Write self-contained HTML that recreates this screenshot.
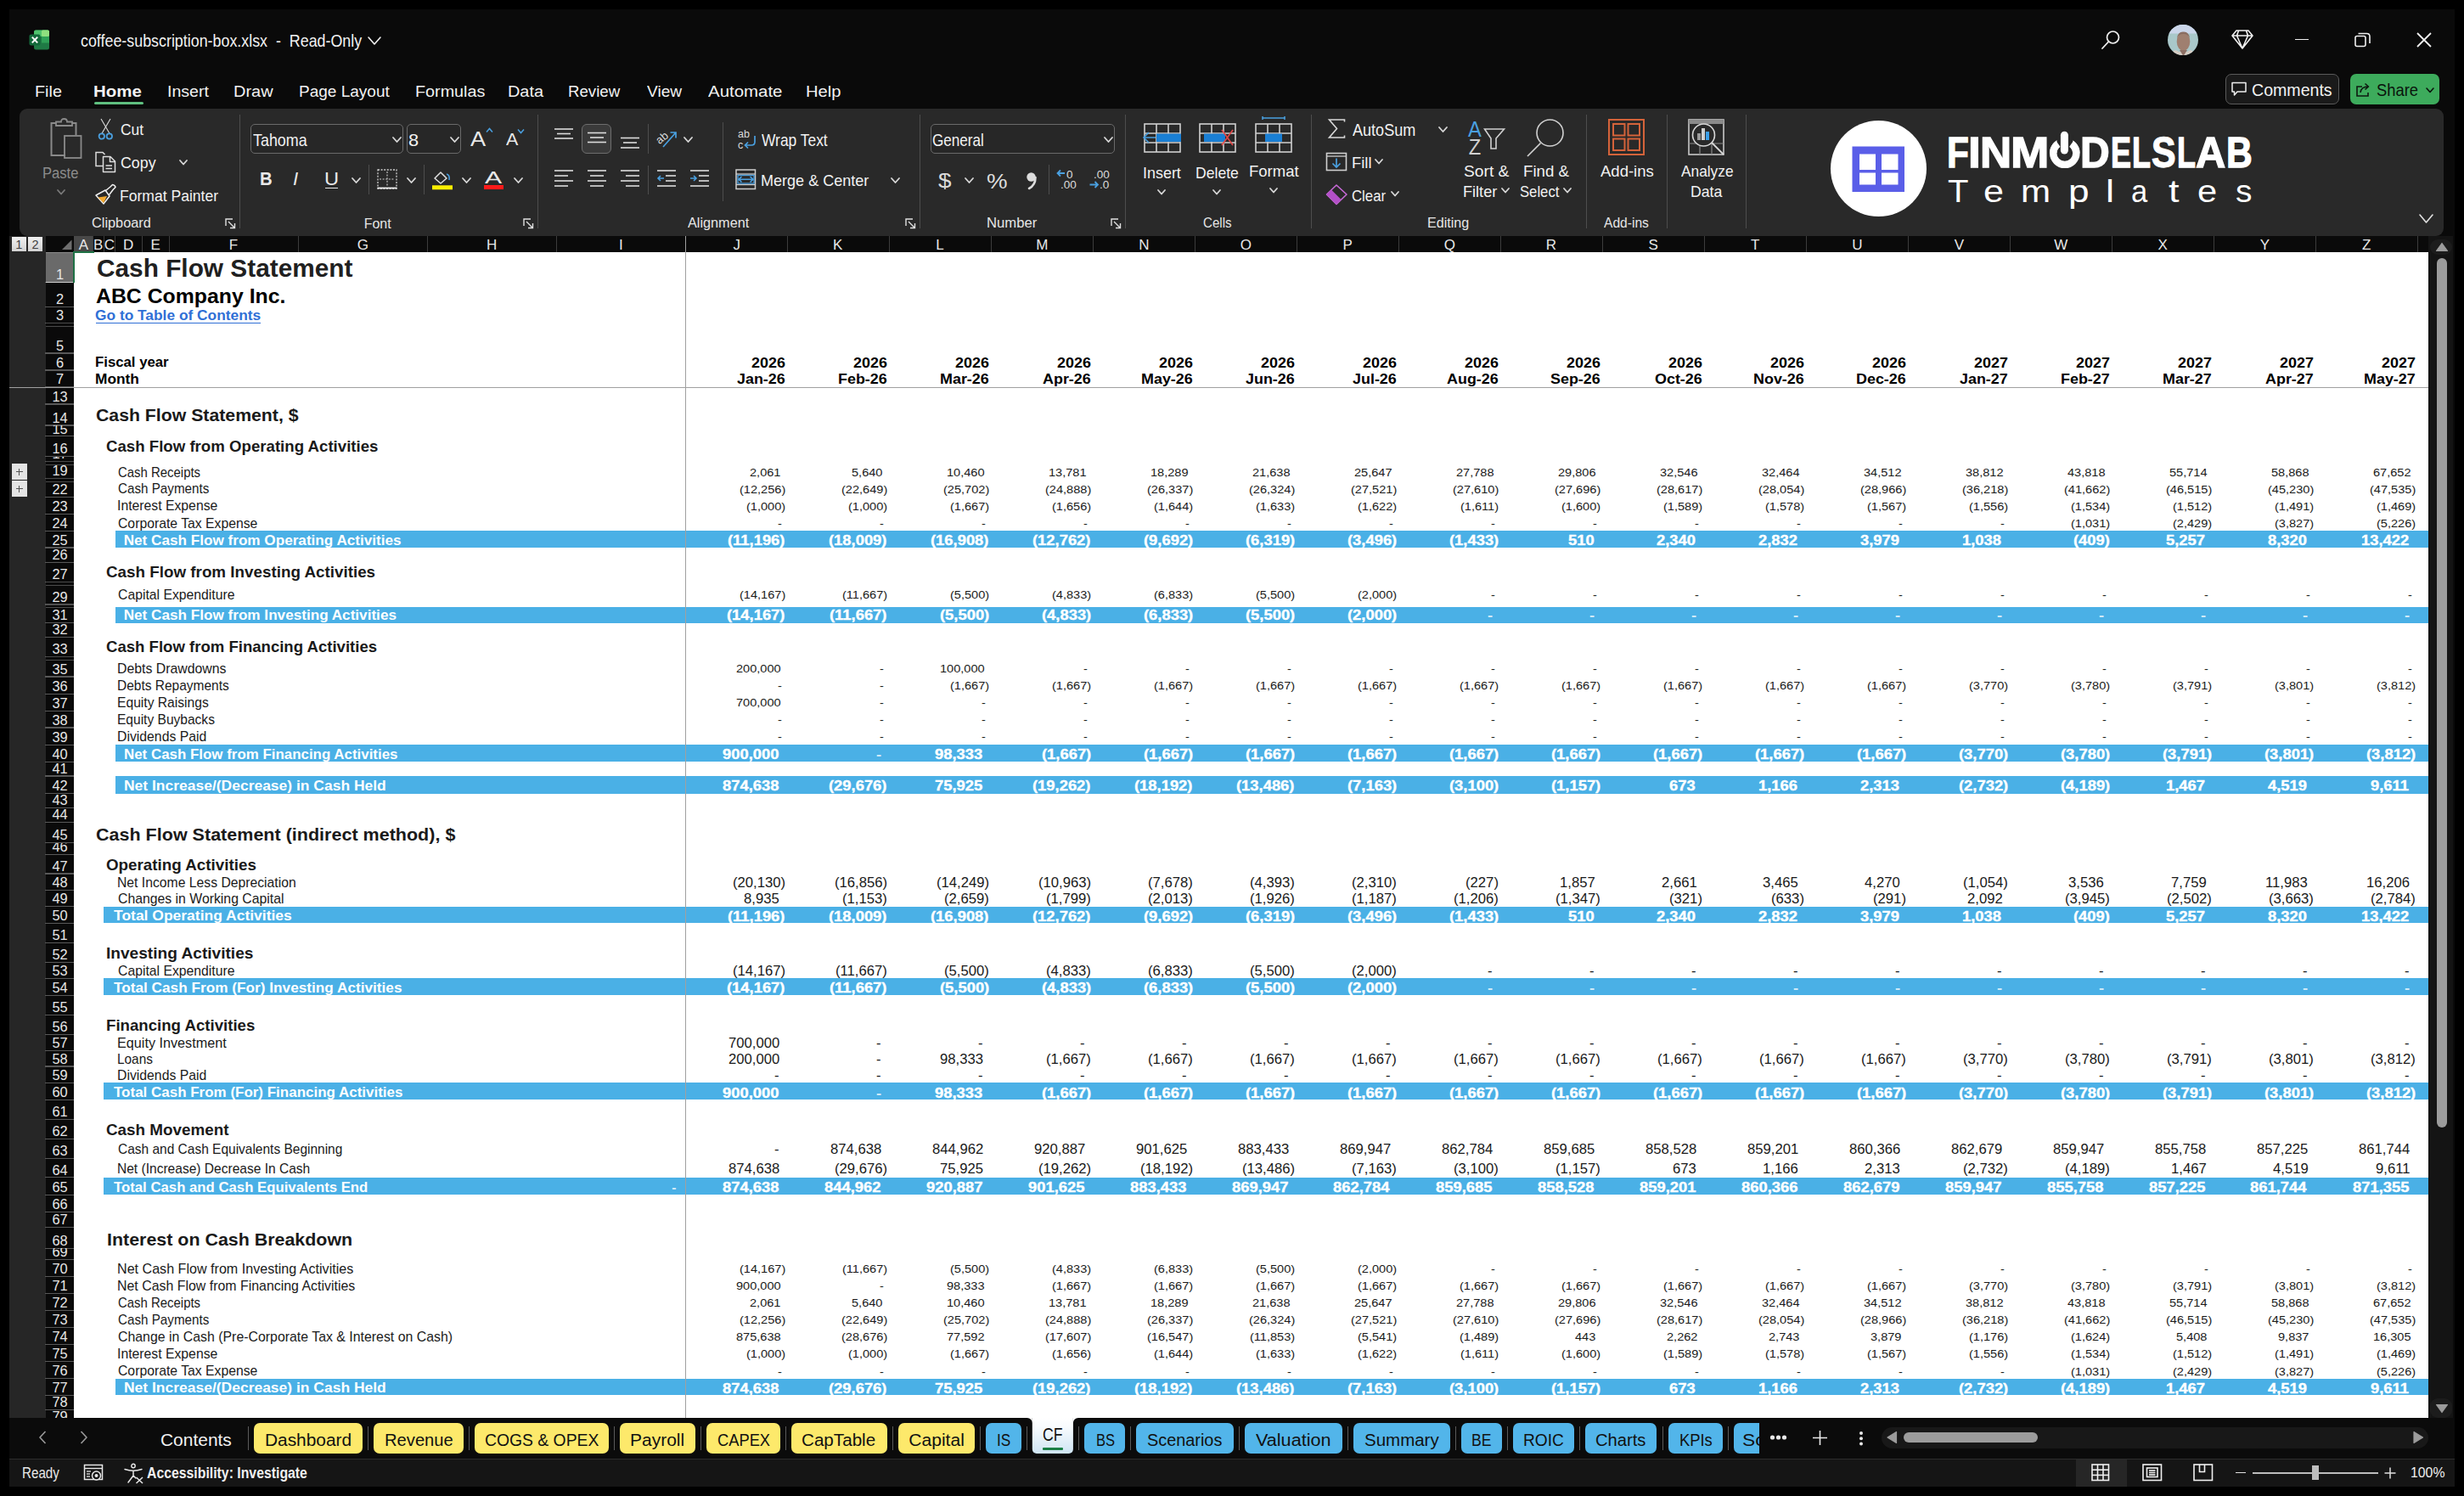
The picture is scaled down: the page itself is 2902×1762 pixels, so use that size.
<!DOCTYPE html>
<html><head><meta charset="utf-8"><style>
*{margin:0;padding:0;box-sizing:border-box}
html,body{width:2902px;height:1762px;overflow:hidden;background:#000;font-family:"Liberation Sans",sans-serif}
.a{position:absolute}
.t{position:absolute;white-space:pre;transform-origin:0 0}
svg{position:absolute;overflow:visible}
</style></head><body>
<div class="a" style="left:11.00px;top:11.00px;width:2880.00px;height:1740.00px;background:#0a0a0a;"></div>
<div class="a" style="left:87.00px;top:297.00px;width:2773.00px;height:1373.00px;background:#ffffff;"></div>
<div class="a" style="left:11.00px;top:278.00px;width:43.00px;height:1392.00px;background:#262626;"></div>
<div class="a" style="left:54.00px;top:297.00px;width:33.00px;height:1373.00px;background:#0a0a0a;"></div>
<div class="a" style="left:54.00px;top:278.00px;width:2806.00px;height:19.00px;background:#0a0a0a;"></div>
<div class="a" style="left:135.50px;top:625.40px;width:2724.50px;height:19.60px;background:#4ab0e6;"></div>
<div class="a" style="left:135.50px;top:715.00px;width:2724.50px;height:18.50px;background:#4ab0e6;"></div>
<div class="a" style="left:135.50px;top:877.10px;width:2724.50px;height:20.30px;background:#4ab0e6;"></div>
<div class="a" style="left:135.50px;top:914.00px;width:2724.50px;height:20.50px;background:#4ab0e6;"></div>
<div class="a" style="left:135.50px;top:1623.50px;width:2724.50px;height:19.70px;background:#4ab0e6;"></div>
<div class="a" style="left:122.40px;top:1067.50px;width:2737.60px;height:19.90px;background:#4ab0e6;"></div>
<div class="a" style="left:122.40px;top:1152.20px;width:2737.60px;height:20.30px;background:#4ab0e6;"></div>
<div class="a" style="left:122.40px;top:1275.20px;width:2737.60px;height:20.30px;background:#4ab0e6;"></div>
<div class="a" style="left:122.40px;top:1386.80px;width:2737.60px;height:20.30px;background:#4ab0e6;"></div>
<div class="a" style="left:54.00px;top:297.00px;width:33.00px;height:35.50px;background:#6a6a6a;"></div>
<div class="a" style="left:54px;top:297.00px;width:33px;height:35.50px;overflow:hidden"><div class="t" style="left:0;width:33px;text-align:center;top:18.26px;font-size:16.4px;line-height:16.4px;color:#e6e6e6">1</div></div>
<div class="a" style="left:53.00px;top:331.90px;width:34.00px;height:1.20px;background:#585858;"></div>
<div class="a" style="left:54px;top:332.50px;width:33px;height:29.20px;overflow:hidden"><div class="t" style="left:0;width:33px;text-align:center;top:11.96px;font-size:16.4px;line-height:16.4px;color:#e6e6e6">2</div></div>
<div class="a" style="left:53.00px;top:361.10px;width:34.00px;height:1.20px;background:#585858;"></div>
<div class="a" style="left:54px;top:361.70px;width:33px;height:18.90px;overflow:hidden"><div class="t" style="left:0;width:33px;text-align:center;top:1.66px;font-size:16.4px;line-height:16.4px;color:#e6e6e6">3</div></div>
<div class="a" style="left:53.00px;top:380.00px;width:34.00px;height:1.20px;background:#585858;"></div>
<div class="a" style="left:54px;top:384.60px;width:33px;height:31.40px;overflow:hidden"><div class="t" style="left:0;width:33px;text-align:center;top:14.16px;font-size:16.4px;line-height:16.4px;color:#e6e6e6">5</div></div>
<div class="a" style="left:53.00px;top:415.40px;width:34.00px;height:1.20px;background:#585858;"></div>
<div class="a" style="left:54px;top:416.00px;width:33px;height:20.00px;overflow:hidden"><div class="t" style="left:0;width:33px;text-align:center;top:2.76px;font-size:16.4px;line-height:16.4px;color:#e6e6e6">6</div></div>
<div class="a" style="left:53.00px;top:435.40px;width:34.00px;height:1.20px;background:#585858;"></div>
<div class="a" style="left:54px;top:436.00px;width:33px;height:19.50px;overflow:hidden"><div class="t" style="left:0;width:33px;text-align:center;top:2.26px;font-size:16.4px;line-height:16.4px;color:#e6e6e6">7</div></div>
<div class="a" style="left:53.00px;top:454.90px;width:34.00px;height:1.20px;background:#585858;"></div>
<div class="a" style="left:54px;top:456.50px;width:33px;height:19.50px;overflow:hidden"><div class="t" style="left:0;width:33px;text-align:center;top:2.26px;font-size:16.4px;line-height:16.4px;color:#e6e6e6">13</div></div>
<div class="a" style="left:53.00px;top:475.40px;width:34.00px;height:1.20px;background:#585858;"></div>
<div class="a" style="left:54px;top:476.00px;width:33px;height:25.00px;overflow:hidden"><div class="t" style="left:0;width:33px;text-align:center;top:7.76px;font-size:16.4px;line-height:16.4px;color:#e6e6e6">14</div></div>
<div class="a" style="left:53.00px;top:500.40px;width:34.00px;height:1.20px;background:#585858;"></div>
<div class="a" style="left:54px;top:501.00px;width:33px;height:12.80px;overflow:hidden"><div class="t" style="left:0;width:33px;text-align:center;top:-4.44px;font-size:16.4px;line-height:16.4px;color:#e6e6e6">15</div></div>
<div class="a" style="left:53.00px;top:513.20px;width:34.00px;height:1.20px;background:#585858;"></div>
<div class="a" style="left:54px;top:513.80px;width:33px;height:23.70px;overflow:hidden"><div class="t" style="left:0;width:33px;text-align:center;top:6.46px;font-size:16.4px;line-height:16.4px;color:#e6e6e6">16</div></div>
<div class="a" style="left:53.00px;top:536.90px;width:34.00px;height:1.20px;background:#585858;"></div>
<div class="a" style="left:54px;top:537.50px;width:33px;height:5.70px;overflow:hidden"><div class="t" style="left:0;width:33px;text-align:center;top:-11.54px;font-size:16.4px;line-height:16.4px;color:#e6e6e6">17</div></div>
<div class="a" style="left:53.00px;top:542.60px;width:34.00px;height:1.20px;background:#585858;"></div>
<div class="a" style="left:54px;top:547.70px;width:33px;height:15.60px;overflow:hidden"><div class="t" style="left:0;width:33px;text-align:center;top:-1.64px;font-size:16.4px;line-height:16.4px;color:#e6e6e6">19</div></div>
<div class="a" style="left:53.00px;top:562.70px;width:34.00px;height:1.20px;background:#585858;"></div>
<div class="a" style="left:54px;top:567.00px;width:33px;height:18.60px;overflow:hidden"><div class="t" style="left:0;width:33px;text-align:center;top:1.36px;font-size:16.4px;line-height:16.4px;color:#e6e6e6">22</div></div>
<div class="a" style="left:53.00px;top:585.00px;width:34.00px;height:1.20px;background:#585858;"></div>
<div class="a" style="left:54px;top:585.60px;width:33px;height:19.90px;overflow:hidden"><div class="t" style="left:0;width:33px;text-align:center;top:2.66px;font-size:16.4px;line-height:16.4px;color:#e6e6e6">23</div></div>
<div class="a" style="left:53.00px;top:604.90px;width:34.00px;height:1.20px;background:#585858;"></div>
<div class="a" style="left:54px;top:605.50px;width:33px;height:19.90px;overflow:hidden"><div class="t" style="left:0;width:33px;text-align:center;top:2.66px;font-size:16.4px;line-height:16.4px;color:#e6e6e6">24</div></div>
<div class="a" style="left:53.00px;top:624.80px;width:34.00px;height:1.20px;background:#585858;"></div>
<div class="a" style="left:54px;top:625.40px;width:33px;height:19.60px;overflow:hidden"><div class="t" style="left:0;width:33px;text-align:center;top:2.36px;font-size:16.4px;line-height:16.4px;color:#e6e6e6">25</div></div>
<div class="a" style="left:53.00px;top:644.40px;width:34.00px;height:1.20px;background:#585858;"></div>
<div class="a" style="left:54px;top:645.00px;width:33px;height:17.30px;overflow:hidden"><div class="t" style="left:0;width:33px;text-align:center;top:0.06px;font-size:16.4px;line-height:16.4px;color:#e6e6e6">26</div></div>
<div class="a" style="left:53.00px;top:661.70px;width:34.00px;height:1.20px;background:#585858;"></div>
<div class="a" style="left:54px;top:662.30px;width:33px;height:23.00px;overflow:hidden"><div class="t" style="left:0;width:33px;text-align:center;top:5.76px;font-size:16.4px;line-height:16.4px;color:#e6e6e6">27</div></div>
<div class="a" style="left:53.00px;top:684.70px;width:34.00px;height:1.20px;background:#585858;"></div>
<div class="a" style="left:54px;top:689.00px;width:33px;height:23.00px;overflow:hidden"><div class="t" style="left:0;width:33px;text-align:center;top:5.76px;font-size:16.4px;line-height:16.4px;color:#e6e6e6">29</div></div>
<div class="a" style="left:53.00px;top:711.40px;width:34.00px;height:1.20px;background:#585858;"></div>
<div class="a" style="left:54px;top:715.00px;width:33px;height:18.50px;overflow:hidden"><div class="t" style="left:0;width:33px;text-align:center;top:1.26px;font-size:16.4px;line-height:16.4px;color:#e6e6e6">31</div></div>
<div class="a" style="left:53.00px;top:732.90px;width:34.00px;height:1.20px;background:#585858;"></div>
<div class="a" style="left:54px;top:733.50px;width:33px;height:16.80px;overflow:hidden"><div class="t" style="left:0;width:33px;text-align:center;top:-0.44px;font-size:16.4px;line-height:16.4px;color:#e6e6e6">32</div></div>
<div class="a" style="left:53.00px;top:749.70px;width:34.00px;height:1.20px;background:#585858;"></div>
<div class="a" style="left:54px;top:750.30px;width:33px;height:22.90px;overflow:hidden"><div class="t" style="left:0;width:33px;text-align:center;top:5.66px;font-size:16.4px;line-height:16.4px;color:#e6e6e6">33</div></div>
<div class="a" style="left:53.00px;top:772.60px;width:34.00px;height:1.20px;background:#585858;"></div>
<div class="a" style="left:54px;top:777.30px;width:33px;height:19.70px;overflow:hidden"><div class="t" style="left:0;width:33px;text-align:center;top:2.46px;font-size:16.4px;line-height:16.4px;color:#e6e6e6">35</div></div>
<div class="a" style="left:53.00px;top:796.40px;width:34.00px;height:1.20px;background:#585858;"></div>
<div class="a" style="left:54px;top:797.00px;width:33px;height:20.30px;overflow:hidden"><div class="t" style="left:0;width:33px;text-align:center;top:3.06px;font-size:16.4px;line-height:16.4px;color:#e6e6e6">36</div></div>
<div class="a" style="left:53.00px;top:816.70px;width:34.00px;height:1.20px;background:#585858;"></div>
<div class="a" style="left:54px;top:817.30px;width:33px;height:19.80px;overflow:hidden"><div class="t" style="left:0;width:33px;text-align:center;top:2.56px;font-size:16.4px;line-height:16.4px;color:#e6e6e6">37</div></div>
<div class="a" style="left:53.00px;top:836.50px;width:34.00px;height:1.20px;background:#585858;"></div>
<div class="a" style="left:54px;top:837.10px;width:33px;height:19.90px;overflow:hidden"><div class="t" style="left:0;width:33px;text-align:center;top:2.66px;font-size:16.4px;line-height:16.4px;color:#e6e6e6">38</div></div>
<div class="a" style="left:53.00px;top:856.40px;width:34.00px;height:1.20px;background:#585858;"></div>
<div class="a" style="left:54px;top:857.00px;width:33px;height:20.10px;overflow:hidden"><div class="t" style="left:0;width:33px;text-align:center;top:2.86px;font-size:16.4px;line-height:16.4px;color:#e6e6e6">39</div></div>
<div class="a" style="left:53.00px;top:876.50px;width:34.00px;height:1.20px;background:#585858;"></div>
<div class="a" style="left:54px;top:877.10px;width:33px;height:20.30px;overflow:hidden"><div class="t" style="left:0;width:33px;text-align:center;top:3.06px;font-size:16.4px;line-height:16.4px;color:#e6e6e6">40</div></div>
<div class="a" style="left:53.00px;top:896.80px;width:34.00px;height:1.20px;background:#585858;"></div>
<div class="a" style="left:54px;top:897.40px;width:33px;height:16.60px;overflow:hidden"><div class="t" style="left:0;width:33px;text-align:center;top:-0.64px;font-size:16.4px;line-height:16.4px;color:#e6e6e6">41</div></div>
<div class="a" style="left:53.00px;top:913.40px;width:34.00px;height:1.20px;background:#585858;"></div>
<div class="a" style="left:54px;top:914.00px;width:33px;height:20.50px;overflow:hidden"><div class="t" style="left:0;width:33px;text-align:center;top:3.26px;font-size:16.4px;line-height:16.4px;color:#e6e6e6">42</div></div>
<div class="a" style="left:53.00px;top:933.90px;width:34.00px;height:1.20px;background:#585858;"></div>
<div class="a" style="left:54px;top:934.50px;width:33px;height:16.70px;overflow:hidden"><div class="t" style="left:0;width:33px;text-align:center;top:-0.54px;font-size:16.4px;line-height:16.4px;color:#e6e6e6">43</div></div>
<div class="a" style="left:53.00px;top:950.60px;width:34.00px;height:1.20px;background:#585858;"></div>
<div class="a" style="left:54px;top:951.20px;width:33px;height:17.00px;overflow:hidden"><div class="t" style="left:0;width:33px;text-align:center;top:-0.24px;font-size:16.4px;line-height:16.4px;color:#e6e6e6">44</div></div>
<div class="a" style="left:53.00px;top:967.60px;width:34.00px;height:1.20px;background:#585858;"></div>
<div class="a" style="left:54px;top:968.20px;width:33px;height:24.30px;overflow:hidden"><div class="t" style="left:0;width:33px;text-align:center;top:7.06px;font-size:16.4px;line-height:16.4px;color:#e6e6e6">45</div></div>
<div class="a" style="left:53.00px;top:991.90px;width:34.00px;height:1.20px;background:#585858;"></div>
<div class="a" style="left:54px;top:992.50px;width:33px;height:13.80px;overflow:hidden"><div class="t" style="left:0;width:33px;text-align:center;top:-3.44px;font-size:16.4px;line-height:16.4px;color:#e6e6e6">46</div></div>
<div class="a" style="left:53.00px;top:1005.70px;width:34.00px;height:1.20px;background:#585858;"></div>
<div class="a" style="left:54px;top:1006.30px;width:33px;height:22.70px;overflow:hidden"><div class="t" style="left:0;width:33px;text-align:center;top:5.46px;font-size:16.4px;line-height:16.4px;color:#e6e6e6">47</div></div>
<div class="a" style="left:53.00px;top:1028.40px;width:34.00px;height:1.20px;background:#585858;"></div>
<div class="a" style="left:54px;top:1029.00px;width:33px;height:19.30px;overflow:hidden"><div class="t" style="left:0;width:33px;text-align:center;top:2.06px;font-size:16.4px;line-height:16.4px;color:#e6e6e6">48</div></div>
<div class="a" style="left:53.00px;top:1047.70px;width:34.00px;height:1.20px;background:#585858;"></div>
<div class="a" style="left:54px;top:1048.30px;width:33px;height:19.20px;overflow:hidden"><div class="t" style="left:0;width:33px;text-align:center;top:1.96px;font-size:16.4px;line-height:16.4px;color:#e6e6e6">49</div></div>
<div class="a" style="left:53.00px;top:1066.90px;width:34.00px;height:1.20px;background:#585858;"></div>
<div class="a" style="left:54px;top:1067.50px;width:33px;height:19.90px;overflow:hidden"><div class="t" style="left:0;width:33px;text-align:center;top:2.66px;font-size:16.4px;line-height:16.4px;color:#e6e6e6">50</div></div>
<div class="a" style="left:53.00px;top:1086.80px;width:34.00px;height:1.20px;background:#585858;"></div>
<div class="a" style="left:54px;top:1087.40px;width:33px;height:22.80px;overflow:hidden"><div class="t" style="left:0;width:33px;text-align:center;top:5.56px;font-size:16.4px;line-height:16.4px;color:#e6e6e6">51</div></div>
<div class="a" style="left:53.00px;top:1109.60px;width:34.00px;height:1.20px;background:#585858;"></div>
<div class="a" style="left:54px;top:1110.20px;width:33px;height:23.30px;overflow:hidden"><div class="t" style="left:0;width:33px;text-align:center;top:6.06px;font-size:16.4px;line-height:16.4px;color:#e6e6e6">52</div></div>
<div class="a" style="left:53.00px;top:1132.90px;width:34.00px;height:1.20px;background:#585858;"></div>
<div class="a" style="left:54px;top:1133.50px;width:33px;height:18.70px;overflow:hidden"><div class="t" style="left:0;width:33px;text-align:center;top:1.46px;font-size:16.4px;line-height:16.4px;color:#e6e6e6">53</div></div>
<div class="a" style="left:53.00px;top:1151.60px;width:34.00px;height:1.20px;background:#585858;"></div>
<div class="a" style="left:54px;top:1152.20px;width:33px;height:20.30px;overflow:hidden"><div class="t" style="left:0;width:33px;text-align:center;top:3.06px;font-size:16.4px;line-height:16.4px;color:#e6e6e6">54</div></div>
<div class="a" style="left:53.00px;top:1171.90px;width:34.00px;height:1.20px;background:#585858;"></div>
<div class="a" style="left:54px;top:1172.50px;width:33px;height:23.10px;overflow:hidden"><div class="t" style="left:0;width:33px;text-align:center;top:5.86px;font-size:16.4px;line-height:16.4px;color:#e6e6e6">55</div></div>
<div class="a" style="left:53.00px;top:1195.00px;width:34.00px;height:1.20px;background:#585858;"></div>
<div class="a" style="left:54px;top:1195.60px;width:33px;height:22.80px;overflow:hidden"><div class="t" style="left:0;width:33px;text-align:center;top:5.56px;font-size:16.4px;line-height:16.4px;color:#e6e6e6">56</div></div>
<div class="a" style="left:53.00px;top:1217.80px;width:34.00px;height:1.20px;background:#585858;"></div>
<div class="a" style="left:54px;top:1218.40px;width:33px;height:18.90px;overflow:hidden"><div class="t" style="left:0;width:33px;text-align:center;top:1.66px;font-size:16.4px;line-height:16.4px;color:#e6e6e6">57</div></div>
<div class="a" style="left:53.00px;top:1236.70px;width:34.00px;height:1.20px;background:#585858;"></div>
<div class="a" style="left:54px;top:1237.30px;width:33px;height:18.70px;overflow:hidden"><div class="t" style="left:0;width:33px;text-align:center;top:1.46px;font-size:16.4px;line-height:16.4px;color:#e6e6e6">58</div></div>
<div class="a" style="left:53.00px;top:1255.40px;width:34.00px;height:1.20px;background:#585858;"></div>
<div class="a" style="left:54px;top:1256.00px;width:33px;height:19.20px;overflow:hidden"><div class="t" style="left:0;width:33px;text-align:center;top:1.96px;font-size:16.4px;line-height:16.4px;color:#e6e6e6">59</div></div>
<div class="a" style="left:53.00px;top:1274.60px;width:34.00px;height:1.20px;background:#585858;"></div>
<div class="a" style="left:54px;top:1275.20px;width:33px;height:20.30px;overflow:hidden"><div class="t" style="left:0;width:33px;text-align:center;top:3.06px;font-size:16.4px;line-height:16.4px;color:#e6e6e6">60</div></div>
<div class="a" style="left:53.00px;top:1294.90px;width:34.00px;height:1.20px;background:#585858;"></div>
<div class="a" style="left:54px;top:1295.50px;width:33px;height:22.90px;overflow:hidden"><div class="t" style="left:0;width:33px;text-align:center;top:5.66px;font-size:16.4px;line-height:16.4px;color:#e6e6e6">61</div></div>
<div class="a" style="left:53.00px;top:1317.80px;width:34.00px;height:1.20px;background:#585858;"></div>
<div class="a" style="left:54px;top:1318.40px;width:33px;height:22.80px;overflow:hidden"><div class="t" style="left:0;width:33px;text-align:center;top:5.56px;font-size:16.4px;line-height:16.4px;color:#e6e6e6">62</div></div>
<div class="a" style="left:53.00px;top:1340.60px;width:34.00px;height:1.20px;background:#585858;"></div>
<div class="a" style="left:54px;top:1341.20px;width:33px;height:22.90px;overflow:hidden"><div class="t" style="left:0;width:33px;text-align:center;top:5.66px;font-size:16.4px;line-height:16.4px;color:#e6e6e6">63</div></div>
<div class="a" style="left:53.00px;top:1363.50px;width:34.00px;height:1.20px;background:#585858;"></div>
<div class="a" style="left:54px;top:1364.10px;width:33px;height:22.70px;overflow:hidden"><div class="t" style="left:0;width:33px;text-align:center;top:5.46px;font-size:16.4px;line-height:16.4px;color:#e6e6e6">64</div></div>
<div class="a" style="left:53.00px;top:1386.20px;width:34.00px;height:1.20px;background:#585858;"></div>
<div class="a" style="left:54px;top:1386.80px;width:33px;height:20.30px;overflow:hidden"><div class="t" style="left:0;width:33px;text-align:center;top:3.06px;font-size:16.4px;line-height:16.4px;color:#e6e6e6">65</div></div>
<div class="a" style="left:53.00px;top:1406.50px;width:34.00px;height:1.20px;background:#585858;"></div>
<div class="a" style="left:54px;top:1407.10px;width:33px;height:20.60px;overflow:hidden"><div class="t" style="left:0;width:33px;text-align:center;top:3.36px;font-size:16.4px;line-height:16.4px;color:#e6e6e6">66</div></div>
<div class="a" style="left:53.00px;top:1427.10px;width:34.00px;height:1.20px;background:#585858;"></div>
<div class="a" style="left:54px;top:1427.70px;width:33px;height:17.70px;overflow:hidden"><div class="t" style="left:0;width:33px;text-align:center;top:0.46px;font-size:16.4px;line-height:16.4px;color:#e6e6e6">67</div></div>
<div class="a" style="left:53.00px;top:1444.80px;width:34.00px;height:1.20px;background:#585858;"></div>
<div class="a" style="left:54px;top:1445.40px;width:33px;height:24.90px;overflow:hidden"><div class="t" style="left:0;width:33px;text-align:center;top:7.66px;font-size:16.4px;line-height:16.4px;color:#e6e6e6">68</div></div>
<div class="a" style="left:53.00px;top:1469.70px;width:34.00px;height:1.20px;background:#585858;"></div>
<div class="a" style="left:54px;top:1470.30px;width:33px;height:13.20px;overflow:hidden"><div class="t" style="left:0;width:33px;text-align:center;top:-4.04px;font-size:16.4px;line-height:16.4px;color:#e6e6e6">69</div></div>
<div class="a" style="left:53.00px;top:1482.90px;width:34.00px;height:1.20px;background:#585858;"></div>
<div class="a" style="left:54px;top:1483.50px;width:33px;height:19.70px;overflow:hidden"><div class="t" style="left:0;width:33px;text-align:center;top:2.46px;font-size:16.4px;line-height:16.4px;color:#e6e6e6">70</div></div>
<div class="a" style="left:53.00px;top:1502.60px;width:34.00px;height:1.20px;background:#585858;"></div>
<div class="a" style="left:54px;top:1503.20px;width:33px;height:19.90px;overflow:hidden"><div class="t" style="left:0;width:33px;text-align:center;top:2.66px;font-size:16.4px;line-height:16.4px;color:#e6e6e6">71</div></div>
<div class="a" style="left:53.00px;top:1522.50px;width:34.00px;height:1.20px;background:#585858;"></div>
<div class="a" style="left:54px;top:1523.10px;width:33px;height:20.30px;overflow:hidden"><div class="t" style="left:0;width:33px;text-align:center;top:3.06px;font-size:16.4px;line-height:16.4px;color:#e6e6e6">72</div></div>
<div class="a" style="left:53.00px;top:1542.80px;width:34.00px;height:1.20px;background:#585858;"></div>
<div class="a" style="left:54px;top:1543.40px;width:33px;height:19.70px;overflow:hidden"><div class="t" style="left:0;width:33px;text-align:center;top:2.46px;font-size:16.4px;line-height:16.4px;color:#e6e6e6">73</div></div>
<div class="a" style="left:53.00px;top:1562.50px;width:34.00px;height:1.20px;background:#585858;"></div>
<div class="a" style="left:54px;top:1563.10px;width:33px;height:20.30px;overflow:hidden"><div class="t" style="left:0;width:33px;text-align:center;top:3.06px;font-size:16.4px;line-height:16.4px;color:#e6e6e6">74</div></div>
<div class="a" style="left:53.00px;top:1582.80px;width:34.00px;height:1.20px;background:#585858;"></div>
<div class="a" style="left:54px;top:1583.40px;width:33px;height:19.80px;overflow:hidden"><div class="t" style="left:0;width:33px;text-align:center;top:2.56px;font-size:16.4px;line-height:16.4px;color:#e6e6e6">75</div></div>
<div class="a" style="left:53.00px;top:1602.60px;width:34.00px;height:1.20px;background:#585858;"></div>
<div class="a" style="left:54px;top:1603.20px;width:33px;height:20.30px;overflow:hidden"><div class="t" style="left:0;width:33px;text-align:center;top:3.06px;font-size:16.4px;line-height:16.4px;color:#e6e6e6">76</div></div>
<div class="a" style="left:53.00px;top:1622.90px;width:34.00px;height:1.20px;background:#585858;"></div>
<div class="a" style="left:54px;top:1623.50px;width:33px;height:19.70px;overflow:hidden"><div class="t" style="left:0;width:33px;text-align:center;top:2.46px;font-size:16.4px;line-height:16.4px;color:#e6e6e6">77</div></div>
<div class="a" style="left:53.00px;top:1642.60px;width:34.00px;height:1.20px;background:#585858;"></div>
<div class="a" style="left:54px;top:1643.20px;width:33px;height:17.30px;overflow:hidden"><div class="t" style="left:0;width:33px;text-align:center;top:0.06px;font-size:16.4px;line-height:16.4px;color:#e6e6e6">78</div></div>
<div class="a" style="left:53.00px;top:1659.90px;width:34.00px;height:1.20px;background:#585858;"></div>
<div class="a" style="left:54px;top:1660.50px;width:33px;height:9.50px;overflow:hidden"><div class="t" style="left:0;width:33px;text-align:center;top:-0.74px;font-size:16.4px;line-height:16.4px;color:#e6e6e6">79</div></div>
<div class="a" style="left:54.00px;top:380.10px;width:33.00px;height:1.00px;background:#4a4a4a;"></div>
<div class="a" style="left:54.00px;top:384.10px;width:33.00px;height:1.00px;background:#4a4a4a;"></div>
<div class="a" style="left:54.00px;top:542.70px;width:33.00px;height:1.00px;background:#4a4a4a;"></div>
<div class="a" style="left:54.00px;top:547.20px;width:33.00px;height:1.00px;background:#4a4a4a;"></div>
<div class="a" style="left:54.00px;top:562.80px;width:33.00px;height:1.00px;background:#4a4a4a;"></div>
<div class="a" style="left:54.00px;top:566.50px;width:33.00px;height:1.00px;background:#4a4a4a;"></div>
<div class="a" style="left:54.00px;top:684.80px;width:33.00px;height:1.00px;background:#4a4a4a;"></div>
<div class="a" style="left:54.00px;top:688.50px;width:33.00px;height:1.00px;background:#4a4a4a;"></div>
<div class="a" style="left:54.00px;top:711.50px;width:33.00px;height:1.00px;background:#4a4a4a;"></div>
<div class="a" style="left:54.00px;top:714.50px;width:33.00px;height:1.00px;background:#4a4a4a;"></div>
<div class="a" style="left:54.00px;top:772.70px;width:33.00px;height:1.00px;background:#4a4a4a;"></div>
<div class="a" style="left:54.00px;top:776.80px;width:33.00px;height:1.00px;background:#4a4a4a;"></div>
<div class="a" style="left:87.00px;top:278.00px;width:22.60px;height:19.00px;background:#484848;"></div>
<div class="t" style="left:92.64px;top:280.25px;font-size:17.01px;line-height:17.01px;color:#e8e8e8;">A</div>
<div class="a" style="left:109.10px;top:278.00px;width:1.00px;height:19.00px;background:#3c3c3c;"></div>
<div class="t" style="left:110.08px;top:280.25px;font-size:17.01px;line-height:17.01px;color:#e8e8e8;">B</div>
<div class="a" style="left:121.90px;top:278.00px;width:1.00px;height:19.00px;background:#3c3c3c;"></div>
<div class="t" style="left:122.71px;top:280.25px;font-size:17.01px;line-height:17.01px;color:#e8e8e8;">C</div>
<div class="a" style="left:135.00px;top:278.00px;width:1.00px;height:19.00px;background:#3c3c3c;"></div>
<div class="t" style="left:145.07px;top:280.25px;font-size:17.01px;line-height:17.01px;color:#e8e8e8;">D</div>
<div class="a" style="left:167.00px;top:278.00px;width:1.00px;height:19.00px;background:#3c3c3c;"></div>
<div class="t" style="left:177.45px;top:280.25px;font-size:17.01px;line-height:17.01px;color:#e8e8e8;">E</div>
<div class="a" style="left:198.90px;top:278.00px;width:1.00px;height:19.00px;background:#3c3c3c;"></div>
<div class="t" style="left:269.84px;top:280.25px;font-size:17.01px;line-height:17.01px;color:#e8e8e8;">F</div>
<div class="a" style="left:350.90px;top:278.00px;width:1.00px;height:19.00px;background:#3c3c3c;"></div>
<div class="t" style="left:420.79px;top:280.25px;font-size:17.01px;line-height:17.01px;color:#e8e8e8;">G</div>
<div class="a" style="left:502.50px;top:278.00px;width:1.00px;height:19.00px;background:#3c3c3c;"></div>
<div class="t" style="left:573.01px;top:280.25px;font-size:17.01px;line-height:17.01px;color:#e8e8e8;">H</div>
<div class="a" style="left:654.80px;top:278.00px;width:1.00px;height:19.00px;background:#3c3c3c;"></div>
<div class="t" style="left:728.94px;top:280.25px;font-size:17.01px;line-height:17.01px;color:#e8e8e8;">I</div>
<div class="a" style="left:806.80px;top:278.00px;width:1.00px;height:19.00px;background:#3c3c3c;"></div>
<div class="t" style="left:863.54px;top:280.25px;font-size:17.01px;line-height:17.01px;color:#e8e8e8;">J</div>
<div class="a" style="left:926.80px;top:278.00px;width:1.00px;height:19.00px;background:#3c3c3c;"></div>
<div class="t" style="left:981.02px;top:280.25px;font-size:17.01px;line-height:17.01px;color:#e8e8e8;">K</div>
<div class="a" style="left:1046.80px;top:278.00px;width:1.00px;height:19.00px;background:#3c3c3c;"></div>
<div class="t" style="left:1102.15px;top:280.25px;font-size:17.01px;line-height:17.01px;color:#e8e8e8;">L</div>
<div class="a" style="left:1166.80px;top:278.00px;width:1.00px;height:19.00px;background:#3c3c3c;"></div>
<div class="t" style="left:1220.21px;top:280.25px;font-size:17.01px;line-height:17.01px;color:#e8e8e8;">M</div>
<div class="a" style="left:1286.80px;top:278.00px;width:1.00px;height:19.00px;background:#3c3c3c;"></div>
<div class="t" style="left:1341.16px;top:280.25px;font-size:17.01px;line-height:17.01px;color:#e8e8e8;">N</div>
<div class="a" style="left:1406.80px;top:278.00px;width:1.00px;height:19.00px;background:#3c3c3c;"></div>
<div class="t" style="left:1460.68px;top:280.25px;font-size:17.01px;line-height:17.01px;color:#e8e8e8;">O</div>
<div class="a" style="left:1526.80px;top:278.00px;width:1.00px;height:19.00px;background:#3c3c3c;"></div>
<div class="t" style="left:1581.38px;top:280.25px;font-size:17.01px;line-height:17.01px;color:#e8e8e8;">P</div>
<div class="a" style="left:1646.80px;top:278.00px;width:1.00px;height:19.00px;background:#3c3c3c;"></div>
<div class="t" style="left:1700.68px;top:280.25px;font-size:17.01px;line-height:17.01px;color:#e8e8e8;">Q</div>
<div class="a" style="left:1766.80px;top:278.00px;width:1.00px;height:19.00px;background:#3c3c3c;"></div>
<div class="t" style="left:1820.85px;top:280.25px;font-size:17.01px;line-height:17.01px;color:#e8e8e8;">R</div>
<div class="a" style="left:1886.80px;top:278.00px;width:1.00px;height:19.00px;background:#3c3c3c;"></div>
<div class="t" style="left:1941.62px;top:280.25px;font-size:17.01px;line-height:17.01px;color:#e8e8e8;">S</div>
<div class="a" style="left:2006.80px;top:278.00px;width:1.00px;height:19.00px;background:#3c3c3c;"></div>
<div class="t" style="left:2062.11px;top:280.25px;font-size:17.01px;line-height:17.01px;color:#e8e8e8;">T</div>
<div class="a" style="left:2126.80px;top:278.00px;width:1.00px;height:19.00px;background:#3c3c3c;"></div>
<div class="t" style="left:2181.16px;top:280.25px;font-size:17.01px;line-height:17.01px;color:#e8e8e8;">U</div>
<div class="a" style="left:2246.80px;top:278.00px;width:1.00px;height:19.00px;background:#3c3c3c;"></div>
<div class="t" style="left:2301.64px;top:280.25px;font-size:17.01px;line-height:17.01px;color:#e8e8e8;">V</div>
<div class="a" style="left:2366.80px;top:278.00px;width:1.00px;height:19.00px;background:#3c3c3c;"></div>
<div class="t" style="left:2419.27px;top:280.25px;font-size:17.01px;line-height:17.01px;color:#e8e8e8;">W</div>
<div class="a" style="left:2486.80px;top:278.00px;width:1.00px;height:19.00px;background:#3c3c3c;"></div>
<div class="t" style="left:2541.62px;top:280.25px;font-size:17.01px;line-height:17.01px;color:#e8e8e8;">X</div>
<div class="a" style="left:2606.80px;top:278.00px;width:1.00px;height:19.00px;background:#3c3c3c;"></div>
<div class="t" style="left:2661.64px;top:280.25px;font-size:17.01px;line-height:17.01px;color:#e8e8e8;">Y</div>
<div class="a" style="left:2726.80px;top:278.00px;width:1.00px;height:19.00px;background:#3c3c3c;"></div>
<div class="t" style="left:2782.10px;top:280.25px;font-size:17.01px;line-height:17.01px;color:#e8e8e8;">Z</div>
<div class="a" style="left:2846.80px;top:278.00px;width:1.00px;height:19.00px;background:#3c3c3c;"></div>
<div class="a" style="left:86.00px;top:296.00px;width:24.60px;height:2.00px;background:#1e7145;"></div>
<svg style="left:72px;top:282px" width="13" height="13"><polygon points="12.5,0.5 12.5,12 1,12" fill="#6e6e6e"/></svg>
<div class="a" style="left:13.70px;top:279.00px;width:17.50px;height:17.00px;background:linear-gradient(#f0f0f0,#d2d2d2);"></div>
<div class="t" style="left:18.21px;top:280.95px;font-size:14.53px;line-height:14.53px;color:#404040;">1</div>
<div class="a" style="left:32.70px;top:279.00px;width:17.50px;height:17.00px;background:linear-gradient(#f0f0f0,#d2d2d2);"></div>
<div class="t" style="left:37.41px;top:280.95px;font-size:14.53px;line-height:14.53px;color:#404040;">2</div>
<div class="a" style="left:13.50px;top:546.00px;width:18.00px;height:18.50px;background:#e4e4e4;"></div>
<div class="a" style="left:18.50px;top:554.75px;width:8.00px;height:1.50px;background:#555;"></div>
<div class="a" style="left:21.75px;top:551.50px;width:1.50px;height:8.00px;background:#555;"></div>
<div class="a" style="left:13.50px;top:566.00px;width:18.00px;height:18.50px;background:#e4e4e4;"></div>
<div class="a" style="left:18.50px;top:574.75px;width:8.00px;height:1.50px;background:#555;"></div>
<div class="a" style="left:21.75px;top:571.50px;width:1.50px;height:8.00px;background:#555;"></div>
<div class="a" style="left:54.00px;top:331.60px;width:32.20px;height:1.40px;background:#cfcfcf;"></div>
<div class="a" style="left:54.00px;top:297.00px;width:32.20px;height:1.00px;background:#8a8a8a;"></div>
<div class="a" style="left:86.20px;top:297.00px;width:1.60px;height:36.00px;background:#1e7145;"></div>
<div class="a" style="left:86.20px;top:297.00px;width:24.40px;height:1.20px;background:#1e7145;"></div>
<div class="t" style="left:113.81px;top:301.89px;font-size:29.07px;line-height:29.07px;font-weight:700;color:#202020;transform:scaleX(1.0256);">Cash Flow Statement</div>
<div class="t" style="left:112.95px;top:336.84px;font-size:24.42px;line-height:24.42px;font-weight:700;color:#000;transform:scaleX(1.0169);">ABC Company Inc.</div>
<div class="t" style="left:112.31px;top:364.47px;font-size:16.86px;line-height:16.86px;font-weight:700;color:#2f6fd6;transform:scaleX(1.0283);">Go to Table of Contents</div>
<div class="a" style="left:113.00px;top:379.60px;width:193.80px;height:1.40px;background:#2f6fd6;"></div>
<div class="t" style="left:112.49px;top:419.29px;font-size:16.72px;line-height:16.72px;font-weight:700;color:#000;transform:scaleX(1.0026);">Fiscal year</div>
<div class="t" style="left:112.46px;top:439.19px;font-size:16.72px;line-height:16.72px;font-weight:700;color:#000;transform:scaleX(1.0374);">Month</div>
<div class="t" style="left:112.75px;top:480.30px;font-size:19.77px;line-height:19.77px;font-weight:700;color:#1a1a1a;transform:scaleX(1.0752);">Cash Flow Statement, $</div>
<div class="t" style="left:112.74px;top:973.45px;font-size:20.06px;line-height:20.06px;font-weight:700;color:#1a1a1a;transform:scaleX(1.0737);">Cash Flow Statement (indirect method), $</div>
<div class="t" style="left:125.99px;top:1450.15px;font-size:20.06px;line-height:20.06px;font-weight:700;color:#1a1a1a;transform:scaleX(1.0682);">Interest on Cash Breakdown</div>
<div class="t" style="left:125.45px;top:518.23px;font-size:17.73px;line-height:17.73px;font-weight:700;color:#1a1a1a;transform:scaleX(1.0522);">Cash Flow from Operating Activities</div>
<div class="t" style="left:125.45px;top:666.33px;font-size:17.73px;line-height:17.73px;font-weight:700;color:#1a1a1a;transform:scaleX(1.0617);">Cash Flow from Investing Activities</div>
<div class="t" style="left:125.46px;top:754.33px;font-size:17.73px;line-height:17.73px;font-weight:700;color:#1a1a1a;transform:scaleX(1.0476);">Cash Flow from Financing Activities</div>
<div class="t" style="left:125.45px;top:1010.93px;font-size:17.73px;line-height:17.73px;font-weight:700;color:#1a1a1a;transform:scaleX(1.0608);">Operating Activities</div>
<div class="t" style="left:124.94px;top:1114.83px;font-size:17.73px;line-height:17.73px;font-weight:700;color:#1a1a1a;transform:scaleX(1.0782);">Investing Activities</div>
<div class="t" style="left:124.97px;top:1199.73px;font-size:17.73px;line-height:17.73px;font-weight:700;color:#1a1a1a;transform:scaleX(1.0516);">Financing Activities</div>
<div class="t" style="left:125.45px;top:1322.53px;font-size:17.73px;line-height:17.73px;font-weight:700;color:#1a1a1a;transform:scaleX(1.0638);">Cash Movement</div>
<div class="t" style="left:138.75px;top:548.62px;font-size:16.57px;line-height:16.57px;color:#1a1a1a;transform:scaleX(0.9011);">Cash Receipts</div>
<div class="t" style="left:138.74px;top:568.32px;font-size:16.57px;line-height:16.57px;color:#1a1a1a;transform:scaleX(0.9176);">Cash Payments</div>
<div class="t" style="left:138.05px;top:588.42px;font-size:16.57px;line-height:16.57px;color:#1a1a1a;transform:scaleX(0.9518);">Interest Expense</div>
<div class="t" style="left:138.71px;top:608.52px;font-size:16.57px;line-height:16.57px;color:#1a1a1a;transform:scaleX(0.9510);">Corporate Tax Expense</div>
<div class="t" style="left:138.71px;top:692.72px;font-size:16.57px;line-height:16.57px;color:#1a1a1a;transform:scaleX(0.9513);">Capital Expenditure</div>
<div class="t" style="left:138.20px;top:780.02px;font-size:16.57px;line-height:16.57px;color:#1a1a1a;transform:scaleX(0.9563);">Debts Drawdowns</div>
<div class="t" style="left:138.23px;top:799.92px;font-size:16.57px;line-height:16.57px;color:#1a1a1a;transform:scaleX(0.9356);">Debts Repayments</div>
<div class="t" style="left:138.22px;top:819.82px;font-size:16.57px;line-height:16.57px;color:#1a1a1a;transform:scaleX(0.9444);">Equity Raisings</div>
<div class="t" style="left:138.23px;top:839.72px;font-size:16.57px;line-height:16.57px;color:#1a1a1a;transform:scaleX(0.9384);">Equity Buybacks</div>
<div class="t" style="left:138.21px;top:859.82px;font-size:16.57px;line-height:16.57px;color:#1a1a1a;transform:scaleX(0.9528);">Dividends Paid</div>
<div class="t" style="left:138.21px;top:1031.62px;font-size:16.57px;line-height:16.57px;color:#1a1a1a;transform:scaleX(0.9497);">Net Income Less Depreciation</div>
<div class="t" style="left:138.71px;top:1050.92px;font-size:16.57px;line-height:16.57px;color:#1a1a1a;transform:scaleX(0.9535);">Changes in Working Capital</div>
<div class="t" style="left:138.71px;top:1135.72px;font-size:16.57px;line-height:16.57px;color:#1a1a1a;transform:scaleX(0.9513);">Capital Expenditure</div>
<div class="t" style="left:138.17px;top:1220.62px;font-size:16.57px;line-height:16.57px;color:#1a1a1a;transform:scaleX(0.9777);">Equity Investment</div>
<div class="t" style="left:138.24px;top:1239.92px;font-size:16.57px;line-height:16.57px;color:#1a1a1a;transform:scaleX(0.9287);">Loans</div>
<div class="t" style="left:138.21px;top:1258.62px;font-size:16.57px;line-height:16.57px;color:#1a1a1a;transform:scaleX(0.9528);">Dividends Paid</div>
<div class="t" style="left:138.73px;top:1345.82px;font-size:16.57px;line-height:16.57px;color:#1a1a1a;transform:scaleX(0.9352);">Cash and Cash Equivalents Beginning</div>
<div class="t" style="left:138.22px;top:1368.82px;font-size:16.57px;line-height:16.57px;color:#1a1a1a;transform:scaleX(0.9387);">Net (Increase) Decrease In Cash</div>
<div class="t" style="left:138.18px;top:1486.92px;font-size:16.57px;line-height:16.57px;color:#1a1a1a;transform:scaleX(0.9721);">Net Cash Flow from Investing Activities</div>
<div class="t" style="left:138.20px;top:1506.82px;font-size:16.57px;line-height:16.57px;color:#1a1a1a;transform:scaleX(0.9604);">Net Cash Flow from Financing Activities</div>
<div class="t" style="left:138.75px;top:1527.12px;font-size:16.57px;line-height:16.57px;color:#1a1a1a;transform:scaleX(0.9011);">Cash Receipts</div>
<div class="t" style="left:138.74px;top:1547.02px;font-size:16.57px;line-height:16.57px;color:#1a1a1a;transform:scaleX(0.9176);">Cash Payments</div>
<div class="t" style="left:138.71px;top:1566.72px;font-size:16.57px;line-height:16.57px;color:#1a1a1a;transform:scaleX(0.9584);">Change in Cash (Pre-Corporate Tax &amp; Interest on Cash)</div>
<div class="t" style="left:138.05px;top:1587.02px;font-size:16.57px;line-height:16.57px;color:#1a1a1a;transform:scaleX(0.9518);">Interest Expense</div>
<div class="t" style="left:138.71px;top:1607.32px;font-size:16.57px;line-height:16.57px;color:#1a1a1a;transform:scaleX(0.9510);">Corporate Tax Expense</div>
<div class="t" style="left:145.67px;top:627.72px;font-size:17.15px;line-height:17.15px;font-weight:700;color:#ffffff;">Net Cash Flow from Operating Activities</div>
<div class="t" style="left:145.67px;top:715.52px;font-size:17.15px;line-height:17.15px;font-weight:700;color:#ffffff;">Net Cash Flow from Investing Activities</div>
<div class="t" style="left:145.68px;top:879.62px;font-size:17.15px;line-height:17.15px;font-weight:700;color:#ffffff;transform:scaleX(0.9863);">Net Cash Flow from Financing Activities</div>
<div class="t" style="left:145.65px;top:916.72px;font-size:17.15px;line-height:17.15px;font-weight:700;color:#ffffff;transform:scaleX(1.0193);">Net Increase/(Decrease) in Cash Held</div>
<div class="t" style="left:133.79px;top:1070.32px;font-size:17.15px;line-height:17.15px;font-weight:700;color:#ffffff;transform:scaleX(1.0197);">Total Operating Activities</div>
<div class="t" style="left:133.79px;top:1154.92px;font-size:17.15px;line-height:17.15px;font-weight:700;color:#ffffff;transform:scaleX(1.0042);">Total Cash From (For) Investing Activities</div>
<div class="t" style="left:133.80px;top:1278.42px;font-size:17.15px;line-height:17.15px;font-weight:700;color:#ffffff;transform:scaleX(0.9903);">Total Cash From (For) Financing Activities</div>
<div class="t" style="left:133.80px;top:1390.02px;font-size:17.15px;line-height:17.15px;font-weight:700;color:#ffffff;transform:scaleX(0.9770);">Total Cash and Cash Equivalents End</div>
<div class="t" style="left:145.65px;top:1626.12px;font-size:17.15px;line-height:17.15px;font-weight:700;color:#ffffff;transform:scaleX(1.0193);">Net Increase/(Decrease) in Cash Held</div>
<div class="t" style="left:884.68px;top:420.09px;font-size:16.72px;line-height:16.72px;font-weight:700;color:#000000;transform:scaleX(1.0724);">2026</div>
<div class="t" style="left:1004.68px;top:420.09px;font-size:16.72px;line-height:16.72px;font-weight:700;color:#000000;transform:scaleX(1.0724);">2026</div>
<div class="t" style="left:1124.68px;top:420.09px;font-size:16.72px;line-height:16.72px;font-weight:700;color:#000000;transform:scaleX(1.0724);">2026</div>
<div class="t" style="left:1244.68px;top:420.09px;font-size:16.72px;line-height:16.72px;font-weight:700;color:#000000;transform:scaleX(1.0724);">2026</div>
<div class="t" style="left:1364.68px;top:420.09px;font-size:16.72px;line-height:16.72px;font-weight:700;color:#000000;transform:scaleX(1.0724);">2026</div>
<div class="t" style="left:1484.68px;top:420.09px;font-size:16.72px;line-height:16.72px;font-weight:700;color:#000000;transform:scaleX(1.0724);">2026</div>
<div class="t" style="left:1604.68px;top:420.09px;font-size:16.72px;line-height:16.72px;font-weight:700;color:#000000;transform:scaleX(1.0724);">2026</div>
<div class="t" style="left:1724.68px;top:420.09px;font-size:16.72px;line-height:16.72px;font-weight:700;color:#000000;transform:scaleX(1.0724);">2026</div>
<div class="t" style="left:1844.68px;top:420.09px;font-size:16.72px;line-height:16.72px;font-weight:700;color:#000000;transform:scaleX(1.0724);">2026</div>
<div class="t" style="left:1964.68px;top:420.09px;font-size:16.72px;line-height:16.72px;font-weight:700;color:#000000;transform:scaleX(1.0724);">2026</div>
<div class="t" style="left:2084.68px;top:420.09px;font-size:16.72px;line-height:16.72px;font-weight:700;color:#000000;transform:scaleX(1.0724);">2026</div>
<div class="t" style="left:2204.68px;top:420.09px;font-size:16.72px;line-height:16.72px;font-weight:700;color:#000000;transform:scaleX(1.0724);">2026</div>
<div class="t" style="left:2324.82px;top:420.09px;font-size:16.72px;line-height:16.72px;font-weight:700;color:#000000;transform:scaleX(1.0724);">2027</div>
<div class="t" style="left:2444.82px;top:420.09px;font-size:16.72px;line-height:16.72px;font-weight:700;color:#000000;transform:scaleX(1.0724);">2027</div>
<div class="t" style="left:2564.82px;top:420.09px;font-size:16.72px;line-height:16.72px;font-weight:700;color:#000000;transform:scaleX(1.0724);">2027</div>
<div class="t" style="left:2684.82px;top:420.09px;font-size:16.72px;line-height:16.72px;font-weight:700;color:#000000;transform:scaleX(1.0724);">2027</div>
<div class="t" style="left:2804.82px;top:420.09px;font-size:16.72px;line-height:16.72px;font-weight:700;color:#000000;transform:scaleX(1.0724);">2027</div>
<div class="t" style="left:867.76px;top:439.19px;font-size:16.72px;line-height:16.72px;font-weight:700;color:#000000;transform:scaleX(1.0724);">Jan-26</div>
<div class="t" style="left:986.75px;top:439.19px;font-size:16.72px;line-height:16.72px;font-weight:700;color:#000000;transform:scaleX(1.0724);">Feb-26</div>
<div class="t" style="left:1106.75px;top:439.19px;font-size:16.72px;line-height:16.72px;font-weight:700;color:#000000;transform:scaleX(1.0724);">Mar-26</div>
<div class="t" style="left:1227.76px;top:439.19px;font-size:16.72px;line-height:16.72px;font-weight:700;color:#000000;transform:scaleX(1.0724);">Apr-26</div>
<div class="t" style="left:1343.78px;top:439.19px;font-size:16.72px;line-height:16.72px;font-weight:700;color:#000000;transform:scaleX(1.0724);">May-26</div>
<div class="t" style="left:1466.75px;top:439.19px;font-size:16.72px;line-height:16.72px;font-weight:700;color:#000000;transform:scaleX(1.0724);">Jun-26</div>
<div class="t" style="left:1592.74px;top:439.19px;font-size:16.72px;line-height:16.72px;font-weight:700;color:#000000;transform:scaleX(1.0724);">Jul-26</div>
<div class="t" style="left:1703.78px;top:439.19px;font-size:16.72px;line-height:16.72px;font-weight:700;color:#000000;transform:scaleX(1.0724);">Aug-26</div>
<div class="t" style="left:1825.75px;top:439.19px;font-size:16.72px;line-height:16.72px;font-weight:700;color:#000000;transform:scaleX(1.0724);">Sep-26</div>
<div class="t" style="left:1948.76px;top:439.19px;font-size:16.72px;line-height:16.72px;font-weight:700;color:#000000;transform:scaleX(1.0724);">Oct-26</div>
<div class="t" style="left:2064.78px;top:439.19px;font-size:16.72px;line-height:16.72px;font-weight:700;color:#000000;transform:scaleX(1.0724);">Nov-26</div>
<div class="t" style="left:2185.75px;top:439.19px;font-size:16.72px;line-height:16.72px;font-weight:700;color:#000000;transform:scaleX(1.0724);">Dec-26</div>
<div class="t" style="left:2307.90px;top:439.19px;font-size:16.72px;line-height:16.72px;font-weight:700;color:#000000;transform:scaleX(1.0724);">Jan-27</div>
<div class="t" style="left:2426.90px;top:439.19px;font-size:16.72px;line-height:16.72px;font-weight:700;color:#000000;transform:scaleX(1.0724);">Feb-27</div>
<div class="t" style="left:2546.90px;top:439.19px;font-size:16.72px;line-height:16.72px;font-weight:700;color:#000000;transform:scaleX(1.0724);">Mar-27</div>
<div class="t" style="left:2667.90px;top:439.19px;font-size:16.72px;line-height:16.72px;font-weight:700;color:#000000;transform:scaleX(1.0724);">Apr-27</div>
<div class="t" style="left:2783.92px;top:439.19px;font-size:16.72px;line-height:16.72px;font-weight:700;color:#000000;transform:scaleX(1.0724);">May-27</div>
<div class="t" style="left:883.37px;top:549.83px;font-size:13.61px;line-height:13.61px;color:#1a1a1a;transform:scaleX(1.0699);">2,061</div>
<div class="t" style="left:1003.22px;top:549.83px;font-size:13.61px;line-height:13.61px;color:#1a1a1a;transform:scaleX(1.0699);">5,640</div>
<div class="t" style="left:1115.12px;top:549.83px;font-size:13.61px;line-height:13.61px;color:#1a1a1a;transform:scaleX(1.0699);">10,460</div>
<div class="t" style="left:1235.27px;top:549.83px;font-size:13.61px;line-height:13.61px;color:#1a1a1a;transform:scaleX(1.0699);">13,781</div>
<div class="t" style="left:1355.27px;top:549.83px;font-size:13.61px;line-height:13.61px;color:#1a1a1a;transform:scaleX(1.0699);">18,289</div>
<div class="t" style="left:1475.21px;top:549.83px;font-size:13.61px;line-height:13.61px;color:#1a1a1a;transform:scaleX(1.0699);">21,638</div>
<div class="t" style="left:1595.30px;top:549.83px;font-size:13.61px;line-height:13.61px;color:#1a1a1a;transform:scaleX(1.0699);">25,647</div>
<div class="t" style="left:1715.21px;top:549.83px;font-size:13.61px;line-height:13.61px;color:#1a1a1a;transform:scaleX(1.0699);">27,788</div>
<div class="t" style="left:1835.21px;top:549.83px;font-size:13.61px;line-height:13.61px;color:#1a1a1a;transform:scaleX(1.0699);">29,806</div>
<div class="t" style="left:1955.21px;top:549.83px;font-size:13.61px;line-height:13.61px;color:#1a1a1a;transform:scaleX(1.0699);">32,546</div>
<div class="t" style="left:2074.98px;top:549.83px;font-size:13.61px;line-height:13.61px;color:#1a1a1a;transform:scaleX(1.0699);">32,464</div>
<div class="t" style="left:2195.30px;top:549.83px;font-size:13.61px;line-height:13.61px;color:#1a1a1a;transform:scaleX(1.0699);">34,512</div>
<div class="t" style="left:2315.30px;top:549.83px;font-size:13.61px;line-height:13.61px;color:#1a1a1a;transform:scaleX(1.0699);">38,812</div>
<div class="t" style="left:2435.21px;top:549.83px;font-size:13.61px;line-height:13.61px;color:#1a1a1a;transform:scaleX(1.0699);">43,818</div>
<div class="t" style="left:2554.98px;top:549.83px;font-size:13.61px;line-height:13.61px;color:#1a1a1a;transform:scaleX(1.0699);">55,714</div>
<div class="t" style="left:2675.21px;top:549.83px;font-size:13.61px;line-height:13.61px;color:#1a1a1a;transform:scaleX(1.0699);">58,868</div>
<div class="t" style="left:2795.30px;top:549.83px;font-size:13.61px;line-height:13.61px;color:#1a1a1a;transform:scaleX(1.0699);">67,652</div>
<div class="t" style="left:871.15px;top:569.53px;font-size:13.61px;line-height:13.61px;color:#1a1a1a;transform:scaleX(1.0699);">(12,256)</div>
<div class="t" style="left:991.15px;top:569.53px;font-size:13.61px;line-height:13.61px;color:#1a1a1a;transform:scaleX(1.0699);">(22,649)</div>
<div class="t" style="left:1111.15px;top:569.53px;font-size:13.61px;line-height:13.61px;color:#1a1a1a;transform:scaleX(1.0699);">(25,702)</div>
<div class="t" style="left:1231.15px;top:569.53px;font-size:13.61px;line-height:13.61px;color:#1a1a1a;transform:scaleX(1.0699);">(24,888)</div>
<div class="t" style="left:1351.15px;top:569.53px;font-size:13.61px;line-height:13.61px;color:#1a1a1a;transform:scaleX(1.0699);">(26,337)</div>
<div class="t" style="left:1471.15px;top:569.53px;font-size:13.61px;line-height:13.61px;color:#1a1a1a;transform:scaleX(1.0699);">(26,324)</div>
<div class="t" style="left:1591.15px;top:569.53px;font-size:13.61px;line-height:13.61px;color:#1a1a1a;transform:scaleX(1.0699);">(27,521)</div>
<div class="t" style="left:1711.15px;top:569.53px;font-size:13.61px;line-height:13.61px;color:#1a1a1a;transform:scaleX(1.0699);">(27,610)</div>
<div class="t" style="left:1831.15px;top:569.53px;font-size:13.61px;line-height:13.61px;color:#1a1a1a;transform:scaleX(1.0699);">(27,696)</div>
<div class="t" style="left:1951.15px;top:569.53px;font-size:13.61px;line-height:13.61px;color:#1a1a1a;transform:scaleX(1.0699);">(28,617)</div>
<div class="t" style="left:2071.15px;top:569.53px;font-size:13.61px;line-height:13.61px;color:#1a1a1a;transform:scaleX(1.0699);">(28,054)</div>
<div class="t" style="left:2191.15px;top:569.53px;font-size:13.61px;line-height:13.61px;color:#1a1a1a;transform:scaleX(1.0699);">(28,966)</div>
<div class="t" style="left:2311.15px;top:569.53px;font-size:13.61px;line-height:13.61px;color:#1a1a1a;transform:scaleX(1.0699);">(36,218)</div>
<div class="t" style="left:2431.15px;top:569.53px;font-size:13.61px;line-height:13.61px;color:#1a1a1a;transform:scaleX(1.0699);">(41,662)</div>
<div class="t" style="left:2551.15px;top:569.53px;font-size:13.61px;line-height:13.61px;color:#1a1a1a;transform:scaleX(1.0699);">(46,515)</div>
<div class="t" style="left:2671.15px;top:569.53px;font-size:13.61px;line-height:13.61px;color:#1a1a1a;transform:scaleX(1.0699);">(45,230)</div>
<div class="t" style="left:2791.15px;top:569.53px;font-size:13.61px;line-height:13.61px;color:#1a1a1a;transform:scaleX(1.0699);">(47,535)</div>
<div class="t" style="left:879.24px;top:589.63px;font-size:13.61px;line-height:13.61px;color:#1a1a1a;transform:scaleX(1.0699);">(1,000)</div>
<div class="t" style="left:999.24px;top:589.63px;font-size:13.61px;line-height:13.61px;color:#1a1a1a;transform:scaleX(1.0699);">(1,000)</div>
<div class="t" style="left:1119.24px;top:589.63px;font-size:13.61px;line-height:13.61px;color:#1a1a1a;transform:scaleX(1.0699);">(1,667)</div>
<div class="t" style="left:1239.24px;top:589.63px;font-size:13.61px;line-height:13.61px;color:#1a1a1a;transform:scaleX(1.0699);">(1,656)</div>
<div class="t" style="left:1359.24px;top:589.63px;font-size:13.61px;line-height:13.61px;color:#1a1a1a;transform:scaleX(1.0699);">(1,644)</div>
<div class="t" style="left:1479.24px;top:589.63px;font-size:13.61px;line-height:13.61px;color:#1a1a1a;transform:scaleX(1.0699);">(1,633)</div>
<div class="t" style="left:1599.24px;top:589.63px;font-size:13.61px;line-height:13.61px;color:#1a1a1a;transform:scaleX(1.0699);">(1,622)</div>
<div class="t" style="left:1720.32px;top:589.63px;font-size:13.61px;line-height:13.61px;color:#1a1a1a;transform:scaleX(1.0699);">(1,611)</div>
<div class="t" style="left:1839.24px;top:589.63px;font-size:13.61px;line-height:13.61px;color:#1a1a1a;transform:scaleX(1.0699);">(1,600)</div>
<div class="t" style="left:1959.24px;top:589.63px;font-size:13.61px;line-height:13.61px;color:#1a1a1a;transform:scaleX(1.0699);">(1,589)</div>
<div class="t" style="left:2079.24px;top:589.63px;font-size:13.61px;line-height:13.61px;color:#1a1a1a;transform:scaleX(1.0699);">(1,578)</div>
<div class="t" style="left:2199.24px;top:589.63px;font-size:13.61px;line-height:13.61px;color:#1a1a1a;transform:scaleX(1.0699);">(1,567)</div>
<div class="t" style="left:2319.24px;top:589.63px;font-size:13.61px;line-height:13.61px;color:#1a1a1a;transform:scaleX(1.0699);">(1,556)</div>
<div class="t" style="left:2439.24px;top:589.63px;font-size:13.61px;line-height:13.61px;color:#1a1a1a;transform:scaleX(1.0699);">(1,534)</div>
<div class="t" style="left:2559.24px;top:589.63px;font-size:13.61px;line-height:13.61px;color:#1a1a1a;transform:scaleX(1.0699);">(1,512)</div>
<div class="t" style="left:2679.24px;top:589.63px;font-size:13.61px;line-height:13.61px;color:#1a1a1a;transform:scaleX(1.0699);">(1,491)</div>
<div class="t" style="left:2799.24px;top:589.63px;font-size:13.61px;line-height:13.61px;color:#1a1a1a;transform:scaleX(1.0699);">(1,469)</div>
<div class="t" style="left:915.61px;top:609.73px;font-size:13.61px;line-height:13.61px;color:#1a1a1a;transform:scaleX(1.0699);">-</div>
<div class="t" style="left:1035.61px;top:609.73px;font-size:13.61px;line-height:13.61px;color:#1a1a1a;transform:scaleX(1.0699);">-</div>
<div class="t" style="left:1155.61px;top:609.73px;font-size:13.61px;line-height:13.61px;color:#1a1a1a;transform:scaleX(1.0699);">-</div>
<div class="t" style="left:1275.61px;top:609.73px;font-size:13.61px;line-height:13.61px;color:#1a1a1a;transform:scaleX(1.0699);">-</div>
<div class="t" style="left:1395.61px;top:609.73px;font-size:13.61px;line-height:13.61px;color:#1a1a1a;transform:scaleX(1.0699);">-</div>
<div class="t" style="left:1515.61px;top:609.73px;font-size:13.61px;line-height:13.61px;color:#1a1a1a;transform:scaleX(1.0699);">-</div>
<div class="t" style="left:1635.61px;top:609.73px;font-size:13.61px;line-height:13.61px;color:#1a1a1a;transform:scaleX(1.0699);">-</div>
<div class="t" style="left:1755.61px;top:609.73px;font-size:13.61px;line-height:13.61px;color:#1a1a1a;transform:scaleX(1.0699);">-</div>
<div class="t" style="left:1875.61px;top:609.73px;font-size:13.61px;line-height:13.61px;color:#1a1a1a;transform:scaleX(1.0699);">-</div>
<div class="t" style="left:1995.61px;top:609.73px;font-size:13.61px;line-height:13.61px;color:#1a1a1a;transform:scaleX(1.0699);">-</div>
<div class="t" style="left:2115.61px;top:609.73px;font-size:13.61px;line-height:13.61px;color:#1a1a1a;transform:scaleX(1.0699);">-</div>
<div class="t" style="left:2235.61px;top:609.73px;font-size:13.61px;line-height:13.61px;color:#1a1a1a;transform:scaleX(1.0699);">-</div>
<div class="t" style="left:2355.61px;top:609.73px;font-size:13.61px;line-height:13.61px;color:#1a1a1a;transform:scaleX(1.0699);">-</div>
<div class="t" style="left:2439.24px;top:609.73px;font-size:13.61px;line-height:13.61px;color:#1a1a1a;transform:scaleX(1.0699);">(1,031)</div>
<div class="t" style="left:2559.24px;top:609.73px;font-size:13.61px;line-height:13.61px;color:#1a1a1a;transform:scaleX(1.0699);">(2,429)</div>
<div class="t" style="left:2679.24px;top:609.73px;font-size:13.61px;line-height:13.61px;color:#1a1a1a;transform:scaleX(1.0699);">(3,827)</div>
<div class="t" style="left:2799.24px;top:609.73px;font-size:13.61px;line-height:13.61px;color:#1a1a1a;transform:scaleX(1.0699);">(5,226)</div>
<div class="t" style="left:857.32px;top:629.10px;font-size:15.76px;line-height:15.76px;font-weight:700;color:#ffffff;transform:scaleX(1.1670);-webkit-text-stroke:0.35px #ffffff;">(11,196)</div>
<div class="t" style="left:976.29px;top:629.10px;font-size:15.76px;line-height:15.76px;font-weight:700;color:#ffffff;transform:scaleX(1.1670);-webkit-text-stroke:0.35px #ffffff;">(18,009)</div>
<div class="t" style="left:1096.29px;top:629.10px;font-size:15.76px;line-height:15.76px;font-weight:700;color:#ffffff;transform:scaleX(1.1670);-webkit-text-stroke:0.35px #ffffff;">(16,908)</div>
<div class="t" style="left:1216.29px;top:629.10px;font-size:15.76px;line-height:15.76px;font-weight:700;color:#ffffff;transform:scaleX(1.1670);-webkit-text-stroke:0.35px #ffffff;">(12,762)</div>
<div class="t" style="left:1346.52px;top:629.10px;font-size:15.76px;line-height:15.76px;font-weight:700;color:#ffffff;transform:scaleX(1.1670);-webkit-text-stroke:0.35px #ffffff;">(9,692)</div>
<div class="t" style="left:1466.52px;top:629.10px;font-size:15.76px;line-height:15.76px;font-weight:700;color:#ffffff;transform:scaleX(1.1670);-webkit-text-stroke:0.35px #ffffff;">(6,319)</div>
<div class="t" style="left:1586.52px;top:629.10px;font-size:15.76px;line-height:15.76px;font-weight:700;color:#ffffff;transform:scaleX(1.1670);-webkit-text-stroke:0.35px #ffffff;">(3,496)</div>
<div class="t" style="left:1706.52px;top:629.10px;font-size:15.76px;line-height:15.76px;font-weight:700;color:#ffffff;transform:scaleX(1.1670);-webkit-text-stroke:0.35px #ffffff;">(1,433)</div>
<div class="t" style="left:1846.56px;top:629.10px;font-size:15.76px;line-height:15.76px;font-weight:700;color:#ffffff;transform:scaleX(1.1670);-webkit-text-stroke:0.35px #ffffff;">510</div>
<div class="t" style="left:1951.22px;top:629.10px;font-size:15.76px;line-height:15.76px;font-weight:700;color:#ffffff;transform:scaleX(1.1670);-webkit-text-stroke:0.35px #ffffff;">2,340</div>
<div class="t" style="left:2071.22px;top:629.10px;font-size:15.76px;line-height:15.76px;font-weight:700;color:#ffffff;transform:scaleX(1.1670);-webkit-text-stroke:0.35px #ffffff;">2,832</div>
<div class="t" style="left:2191.15px;top:629.10px;font-size:15.76px;line-height:15.76px;font-weight:700;color:#ffffff;transform:scaleX(1.1670);-webkit-text-stroke:0.35px #ffffff;">3,979</div>
<div class="t" style="left:2311.04px;top:629.10px;font-size:15.76px;line-height:15.76px;font-weight:700;color:#ffffff;transform:scaleX(1.1670);-webkit-text-stroke:0.35px #ffffff;">1,038</div>
<div class="t" style="left:2441.86px;top:629.10px;font-size:15.76px;line-height:15.76px;font-weight:700;color:#ffffff;transform:scaleX(1.1670);-webkit-text-stroke:0.35px #ffffff;">(409)</div>
<div class="t" style="left:2551.29px;top:629.10px;font-size:15.76px;line-height:15.76px;font-weight:700;color:#ffffff;transform:scaleX(1.1670);-webkit-text-stroke:0.35px #ffffff;">5,257</div>
<div class="t" style="left:2671.22px;top:629.10px;font-size:15.76px;line-height:15.76px;font-weight:700;color:#ffffff;transform:scaleX(1.1670);-webkit-text-stroke:0.35px #ffffff;">8,320</div>
<div class="t" style="left:2781.00px;top:629.10px;font-size:15.76px;line-height:15.76px;font-weight:700;color:#ffffff;transform:scaleX(1.1670);-webkit-text-stroke:0.35px #ffffff;">13,422</div>
<div class="t" style="left:871.15px;top:693.93px;font-size:13.61px;line-height:13.61px;color:#1a1a1a;transform:scaleX(1.0699);">(14,167)</div>
<div class="t" style="left:992.22px;top:693.93px;font-size:13.61px;line-height:13.61px;color:#1a1a1a;transform:scaleX(1.0699);">(11,667)</div>
<div class="t" style="left:1119.24px;top:693.93px;font-size:13.61px;line-height:13.61px;color:#1a1a1a;transform:scaleX(1.0699);">(5,500)</div>
<div class="t" style="left:1239.24px;top:693.93px;font-size:13.61px;line-height:13.61px;color:#1a1a1a;transform:scaleX(1.0699);">(4,833)</div>
<div class="t" style="left:1359.24px;top:693.93px;font-size:13.61px;line-height:13.61px;color:#1a1a1a;transform:scaleX(1.0699);">(6,833)</div>
<div class="t" style="left:1479.24px;top:693.93px;font-size:13.61px;line-height:13.61px;color:#1a1a1a;transform:scaleX(1.0699);">(5,500)</div>
<div class="t" style="left:1599.24px;top:693.93px;font-size:13.61px;line-height:13.61px;color:#1a1a1a;transform:scaleX(1.0699);">(2,000)</div>
<div class="t" style="left:1755.61px;top:693.93px;font-size:13.61px;line-height:13.61px;color:#1a1a1a;transform:scaleX(1.0699);">-</div>
<div class="t" style="left:1875.61px;top:693.93px;font-size:13.61px;line-height:13.61px;color:#1a1a1a;transform:scaleX(1.0699);">-</div>
<div class="t" style="left:1995.61px;top:693.93px;font-size:13.61px;line-height:13.61px;color:#1a1a1a;transform:scaleX(1.0699);">-</div>
<div class="t" style="left:2115.61px;top:693.93px;font-size:13.61px;line-height:13.61px;color:#1a1a1a;transform:scaleX(1.0699);">-</div>
<div class="t" style="left:2235.61px;top:693.93px;font-size:13.61px;line-height:13.61px;color:#1a1a1a;transform:scaleX(1.0699);">-</div>
<div class="t" style="left:2355.61px;top:693.93px;font-size:13.61px;line-height:13.61px;color:#1a1a1a;transform:scaleX(1.0699);">-</div>
<div class="t" style="left:2475.61px;top:693.93px;font-size:13.61px;line-height:13.61px;color:#1a1a1a;transform:scaleX(1.0699);">-</div>
<div class="t" style="left:2595.61px;top:693.93px;font-size:13.61px;line-height:13.61px;color:#1a1a1a;transform:scaleX(1.0699);">-</div>
<div class="t" style="left:2715.61px;top:693.93px;font-size:13.61px;line-height:13.61px;color:#1a1a1a;transform:scaleX(1.0699);">-</div>
<div class="t" style="left:2835.61px;top:693.93px;font-size:13.61px;line-height:13.61px;color:#1a1a1a;transform:scaleX(1.0699);">-</div>
<div class="t" style="left:856.29px;top:716.90px;font-size:15.76px;line-height:15.76px;font-weight:700;color:#ffffff;transform:scaleX(1.1670);-webkit-text-stroke:0.35px #ffffff;">(14,167)</div>
<div class="t" style="left:977.32px;top:716.90px;font-size:15.76px;line-height:15.76px;font-weight:700;color:#ffffff;transform:scaleX(1.1670);-webkit-text-stroke:0.35px #ffffff;">(11,667)</div>
<div class="t" style="left:1106.52px;top:716.90px;font-size:15.76px;line-height:15.76px;font-weight:700;color:#ffffff;transform:scaleX(1.1670);-webkit-text-stroke:0.35px #ffffff;">(5,500)</div>
<div class="t" style="left:1226.52px;top:716.90px;font-size:15.76px;line-height:15.76px;font-weight:700;color:#ffffff;transform:scaleX(1.1670);-webkit-text-stroke:0.35px #ffffff;">(4,833)</div>
<div class="t" style="left:1346.52px;top:716.90px;font-size:15.76px;line-height:15.76px;font-weight:700;color:#ffffff;transform:scaleX(1.1670);-webkit-text-stroke:0.35px #ffffff;">(6,833)</div>
<div class="t" style="left:1466.52px;top:716.90px;font-size:15.76px;line-height:15.76px;font-weight:700;color:#ffffff;transform:scaleX(1.1670);-webkit-text-stroke:0.35px #ffffff;">(5,500)</div>
<div class="t" style="left:1586.52px;top:716.90px;font-size:15.76px;line-height:15.76px;font-weight:700;color:#ffffff;transform:scaleX(1.1670);-webkit-text-stroke:0.35px #ffffff;">(2,000)</div>
<div class="t" style="left:1751.69px;top:716.90px;font-size:15.76px;line-height:15.76px;font-weight:700;color:#cfeaf8;transform:scaleX(1.1670);">-</div>
<div class="t" style="left:1871.69px;top:716.90px;font-size:15.76px;line-height:15.76px;font-weight:700;color:#cfeaf8;transform:scaleX(1.1670);">-</div>
<div class="t" style="left:1991.69px;top:716.90px;font-size:15.76px;line-height:15.76px;font-weight:700;color:#cfeaf8;transform:scaleX(1.1670);">-</div>
<div class="t" style="left:2111.69px;top:716.90px;font-size:15.76px;line-height:15.76px;font-weight:700;color:#cfeaf8;transform:scaleX(1.1670);">-</div>
<div class="t" style="left:2231.69px;top:716.90px;font-size:15.76px;line-height:15.76px;font-weight:700;color:#cfeaf8;transform:scaleX(1.1670);">-</div>
<div class="t" style="left:2351.69px;top:716.90px;font-size:15.76px;line-height:15.76px;font-weight:700;color:#cfeaf8;transform:scaleX(1.1670);">-</div>
<div class="t" style="left:2471.69px;top:716.90px;font-size:15.76px;line-height:15.76px;font-weight:700;color:#cfeaf8;transform:scaleX(1.1670);">-</div>
<div class="t" style="left:2591.69px;top:716.90px;font-size:15.76px;line-height:15.76px;font-weight:700;color:#cfeaf8;transform:scaleX(1.1670);">-</div>
<div class="t" style="left:2711.69px;top:716.90px;font-size:15.76px;line-height:15.76px;font-weight:700;color:#cfeaf8;transform:scaleX(1.1670);">-</div>
<div class="t" style="left:2831.69px;top:716.90px;font-size:15.76px;line-height:15.76px;font-weight:700;color:#cfeaf8;transform:scaleX(1.1670);">-</div>
<div class="t" style="left:867.03px;top:781.23px;font-size:13.61px;line-height:13.61px;color:#1a1a1a;transform:scaleX(1.0699);">200,000</div>
<div class="t" style="left:1035.61px;top:781.23px;font-size:13.61px;line-height:13.61px;color:#1a1a1a;transform:scaleX(1.0699);">-</div>
<div class="t" style="left:1107.03px;top:781.23px;font-size:13.61px;line-height:13.61px;color:#1a1a1a;transform:scaleX(1.0699);">100,000</div>
<div class="t" style="left:1275.61px;top:781.23px;font-size:13.61px;line-height:13.61px;color:#1a1a1a;transform:scaleX(1.0699);">-</div>
<div class="t" style="left:1395.61px;top:781.23px;font-size:13.61px;line-height:13.61px;color:#1a1a1a;transform:scaleX(1.0699);">-</div>
<div class="t" style="left:1515.61px;top:781.23px;font-size:13.61px;line-height:13.61px;color:#1a1a1a;transform:scaleX(1.0699);">-</div>
<div class="t" style="left:1635.61px;top:781.23px;font-size:13.61px;line-height:13.61px;color:#1a1a1a;transform:scaleX(1.0699);">-</div>
<div class="t" style="left:1755.61px;top:781.23px;font-size:13.61px;line-height:13.61px;color:#1a1a1a;transform:scaleX(1.0699);">-</div>
<div class="t" style="left:1875.61px;top:781.23px;font-size:13.61px;line-height:13.61px;color:#1a1a1a;transform:scaleX(1.0699);">-</div>
<div class="t" style="left:1995.61px;top:781.23px;font-size:13.61px;line-height:13.61px;color:#1a1a1a;transform:scaleX(1.0699);">-</div>
<div class="t" style="left:2115.61px;top:781.23px;font-size:13.61px;line-height:13.61px;color:#1a1a1a;transform:scaleX(1.0699);">-</div>
<div class="t" style="left:2235.61px;top:781.23px;font-size:13.61px;line-height:13.61px;color:#1a1a1a;transform:scaleX(1.0699);">-</div>
<div class="t" style="left:2355.61px;top:781.23px;font-size:13.61px;line-height:13.61px;color:#1a1a1a;transform:scaleX(1.0699);">-</div>
<div class="t" style="left:2475.61px;top:781.23px;font-size:13.61px;line-height:13.61px;color:#1a1a1a;transform:scaleX(1.0699);">-</div>
<div class="t" style="left:2595.61px;top:781.23px;font-size:13.61px;line-height:13.61px;color:#1a1a1a;transform:scaleX(1.0699);">-</div>
<div class="t" style="left:2715.61px;top:781.23px;font-size:13.61px;line-height:13.61px;color:#1a1a1a;transform:scaleX(1.0699);">-</div>
<div class="t" style="left:2835.61px;top:781.23px;font-size:13.61px;line-height:13.61px;color:#1a1a1a;transform:scaleX(1.0699);">-</div>
<div class="t" style="left:915.61px;top:801.13px;font-size:13.61px;line-height:13.61px;color:#1a1a1a;transform:scaleX(1.0699);">-</div>
<div class="t" style="left:1035.61px;top:801.13px;font-size:13.61px;line-height:13.61px;color:#1a1a1a;transform:scaleX(1.0699);">-</div>
<div class="t" style="left:1119.24px;top:801.13px;font-size:13.61px;line-height:13.61px;color:#1a1a1a;transform:scaleX(1.0699);">(1,667)</div>
<div class="t" style="left:1239.24px;top:801.13px;font-size:13.61px;line-height:13.61px;color:#1a1a1a;transform:scaleX(1.0699);">(1,667)</div>
<div class="t" style="left:1359.24px;top:801.13px;font-size:13.61px;line-height:13.61px;color:#1a1a1a;transform:scaleX(1.0699);">(1,667)</div>
<div class="t" style="left:1479.24px;top:801.13px;font-size:13.61px;line-height:13.61px;color:#1a1a1a;transform:scaleX(1.0699);">(1,667)</div>
<div class="t" style="left:1599.24px;top:801.13px;font-size:13.61px;line-height:13.61px;color:#1a1a1a;transform:scaleX(1.0699);">(1,667)</div>
<div class="t" style="left:1719.24px;top:801.13px;font-size:13.61px;line-height:13.61px;color:#1a1a1a;transform:scaleX(1.0699);">(1,667)</div>
<div class="t" style="left:1839.24px;top:801.13px;font-size:13.61px;line-height:13.61px;color:#1a1a1a;transform:scaleX(1.0699);">(1,667)</div>
<div class="t" style="left:1959.24px;top:801.13px;font-size:13.61px;line-height:13.61px;color:#1a1a1a;transform:scaleX(1.0699);">(1,667)</div>
<div class="t" style="left:2079.24px;top:801.13px;font-size:13.61px;line-height:13.61px;color:#1a1a1a;transform:scaleX(1.0699);">(1,667)</div>
<div class="t" style="left:2199.24px;top:801.13px;font-size:13.61px;line-height:13.61px;color:#1a1a1a;transform:scaleX(1.0699);">(1,667)</div>
<div class="t" style="left:2319.24px;top:801.13px;font-size:13.61px;line-height:13.61px;color:#1a1a1a;transform:scaleX(1.0699);">(3,770)</div>
<div class="t" style="left:2439.24px;top:801.13px;font-size:13.61px;line-height:13.61px;color:#1a1a1a;transform:scaleX(1.0699);">(3,780)</div>
<div class="t" style="left:2559.24px;top:801.13px;font-size:13.61px;line-height:13.61px;color:#1a1a1a;transform:scaleX(1.0699);">(3,791)</div>
<div class="t" style="left:2679.24px;top:801.13px;font-size:13.61px;line-height:13.61px;color:#1a1a1a;transform:scaleX(1.0699);">(3,801)</div>
<div class="t" style="left:2799.24px;top:801.13px;font-size:13.61px;line-height:13.61px;color:#1a1a1a;transform:scaleX(1.0699);">(3,812)</div>
<div class="t" style="left:867.03px;top:821.03px;font-size:13.61px;line-height:13.61px;color:#1a1a1a;transform:scaleX(1.0699);">700,000</div>
<div class="t" style="left:1035.61px;top:821.03px;font-size:13.61px;line-height:13.61px;color:#1a1a1a;transform:scaleX(1.0699);">-</div>
<div class="t" style="left:1155.61px;top:821.03px;font-size:13.61px;line-height:13.61px;color:#1a1a1a;transform:scaleX(1.0699);">-</div>
<div class="t" style="left:1275.61px;top:821.03px;font-size:13.61px;line-height:13.61px;color:#1a1a1a;transform:scaleX(1.0699);">-</div>
<div class="t" style="left:1395.61px;top:821.03px;font-size:13.61px;line-height:13.61px;color:#1a1a1a;transform:scaleX(1.0699);">-</div>
<div class="t" style="left:1515.61px;top:821.03px;font-size:13.61px;line-height:13.61px;color:#1a1a1a;transform:scaleX(1.0699);">-</div>
<div class="t" style="left:1635.61px;top:821.03px;font-size:13.61px;line-height:13.61px;color:#1a1a1a;transform:scaleX(1.0699);">-</div>
<div class="t" style="left:1755.61px;top:821.03px;font-size:13.61px;line-height:13.61px;color:#1a1a1a;transform:scaleX(1.0699);">-</div>
<div class="t" style="left:1875.61px;top:821.03px;font-size:13.61px;line-height:13.61px;color:#1a1a1a;transform:scaleX(1.0699);">-</div>
<div class="t" style="left:1995.61px;top:821.03px;font-size:13.61px;line-height:13.61px;color:#1a1a1a;transform:scaleX(1.0699);">-</div>
<div class="t" style="left:2115.61px;top:821.03px;font-size:13.61px;line-height:13.61px;color:#1a1a1a;transform:scaleX(1.0699);">-</div>
<div class="t" style="left:2235.61px;top:821.03px;font-size:13.61px;line-height:13.61px;color:#1a1a1a;transform:scaleX(1.0699);">-</div>
<div class="t" style="left:2355.61px;top:821.03px;font-size:13.61px;line-height:13.61px;color:#1a1a1a;transform:scaleX(1.0699);">-</div>
<div class="t" style="left:2475.61px;top:821.03px;font-size:13.61px;line-height:13.61px;color:#1a1a1a;transform:scaleX(1.0699);">-</div>
<div class="t" style="left:2595.61px;top:821.03px;font-size:13.61px;line-height:13.61px;color:#1a1a1a;transform:scaleX(1.0699);">-</div>
<div class="t" style="left:2715.61px;top:821.03px;font-size:13.61px;line-height:13.61px;color:#1a1a1a;transform:scaleX(1.0699);">-</div>
<div class="t" style="left:2835.61px;top:821.03px;font-size:13.61px;line-height:13.61px;color:#1a1a1a;transform:scaleX(1.0699);">-</div>
<div class="t" style="left:915.61px;top:840.93px;font-size:13.61px;line-height:13.61px;color:#1a1a1a;transform:scaleX(1.0699);">-</div>
<div class="t" style="left:1035.61px;top:840.93px;font-size:13.61px;line-height:13.61px;color:#1a1a1a;transform:scaleX(1.0699);">-</div>
<div class="t" style="left:1155.61px;top:840.93px;font-size:13.61px;line-height:13.61px;color:#1a1a1a;transform:scaleX(1.0699);">-</div>
<div class="t" style="left:1275.61px;top:840.93px;font-size:13.61px;line-height:13.61px;color:#1a1a1a;transform:scaleX(1.0699);">-</div>
<div class="t" style="left:1395.61px;top:840.93px;font-size:13.61px;line-height:13.61px;color:#1a1a1a;transform:scaleX(1.0699);">-</div>
<div class="t" style="left:1515.61px;top:840.93px;font-size:13.61px;line-height:13.61px;color:#1a1a1a;transform:scaleX(1.0699);">-</div>
<div class="t" style="left:1635.61px;top:840.93px;font-size:13.61px;line-height:13.61px;color:#1a1a1a;transform:scaleX(1.0699);">-</div>
<div class="t" style="left:1755.61px;top:840.93px;font-size:13.61px;line-height:13.61px;color:#1a1a1a;transform:scaleX(1.0699);">-</div>
<div class="t" style="left:1875.61px;top:840.93px;font-size:13.61px;line-height:13.61px;color:#1a1a1a;transform:scaleX(1.0699);">-</div>
<div class="t" style="left:1995.61px;top:840.93px;font-size:13.61px;line-height:13.61px;color:#1a1a1a;transform:scaleX(1.0699);">-</div>
<div class="t" style="left:2115.61px;top:840.93px;font-size:13.61px;line-height:13.61px;color:#1a1a1a;transform:scaleX(1.0699);">-</div>
<div class="t" style="left:2235.61px;top:840.93px;font-size:13.61px;line-height:13.61px;color:#1a1a1a;transform:scaleX(1.0699);">-</div>
<div class="t" style="left:2355.61px;top:840.93px;font-size:13.61px;line-height:13.61px;color:#1a1a1a;transform:scaleX(1.0699);">-</div>
<div class="t" style="left:2475.61px;top:840.93px;font-size:13.61px;line-height:13.61px;color:#1a1a1a;transform:scaleX(1.0699);">-</div>
<div class="t" style="left:2595.61px;top:840.93px;font-size:13.61px;line-height:13.61px;color:#1a1a1a;transform:scaleX(1.0699);">-</div>
<div class="t" style="left:2715.61px;top:840.93px;font-size:13.61px;line-height:13.61px;color:#1a1a1a;transform:scaleX(1.0699);">-</div>
<div class="t" style="left:2835.61px;top:840.93px;font-size:13.61px;line-height:13.61px;color:#1a1a1a;transform:scaleX(1.0699);">-</div>
<div class="t" style="left:915.61px;top:861.03px;font-size:13.61px;line-height:13.61px;color:#1a1a1a;transform:scaleX(1.0699);">-</div>
<div class="t" style="left:1035.61px;top:861.03px;font-size:13.61px;line-height:13.61px;color:#1a1a1a;transform:scaleX(1.0699);">-</div>
<div class="t" style="left:1155.61px;top:861.03px;font-size:13.61px;line-height:13.61px;color:#1a1a1a;transform:scaleX(1.0699);">-</div>
<div class="t" style="left:1275.61px;top:861.03px;font-size:13.61px;line-height:13.61px;color:#1a1a1a;transform:scaleX(1.0699);">-</div>
<div class="t" style="left:1395.61px;top:861.03px;font-size:13.61px;line-height:13.61px;color:#1a1a1a;transform:scaleX(1.0699);">-</div>
<div class="t" style="left:1515.61px;top:861.03px;font-size:13.61px;line-height:13.61px;color:#1a1a1a;transform:scaleX(1.0699);">-</div>
<div class="t" style="left:1635.61px;top:861.03px;font-size:13.61px;line-height:13.61px;color:#1a1a1a;transform:scaleX(1.0699);">-</div>
<div class="t" style="left:1755.61px;top:861.03px;font-size:13.61px;line-height:13.61px;color:#1a1a1a;transform:scaleX(1.0699);">-</div>
<div class="t" style="left:1875.61px;top:861.03px;font-size:13.61px;line-height:13.61px;color:#1a1a1a;transform:scaleX(1.0699);">-</div>
<div class="t" style="left:1995.61px;top:861.03px;font-size:13.61px;line-height:13.61px;color:#1a1a1a;transform:scaleX(1.0699);">-</div>
<div class="t" style="left:2115.61px;top:861.03px;font-size:13.61px;line-height:13.61px;color:#1a1a1a;transform:scaleX(1.0699);">-</div>
<div class="t" style="left:2235.61px;top:861.03px;font-size:13.61px;line-height:13.61px;color:#1a1a1a;transform:scaleX(1.0699);">-</div>
<div class="t" style="left:2355.61px;top:861.03px;font-size:13.61px;line-height:13.61px;color:#1a1a1a;transform:scaleX(1.0699);">-</div>
<div class="t" style="left:2475.61px;top:861.03px;font-size:13.61px;line-height:13.61px;color:#1a1a1a;transform:scaleX(1.0699);">-</div>
<div class="t" style="left:2595.61px;top:861.03px;font-size:13.61px;line-height:13.61px;color:#1a1a1a;transform:scaleX(1.0699);">-</div>
<div class="t" style="left:2715.61px;top:861.03px;font-size:13.61px;line-height:13.61px;color:#1a1a1a;transform:scaleX(1.0699);">-</div>
<div class="t" style="left:2835.61px;top:861.03px;font-size:13.61px;line-height:13.61px;color:#1a1a1a;transform:scaleX(1.0699);">-</div>
<div class="t" style="left:850.77px;top:881.00px;font-size:15.76px;line-height:15.76px;font-weight:700;color:#ffffff;transform:scaleX(1.1670);-webkit-text-stroke:0.35px #ffffff;">900,000</div>
<div class="t" style="left:1031.69px;top:881.00px;font-size:15.76px;line-height:15.76px;font-weight:700;color:#cfeaf8;transform:scaleX(1.1670);">-</div>
<div class="t" style="left:1100.92px;top:881.00px;font-size:15.76px;line-height:15.76px;font-weight:700;color:#ffffff;transform:scaleX(1.1670);-webkit-text-stroke:0.35px #ffffff;">98,333</div>
<div class="t" style="left:1226.52px;top:881.00px;font-size:15.76px;line-height:15.76px;font-weight:700;color:#ffffff;transform:scaleX(1.1670);-webkit-text-stroke:0.35px #ffffff;">(1,667)</div>
<div class="t" style="left:1346.52px;top:881.00px;font-size:15.76px;line-height:15.76px;font-weight:700;color:#ffffff;transform:scaleX(1.1670);-webkit-text-stroke:0.35px #ffffff;">(1,667)</div>
<div class="t" style="left:1466.52px;top:881.00px;font-size:15.76px;line-height:15.76px;font-weight:700;color:#ffffff;transform:scaleX(1.1670);-webkit-text-stroke:0.35px #ffffff;">(1,667)</div>
<div class="t" style="left:1586.52px;top:881.00px;font-size:15.76px;line-height:15.76px;font-weight:700;color:#ffffff;transform:scaleX(1.1670);-webkit-text-stroke:0.35px #ffffff;">(1,667)</div>
<div class="t" style="left:1706.52px;top:881.00px;font-size:15.76px;line-height:15.76px;font-weight:700;color:#ffffff;transform:scaleX(1.1670);-webkit-text-stroke:0.35px #ffffff;">(1,667)</div>
<div class="t" style="left:1826.52px;top:881.00px;font-size:15.76px;line-height:15.76px;font-weight:700;color:#ffffff;transform:scaleX(1.1670);-webkit-text-stroke:0.35px #ffffff;">(1,667)</div>
<div class="t" style="left:1946.52px;top:881.00px;font-size:15.76px;line-height:15.76px;font-weight:700;color:#ffffff;transform:scaleX(1.1670);-webkit-text-stroke:0.35px #ffffff;">(1,667)</div>
<div class="t" style="left:2066.52px;top:881.00px;font-size:15.76px;line-height:15.76px;font-weight:700;color:#ffffff;transform:scaleX(1.1670);-webkit-text-stroke:0.35px #ffffff;">(1,667)</div>
<div class="t" style="left:2186.52px;top:881.00px;font-size:15.76px;line-height:15.76px;font-weight:700;color:#ffffff;transform:scaleX(1.1670);-webkit-text-stroke:0.35px #ffffff;">(1,667)</div>
<div class="t" style="left:2306.52px;top:881.00px;font-size:15.76px;line-height:15.76px;font-weight:700;color:#ffffff;transform:scaleX(1.1670);-webkit-text-stroke:0.35px #ffffff;">(3,770)</div>
<div class="t" style="left:2426.52px;top:881.00px;font-size:15.76px;line-height:15.76px;font-weight:700;color:#ffffff;transform:scaleX(1.1670);-webkit-text-stroke:0.35px #ffffff;">(3,780)</div>
<div class="t" style="left:2546.52px;top:881.00px;font-size:15.76px;line-height:15.76px;font-weight:700;color:#ffffff;transform:scaleX(1.1670);-webkit-text-stroke:0.35px #ffffff;">(3,791)</div>
<div class="t" style="left:2666.52px;top:881.00px;font-size:15.76px;line-height:15.76px;font-weight:700;color:#ffffff;transform:scaleX(1.1670);-webkit-text-stroke:0.35px #ffffff;">(3,801)</div>
<div class="t" style="left:2786.52px;top:881.00px;font-size:15.76px;line-height:15.76px;font-weight:700;color:#ffffff;transform:scaleX(1.1670);-webkit-text-stroke:0.35px #ffffff;">(3,812)</div>
<div class="t" style="left:850.59px;top:918.10px;font-size:15.76px;line-height:15.76px;font-weight:700;color:#ffffff;transform:scaleX(1.1670);-webkit-text-stroke:0.35px #ffffff;">874,638</div>
<div class="t" style="left:976.29px;top:918.10px;font-size:15.76px;line-height:15.76px;font-weight:700;color:#ffffff;transform:scaleX(1.1670);-webkit-text-stroke:0.35px #ffffff;">(29,676)</div>
<div class="t" style="left:1100.78px;top:918.10px;font-size:15.76px;line-height:15.76px;font-weight:700;color:#ffffff;transform:scaleX(1.1670);-webkit-text-stroke:0.35px #ffffff;">75,925</div>
<div class="t" style="left:1216.29px;top:918.10px;font-size:15.76px;line-height:15.76px;font-weight:700;color:#ffffff;transform:scaleX(1.1670);-webkit-text-stroke:0.35px #ffffff;">(19,262)</div>
<div class="t" style="left:1336.29px;top:918.10px;font-size:15.76px;line-height:15.76px;font-weight:700;color:#ffffff;transform:scaleX(1.1670);-webkit-text-stroke:0.35px #ffffff;">(18,192)</div>
<div class="t" style="left:1456.29px;top:918.10px;font-size:15.76px;line-height:15.76px;font-weight:700;color:#ffffff;transform:scaleX(1.1670);-webkit-text-stroke:0.35px #ffffff;">(13,486)</div>
<div class="t" style="left:1586.52px;top:918.10px;font-size:15.76px;line-height:15.76px;font-weight:700;color:#ffffff;transform:scaleX(1.1670);-webkit-text-stroke:0.35px #ffffff;">(7,163)</div>
<div class="t" style="left:1706.52px;top:918.10px;font-size:15.76px;line-height:15.76px;font-weight:700;color:#ffffff;transform:scaleX(1.1670);-webkit-text-stroke:0.35px #ffffff;">(3,100)</div>
<div class="t" style="left:1826.52px;top:918.10px;font-size:15.76px;line-height:15.76px;font-weight:700;color:#ffffff;transform:scaleX(1.1670);-webkit-text-stroke:0.35px #ffffff;">(1,157)</div>
<div class="t" style="left:1966.49px;top:918.10px;font-size:15.76px;line-height:15.76px;font-weight:700;color:#ffffff;transform:scaleX(1.1670);-webkit-text-stroke:0.35px #ffffff;">673</div>
<div class="t" style="left:2071.15px;top:918.10px;font-size:15.76px;line-height:15.76px;font-weight:700;color:#ffffff;transform:scaleX(1.1670);-webkit-text-stroke:0.35px #ffffff;">1,166</div>
<div class="t" style="left:2191.15px;top:918.10px;font-size:15.76px;line-height:15.76px;font-weight:700;color:#ffffff;transform:scaleX(1.1670);-webkit-text-stroke:0.35px #ffffff;">2,313</div>
<div class="t" style="left:2306.52px;top:918.10px;font-size:15.76px;line-height:15.76px;font-weight:700;color:#ffffff;transform:scaleX(1.1670);-webkit-text-stroke:0.35px #ffffff;">(2,732)</div>
<div class="t" style="left:2426.52px;top:918.10px;font-size:15.76px;line-height:15.76px;font-weight:700;color:#ffffff;transform:scaleX(1.1670);-webkit-text-stroke:0.35px #ffffff;">(4,189)</div>
<div class="t" style="left:2551.29px;top:918.10px;font-size:15.76px;line-height:15.76px;font-weight:700;color:#ffffff;transform:scaleX(1.1670);-webkit-text-stroke:0.35px #ffffff;">1,467</div>
<div class="t" style="left:2671.15px;top:918.10px;font-size:15.76px;line-height:15.76px;font-weight:700;color:#ffffff;transform:scaleX(1.1670);-webkit-text-stroke:0.35px #ffffff;">4,519</div>
<div class="t" style="left:2791.99px;top:918.10px;font-size:15.76px;line-height:15.76px;font-weight:700;color:#ffffff;transform:scaleX(1.1670);-webkit-text-stroke:0.35px #ffffff;">9,611</div>
<div class="t" style="left:862.55px;top:1032.18px;font-size:15.90px;line-height:15.90px;color:#1a1a1a;transform:scaleX(1.0495);">(20,130)</div>
<div class="t" style="left:982.55px;top:1032.18px;font-size:15.90px;line-height:15.90px;color:#1a1a1a;transform:scaleX(1.0495);">(16,856)</div>
<div class="t" style="left:1102.55px;top:1032.18px;font-size:15.90px;line-height:15.90px;color:#1a1a1a;transform:scaleX(1.0495);">(14,249)</div>
<div class="t" style="left:1222.55px;top:1032.18px;font-size:15.90px;line-height:15.90px;color:#1a1a1a;transform:scaleX(1.0495);">(10,963)</div>
<div class="t" style="left:1351.83px;top:1032.18px;font-size:15.90px;line-height:15.90px;color:#1a1a1a;transform:scaleX(1.0495);">(7,678)</div>
<div class="t" style="left:1471.83px;top:1032.18px;font-size:15.90px;line-height:15.90px;color:#1a1a1a;transform:scaleX(1.0495);">(4,393)</div>
<div class="t" style="left:1591.83px;top:1032.18px;font-size:15.90px;line-height:15.90px;color:#1a1a1a;transform:scaleX(1.0495);">(2,310)</div>
<div class="t" style="left:1725.75px;top:1032.18px;font-size:15.90px;line-height:15.90px;color:#1a1a1a;transform:scaleX(1.0495);">(227)</div>
<div class="t" style="left:1836.58px;top:1032.18px;font-size:15.90px;line-height:15.90px;color:#1a1a1a;transform:scaleX(1.0495);">1,857</div>
<div class="t" style="left:1956.54px;top:1032.18px;font-size:15.90px;line-height:15.90px;color:#1a1a1a;transform:scaleX(1.0495);">2,661</div>
<div class="t" style="left:2076.44px;top:1032.18px;font-size:15.90px;line-height:15.90px;color:#1a1a1a;transform:scaleX(1.0495);">3,465</div>
<div class="t" style="left:2196.37px;top:1032.18px;font-size:15.90px;line-height:15.90px;color:#1a1a1a;transform:scaleX(1.0495);">4,270</div>
<div class="t" style="left:2311.83px;top:1032.18px;font-size:15.90px;line-height:15.90px;color:#1a1a1a;transform:scaleX(1.0495);">(1,054)</div>
<div class="t" style="left:2436.48px;top:1032.18px;font-size:15.90px;line-height:15.90px;color:#1a1a1a;transform:scaleX(1.0495);">3,536</div>
<div class="t" style="left:2556.54px;top:1032.18px;font-size:15.90px;line-height:15.90px;color:#1a1a1a;transform:scaleX(1.0495);">7,759</div>
<div class="t" style="left:2668.43px;top:1032.18px;font-size:15.90px;line-height:15.90px;color:#1a1a1a;transform:scaleX(1.0495);">11,983</div>
<div class="t" style="left:2787.20px;top:1032.18px;font-size:15.90px;line-height:15.90px;color:#1a1a1a;transform:scaleX(1.0495);">16,206</div>
<div class="t" style="left:876.44px;top:1051.48px;font-size:15.90px;line-height:15.90px;color:#1a1a1a;transform:scaleX(1.0495);">8,935</div>
<div class="t" style="left:991.83px;top:1051.48px;font-size:15.90px;line-height:15.90px;color:#1a1a1a;transform:scaleX(1.0495);">(1,153)</div>
<div class="t" style="left:1111.83px;top:1051.48px;font-size:15.90px;line-height:15.90px;color:#1a1a1a;transform:scaleX(1.0495);">(2,659)</div>
<div class="t" style="left:1231.83px;top:1051.48px;font-size:15.90px;line-height:15.90px;color:#1a1a1a;transform:scaleX(1.0495);">(1,799)</div>
<div class="t" style="left:1351.83px;top:1051.48px;font-size:15.90px;line-height:15.90px;color:#1a1a1a;transform:scaleX(1.0495);">(2,013)</div>
<div class="t" style="left:1471.83px;top:1051.48px;font-size:15.90px;line-height:15.90px;color:#1a1a1a;transform:scaleX(1.0495);">(1,926)</div>
<div class="t" style="left:1591.83px;top:1051.48px;font-size:15.90px;line-height:15.90px;color:#1a1a1a;transform:scaleX(1.0495);">(1,187)</div>
<div class="t" style="left:1711.83px;top:1051.48px;font-size:15.90px;line-height:15.90px;color:#1a1a1a;transform:scaleX(1.0495);">(1,206)</div>
<div class="t" style="left:1831.83px;top:1051.48px;font-size:15.90px;line-height:15.90px;color:#1a1a1a;transform:scaleX(1.0495);">(1,347)</div>
<div class="t" style="left:1965.75px;top:1051.48px;font-size:15.90px;line-height:15.90px;color:#1a1a1a;transform:scaleX(1.0495);">(321)</div>
<div class="t" style="left:2085.75px;top:1051.48px;font-size:15.90px;line-height:15.90px;color:#1a1a1a;transform:scaleX(1.0495);">(633)</div>
<div class="t" style="left:2205.75px;top:1051.48px;font-size:15.90px;line-height:15.90px;color:#1a1a1a;transform:scaleX(1.0495);">(291)</div>
<div class="t" style="left:2316.58px;top:1051.48px;font-size:15.90px;line-height:15.90px;color:#1a1a1a;transform:scaleX(1.0495);">2,092</div>
<div class="t" style="left:2431.83px;top:1051.48px;font-size:15.90px;line-height:15.90px;color:#1a1a1a;transform:scaleX(1.0495);">(3,945)</div>
<div class="t" style="left:2551.83px;top:1051.48px;font-size:15.90px;line-height:15.90px;color:#1a1a1a;transform:scaleX(1.0495);">(2,502)</div>
<div class="t" style="left:2671.83px;top:1051.48px;font-size:15.90px;line-height:15.90px;color:#1a1a1a;transform:scaleX(1.0495);">(3,663)</div>
<div class="t" style="left:2791.83px;top:1051.48px;font-size:15.90px;line-height:15.90px;color:#1a1a1a;transform:scaleX(1.0495);">(2,784)</div>
<div class="t" style="left:857.32px;top:1071.70px;font-size:15.76px;line-height:15.76px;font-weight:700;color:#ffffff;transform:scaleX(1.1670);-webkit-text-stroke:0.35px #ffffff;">(11,196)</div>
<div class="t" style="left:976.29px;top:1071.70px;font-size:15.76px;line-height:15.76px;font-weight:700;color:#ffffff;transform:scaleX(1.1670);-webkit-text-stroke:0.35px #ffffff;">(18,009)</div>
<div class="t" style="left:1096.29px;top:1071.70px;font-size:15.76px;line-height:15.76px;font-weight:700;color:#ffffff;transform:scaleX(1.1670);-webkit-text-stroke:0.35px #ffffff;">(16,908)</div>
<div class="t" style="left:1216.29px;top:1071.70px;font-size:15.76px;line-height:15.76px;font-weight:700;color:#ffffff;transform:scaleX(1.1670);-webkit-text-stroke:0.35px #ffffff;">(12,762)</div>
<div class="t" style="left:1346.52px;top:1071.70px;font-size:15.76px;line-height:15.76px;font-weight:700;color:#ffffff;transform:scaleX(1.1670);-webkit-text-stroke:0.35px #ffffff;">(9,692)</div>
<div class="t" style="left:1466.52px;top:1071.70px;font-size:15.76px;line-height:15.76px;font-weight:700;color:#ffffff;transform:scaleX(1.1670);-webkit-text-stroke:0.35px #ffffff;">(6,319)</div>
<div class="t" style="left:1586.52px;top:1071.70px;font-size:15.76px;line-height:15.76px;font-weight:700;color:#ffffff;transform:scaleX(1.1670);-webkit-text-stroke:0.35px #ffffff;">(3,496)</div>
<div class="t" style="left:1706.52px;top:1071.70px;font-size:15.76px;line-height:15.76px;font-weight:700;color:#ffffff;transform:scaleX(1.1670);-webkit-text-stroke:0.35px #ffffff;">(1,433)</div>
<div class="t" style="left:1846.56px;top:1071.70px;font-size:15.76px;line-height:15.76px;font-weight:700;color:#ffffff;transform:scaleX(1.1670);-webkit-text-stroke:0.35px #ffffff;">510</div>
<div class="t" style="left:1951.22px;top:1071.70px;font-size:15.76px;line-height:15.76px;font-weight:700;color:#ffffff;transform:scaleX(1.1670);-webkit-text-stroke:0.35px #ffffff;">2,340</div>
<div class="t" style="left:2071.22px;top:1071.70px;font-size:15.76px;line-height:15.76px;font-weight:700;color:#ffffff;transform:scaleX(1.1670);-webkit-text-stroke:0.35px #ffffff;">2,832</div>
<div class="t" style="left:2191.15px;top:1071.70px;font-size:15.76px;line-height:15.76px;font-weight:700;color:#ffffff;transform:scaleX(1.1670);-webkit-text-stroke:0.35px #ffffff;">3,979</div>
<div class="t" style="left:2311.04px;top:1071.70px;font-size:15.76px;line-height:15.76px;font-weight:700;color:#ffffff;transform:scaleX(1.1670);-webkit-text-stroke:0.35px #ffffff;">1,038</div>
<div class="t" style="left:2441.86px;top:1071.70px;font-size:15.76px;line-height:15.76px;font-weight:700;color:#ffffff;transform:scaleX(1.1670);-webkit-text-stroke:0.35px #ffffff;">(409)</div>
<div class="t" style="left:2551.29px;top:1071.70px;font-size:15.76px;line-height:15.76px;font-weight:700;color:#ffffff;transform:scaleX(1.1670);-webkit-text-stroke:0.35px #ffffff;">5,257</div>
<div class="t" style="left:2671.22px;top:1071.70px;font-size:15.76px;line-height:15.76px;font-weight:700;color:#ffffff;transform:scaleX(1.1670);-webkit-text-stroke:0.35px #ffffff;">8,320</div>
<div class="t" style="left:2781.00px;top:1071.70px;font-size:15.76px;line-height:15.76px;font-weight:700;color:#ffffff;transform:scaleX(1.1670);-webkit-text-stroke:0.35px #ffffff;">13,422</div>
<div class="t" style="left:862.55px;top:1136.28px;font-size:15.90px;line-height:15.90px;color:#1a1a1a;transform:scaleX(1.0495);">(14,167)</div>
<div class="t" style="left:983.78px;top:1136.28px;font-size:15.90px;line-height:15.90px;color:#1a1a1a;transform:scaleX(1.0495);">(11,667)</div>
<div class="t" style="left:1111.83px;top:1136.28px;font-size:15.90px;line-height:15.90px;color:#1a1a1a;transform:scaleX(1.0495);">(5,500)</div>
<div class="t" style="left:1231.83px;top:1136.28px;font-size:15.90px;line-height:15.90px;color:#1a1a1a;transform:scaleX(1.0495);">(4,833)</div>
<div class="t" style="left:1351.83px;top:1136.28px;font-size:15.90px;line-height:15.90px;color:#1a1a1a;transform:scaleX(1.0495);">(6,833)</div>
<div class="t" style="left:1471.83px;top:1136.28px;font-size:15.90px;line-height:15.90px;color:#1a1a1a;transform:scaleX(1.0495);">(5,500)</div>
<div class="t" style="left:1591.83px;top:1136.28px;font-size:15.90px;line-height:15.90px;color:#1a1a1a;transform:scaleX(1.0495);">(2,000)</div>
<div class="t" style="left:1752.29px;top:1136.28px;font-size:15.90px;line-height:15.90px;color:#1a1a1a;transform:scaleX(1.0495);">-</div>
<div class="t" style="left:1872.29px;top:1136.28px;font-size:15.90px;line-height:15.90px;color:#1a1a1a;transform:scaleX(1.0495);">-</div>
<div class="t" style="left:1992.29px;top:1136.28px;font-size:15.90px;line-height:15.90px;color:#1a1a1a;transform:scaleX(1.0495);">-</div>
<div class="t" style="left:2112.29px;top:1136.28px;font-size:15.90px;line-height:15.90px;color:#1a1a1a;transform:scaleX(1.0495);">-</div>
<div class="t" style="left:2232.29px;top:1136.28px;font-size:15.90px;line-height:15.90px;color:#1a1a1a;transform:scaleX(1.0495);">-</div>
<div class="t" style="left:2352.29px;top:1136.28px;font-size:15.90px;line-height:15.90px;color:#1a1a1a;transform:scaleX(1.0495);">-</div>
<div class="t" style="left:2472.29px;top:1136.28px;font-size:15.90px;line-height:15.90px;color:#1a1a1a;transform:scaleX(1.0495);">-</div>
<div class="t" style="left:2592.29px;top:1136.28px;font-size:15.90px;line-height:15.90px;color:#1a1a1a;transform:scaleX(1.0495);">-</div>
<div class="t" style="left:2712.29px;top:1136.28px;font-size:15.90px;line-height:15.90px;color:#1a1a1a;transform:scaleX(1.0495);">-</div>
<div class="t" style="left:2832.29px;top:1136.28px;font-size:15.90px;line-height:15.90px;color:#1a1a1a;transform:scaleX(1.0495);">-</div>
<div class="t" style="left:856.29px;top:1156.30px;font-size:15.76px;line-height:15.76px;font-weight:700;color:#ffffff;transform:scaleX(1.1670);-webkit-text-stroke:0.35px #ffffff;">(14,167)</div>
<div class="t" style="left:977.32px;top:1156.30px;font-size:15.76px;line-height:15.76px;font-weight:700;color:#ffffff;transform:scaleX(1.1670);-webkit-text-stroke:0.35px #ffffff;">(11,667)</div>
<div class="t" style="left:1106.52px;top:1156.30px;font-size:15.76px;line-height:15.76px;font-weight:700;color:#ffffff;transform:scaleX(1.1670);-webkit-text-stroke:0.35px #ffffff;">(5,500)</div>
<div class="t" style="left:1226.52px;top:1156.30px;font-size:15.76px;line-height:15.76px;font-weight:700;color:#ffffff;transform:scaleX(1.1670);-webkit-text-stroke:0.35px #ffffff;">(4,833)</div>
<div class="t" style="left:1346.52px;top:1156.30px;font-size:15.76px;line-height:15.76px;font-weight:700;color:#ffffff;transform:scaleX(1.1670);-webkit-text-stroke:0.35px #ffffff;">(6,833)</div>
<div class="t" style="left:1466.52px;top:1156.30px;font-size:15.76px;line-height:15.76px;font-weight:700;color:#ffffff;transform:scaleX(1.1670);-webkit-text-stroke:0.35px #ffffff;">(5,500)</div>
<div class="t" style="left:1586.52px;top:1156.30px;font-size:15.76px;line-height:15.76px;font-weight:700;color:#ffffff;transform:scaleX(1.1670);-webkit-text-stroke:0.35px #ffffff;">(2,000)</div>
<div class="t" style="left:1751.69px;top:1156.30px;font-size:15.76px;line-height:15.76px;font-weight:700;color:#cfeaf8;transform:scaleX(1.1670);">-</div>
<div class="t" style="left:1871.69px;top:1156.30px;font-size:15.76px;line-height:15.76px;font-weight:700;color:#cfeaf8;transform:scaleX(1.1670);">-</div>
<div class="t" style="left:1991.69px;top:1156.30px;font-size:15.76px;line-height:15.76px;font-weight:700;color:#cfeaf8;transform:scaleX(1.1670);">-</div>
<div class="t" style="left:2111.69px;top:1156.30px;font-size:15.76px;line-height:15.76px;font-weight:700;color:#cfeaf8;transform:scaleX(1.1670);">-</div>
<div class="t" style="left:2231.69px;top:1156.30px;font-size:15.76px;line-height:15.76px;font-weight:700;color:#cfeaf8;transform:scaleX(1.1670);">-</div>
<div class="t" style="left:2351.69px;top:1156.30px;font-size:15.76px;line-height:15.76px;font-weight:700;color:#cfeaf8;transform:scaleX(1.1670);">-</div>
<div class="t" style="left:2471.69px;top:1156.30px;font-size:15.76px;line-height:15.76px;font-weight:700;color:#cfeaf8;transform:scaleX(1.1670);">-</div>
<div class="t" style="left:2591.69px;top:1156.30px;font-size:15.76px;line-height:15.76px;font-weight:700;color:#cfeaf8;transform:scaleX(1.1670);">-</div>
<div class="t" style="left:2711.69px;top:1156.30px;font-size:15.76px;line-height:15.76px;font-weight:700;color:#cfeaf8;transform:scaleX(1.1670);">-</div>
<div class="t" style="left:2831.69px;top:1156.30px;font-size:15.76px;line-height:15.76px;font-weight:700;color:#cfeaf8;transform:scaleX(1.1670);">-</div>
<div class="t" style="left:857.82px;top:1221.18px;font-size:15.90px;line-height:15.90px;color:#1a1a1a;transform:scaleX(1.0495);">700,000</div>
<div class="t" style="left:1032.29px;top:1221.18px;font-size:15.90px;line-height:15.90px;color:#1a1a1a;transform:scaleX(1.0495);">-</div>
<div class="t" style="left:1152.29px;top:1221.18px;font-size:15.90px;line-height:15.90px;color:#1a1a1a;transform:scaleX(1.0495);">-</div>
<div class="t" style="left:1272.29px;top:1221.18px;font-size:15.90px;line-height:15.90px;color:#1a1a1a;transform:scaleX(1.0495);">-</div>
<div class="t" style="left:1392.29px;top:1221.18px;font-size:15.90px;line-height:15.90px;color:#1a1a1a;transform:scaleX(1.0495);">-</div>
<div class="t" style="left:1512.29px;top:1221.18px;font-size:15.90px;line-height:15.90px;color:#1a1a1a;transform:scaleX(1.0495);">-</div>
<div class="t" style="left:1632.29px;top:1221.18px;font-size:15.90px;line-height:15.90px;color:#1a1a1a;transform:scaleX(1.0495);">-</div>
<div class="t" style="left:1752.29px;top:1221.18px;font-size:15.90px;line-height:15.90px;color:#1a1a1a;transform:scaleX(1.0495);">-</div>
<div class="t" style="left:1872.29px;top:1221.18px;font-size:15.90px;line-height:15.90px;color:#1a1a1a;transform:scaleX(1.0495);">-</div>
<div class="t" style="left:1992.29px;top:1221.18px;font-size:15.90px;line-height:15.90px;color:#1a1a1a;transform:scaleX(1.0495);">-</div>
<div class="t" style="left:2112.29px;top:1221.18px;font-size:15.90px;line-height:15.90px;color:#1a1a1a;transform:scaleX(1.0495);">-</div>
<div class="t" style="left:2232.29px;top:1221.18px;font-size:15.90px;line-height:15.90px;color:#1a1a1a;transform:scaleX(1.0495);">-</div>
<div class="t" style="left:2352.29px;top:1221.18px;font-size:15.90px;line-height:15.90px;color:#1a1a1a;transform:scaleX(1.0495);">-</div>
<div class="t" style="left:2472.29px;top:1221.18px;font-size:15.90px;line-height:15.90px;color:#1a1a1a;transform:scaleX(1.0495);">-</div>
<div class="t" style="left:2592.29px;top:1221.18px;font-size:15.90px;line-height:15.90px;color:#1a1a1a;transform:scaleX(1.0495);">-</div>
<div class="t" style="left:2712.29px;top:1221.18px;font-size:15.90px;line-height:15.90px;color:#1a1a1a;transform:scaleX(1.0495);">-</div>
<div class="t" style="left:2832.29px;top:1221.18px;font-size:15.90px;line-height:15.90px;color:#1a1a1a;transform:scaleX(1.0495);">-</div>
<div class="t" style="left:857.82px;top:1240.48px;font-size:15.90px;line-height:15.90px;color:#1a1a1a;transform:scaleX(1.0495);">200,000</div>
<div class="t" style="left:1032.29px;top:1240.48px;font-size:15.90px;line-height:15.90px;color:#1a1a1a;transform:scaleX(1.0495);">-</div>
<div class="t" style="left:1107.20px;top:1240.48px;font-size:15.90px;line-height:15.90px;color:#1a1a1a;transform:scaleX(1.0495);">98,333</div>
<div class="t" style="left:1231.83px;top:1240.48px;font-size:15.90px;line-height:15.90px;color:#1a1a1a;transform:scaleX(1.0495);">(1,667)</div>
<div class="t" style="left:1351.83px;top:1240.48px;font-size:15.90px;line-height:15.90px;color:#1a1a1a;transform:scaleX(1.0495);">(1,667)</div>
<div class="t" style="left:1471.83px;top:1240.48px;font-size:15.90px;line-height:15.90px;color:#1a1a1a;transform:scaleX(1.0495);">(1,667)</div>
<div class="t" style="left:1591.83px;top:1240.48px;font-size:15.90px;line-height:15.90px;color:#1a1a1a;transform:scaleX(1.0495);">(1,667)</div>
<div class="t" style="left:1711.83px;top:1240.48px;font-size:15.90px;line-height:15.90px;color:#1a1a1a;transform:scaleX(1.0495);">(1,667)</div>
<div class="t" style="left:1831.83px;top:1240.48px;font-size:15.90px;line-height:15.90px;color:#1a1a1a;transform:scaleX(1.0495);">(1,667)</div>
<div class="t" style="left:1951.83px;top:1240.48px;font-size:15.90px;line-height:15.90px;color:#1a1a1a;transform:scaleX(1.0495);">(1,667)</div>
<div class="t" style="left:2071.83px;top:1240.48px;font-size:15.90px;line-height:15.90px;color:#1a1a1a;transform:scaleX(1.0495);">(1,667)</div>
<div class="t" style="left:2191.83px;top:1240.48px;font-size:15.90px;line-height:15.90px;color:#1a1a1a;transform:scaleX(1.0495);">(1,667)</div>
<div class="t" style="left:2311.83px;top:1240.48px;font-size:15.90px;line-height:15.90px;color:#1a1a1a;transform:scaleX(1.0495);">(3,770)</div>
<div class="t" style="left:2431.83px;top:1240.48px;font-size:15.90px;line-height:15.90px;color:#1a1a1a;transform:scaleX(1.0495);">(3,780)</div>
<div class="t" style="left:2551.83px;top:1240.48px;font-size:15.90px;line-height:15.90px;color:#1a1a1a;transform:scaleX(1.0495);">(3,791)</div>
<div class="t" style="left:2671.83px;top:1240.48px;font-size:15.90px;line-height:15.90px;color:#1a1a1a;transform:scaleX(1.0495);">(3,801)</div>
<div class="t" style="left:2791.83px;top:1240.48px;font-size:15.90px;line-height:15.90px;color:#1a1a1a;transform:scaleX(1.0495);">(3,812)</div>
<div class="t" style="left:912.29px;top:1259.18px;font-size:15.90px;line-height:15.90px;color:#1a1a1a;transform:scaleX(1.0495);">-</div>
<div class="t" style="left:1032.29px;top:1259.18px;font-size:15.90px;line-height:15.90px;color:#1a1a1a;transform:scaleX(1.0495);">-</div>
<div class="t" style="left:1152.29px;top:1259.18px;font-size:15.90px;line-height:15.90px;color:#1a1a1a;transform:scaleX(1.0495);">-</div>
<div class="t" style="left:1272.29px;top:1259.18px;font-size:15.90px;line-height:15.90px;color:#1a1a1a;transform:scaleX(1.0495);">-</div>
<div class="t" style="left:1392.29px;top:1259.18px;font-size:15.90px;line-height:15.90px;color:#1a1a1a;transform:scaleX(1.0495);">-</div>
<div class="t" style="left:1512.29px;top:1259.18px;font-size:15.90px;line-height:15.90px;color:#1a1a1a;transform:scaleX(1.0495);">-</div>
<div class="t" style="left:1632.29px;top:1259.18px;font-size:15.90px;line-height:15.90px;color:#1a1a1a;transform:scaleX(1.0495);">-</div>
<div class="t" style="left:1752.29px;top:1259.18px;font-size:15.90px;line-height:15.90px;color:#1a1a1a;transform:scaleX(1.0495);">-</div>
<div class="t" style="left:1872.29px;top:1259.18px;font-size:15.90px;line-height:15.90px;color:#1a1a1a;transform:scaleX(1.0495);">-</div>
<div class="t" style="left:1992.29px;top:1259.18px;font-size:15.90px;line-height:15.90px;color:#1a1a1a;transform:scaleX(1.0495);">-</div>
<div class="t" style="left:2112.29px;top:1259.18px;font-size:15.90px;line-height:15.90px;color:#1a1a1a;transform:scaleX(1.0495);">-</div>
<div class="t" style="left:2232.29px;top:1259.18px;font-size:15.90px;line-height:15.90px;color:#1a1a1a;transform:scaleX(1.0495);">-</div>
<div class="t" style="left:2352.29px;top:1259.18px;font-size:15.90px;line-height:15.90px;color:#1a1a1a;transform:scaleX(1.0495);">-</div>
<div class="t" style="left:2472.29px;top:1259.18px;font-size:15.90px;line-height:15.90px;color:#1a1a1a;transform:scaleX(1.0495);">-</div>
<div class="t" style="left:2592.29px;top:1259.18px;font-size:15.90px;line-height:15.90px;color:#1a1a1a;transform:scaleX(1.0495);">-</div>
<div class="t" style="left:2712.29px;top:1259.18px;font-size:15.90px;line-height:15.90px;color:#1a1a1a;transform:scaleX(1.0495);">-</div>
<div class="t" style="left:2832.29px;top:1259.18px;font-size:15.90px;line-height:15.90px;color:#1a1a1a;transform:scaleX(1.0495);">-</div>
<div class="t" style="left:850.77px;top:1279.80px;font-size:15.76px;line-height:15.76px;font-weight:700;color:#ffffff;transform:scaleX(1.1670);-webkit-text-stroke:0.35px #ffffff;">900,000</div>
<div class="t" style="left:1031.69px;top:1279.80px;font-size:15.76px;line-height:15.76px;font-weight:700;color:#cfeaf8;transform:scaleX(1.1670);">-</div>
<div class="t" style="left:1100.92px;top:1279.80px;font-size:15.76px;line-height:15.76px;font-weight:700;color:#ffffff;transform:scaleX(1.1670);-webkit-text-stroke:0.35px #ffffff;">98,333</div>
<div class="t" style="left:1226.52px;top:1279.80px;font-size:15.76px;line-height:15.76px;font-weight:700;color:#ffffff;transform:scaleX(1.1670);-webkit-text-stroke:0.35px #ffffff;">(1,667)</div>
<div class="t" style="left:1346.52px;top:1279.80px;font-size:15.76px;line-height:15.76px;font-weight:700;color:#ffffff;transform:scaleX(1.1670);-webkit-text-stroke:0.35px #ffffff;">(1,667)</div>
<div class="t" style="left:1466.52px;top:1279.80px;font-size:15.76px;line-height:15.76px;font-weight:700;color:#ffffff;transform:scaleX(1.1670);-webkit-text-stroke:0.35px #ffffff;">(1,667)</div>
<div class="t" style="left:1586.52px;top:1279.80px;font-size:15.76px;line-height:15.76px;font-weight:700;color:#ffffff;transform:scaleX(1.1670);-webkit-text-stroke:0.35px #ffffff;">(1,667)</div>
<div class="t" style="left:1706.52px;top:1279.80px;font-size:15.76px;line-height:15.76px;font-weight:700;color:#ffffff;transform:scaleX(1.1670);-webkit-text-stroke:0.35px #ffffff;">(1,667)</div>
<div class="t" style="left:1826.52px;top:1279.80px;font-size:15.76px;line-height:15.76px;font-weight:700;color:#ffffff;transform:scaleX(1.1670);-webkit-text-stroke:0.35px #ffffff;">(1,667)</div>
<div class="t" style="left:1946.52px;top:1279.80px;font-size:15.76px;line-height:15.76px;font-weight:700;color:#ffffff;transform:scaleX(1.1670);-webkit-text-stroke:0.35px #ffffff;">(1,667)</div>
<div class="t" style="left:2066.52px;top:1279.80px;font-size:15.76px;line-height:15.76px;font-weight:700;color:#ffffff;transform:scaleX(1.1670);-webkit-text-stroke:0.35px #ffffff;">(1,667)</div>
<div class="t" style="left:2186.52px;top:1279.80px;font-size:15.76px;line-height:15.76px;font-weight:700;color:#ffffff;transform:scaleX(1.1670);-webkit-text-stroke:0.35px #ffffff;">(1,667)</div>
<div class="t" style="left:2306.52px;top:1279.80px;font-size:15.76px;line-height:15.76px;font-weight:700;color:#ffffff;transform:scaleX(1.1670);-webkit-text-stroke:0.35px #ffffff;">(3,770)</div>
<div class="t" style="left:2426.52px;top:1279.80px;font-size:15.76px;line-height:15.76px;font-weight:700;color:#ffffff;transform:scaleX(1.1670);-webkit-text-stroke:0.35px #ffffff;">(3,780)</div>
<div class="t" style="left:2546.52px;top:1279.80px;font-size:15.76px;line-height:15.76px;font-weight:700;color:#ffffff;transform:scaleX(1.1670);-webkit-text-stroke:0.35px #ffffff;">(3,791)</div>
<div class="t" style="left:2666.52px;top:1279.80px;font-size:15.76px;line-height:15.76px;font-weight:700;color:#ffffff;transform:scaleX(1.1670);-webkit-text-stroke:0.35px #ffffff;">(3,801)</div>
<div class="t" style="left:2786.52px;top:1279.80px;font-size:15.76px;line-height:15.76px;font-weight:700;color:#ffffff;transform:scaleX(1.1670);-webkit-text-stroke:0.35px #ffffff;">(3,812)</div>
<div class="t" style="left:912.29px;top:1346.38px;font-size:15.90px;line-height:15.90px;color:#1a1a1a;transform:scaleX(1.0495);">-</div>
<div class="t" style="left:977.92px;top:1346.38px;font-size:15.90px;line-height:15.90px;color:#1a1a1a;transform:scaleX(1.0495);">874,638</div>
<div class="t" style="left:1098.02px;top:1346.38px;font-size:15.90px;line-height:15.90px;color:#1a1a1a;transform:scaleX(1.0495);">844,962</div>
<div class="t" style="left:1218.02px;top:1346.38px;font-size:15.90px;line-height:15.90px;color:#1a1a1a;transform:scaleX(1.0495);">920,887</div>
<div class="t" style="left:1337.88px;top:1346.38px;font-size:15.90px;line-height:15.90px;color:#1a1a1a;transform:scaleX(1.0495);">901,625</div>
<div class="t" style="left:1457.92px;top:1346.38px;font-size:15.90px;line-height:15.90px;color:#1a1a1a;transform:scaleX(1.0495);">883,433</div>
<div class="t" style="left:1578.02px;top:1346.38px;font-size:15.90px;line-height:15.90px;color:#1a1a1a;transform:scaleX(1.0495);">869,947</div>
<div class="t" style="left:1697.65px;top:1346.38px;font-size:15.90px;line-height:15.90px;color:#1a1a1a;transform:scaleX(1.0495);">862,784</div>
<div class="t" style="left:1817.88px;top:1346.38px;font-size:15.90px;line-height:15.90px;color:#1a1a1a;transform:scaleX(1.0495);">859,685</div>
<div class="t" style="left:1937.92px;top:1346.38px;font-size:15.90px;line-height:15.90px;color:#1a1a1a;transform:scaleX(1.0495);">858,528</div>
<div class="t" style="left:2057.98px;top:1346.38px;font-size:15.90px;line-height:15.90px;color:#1a1a1a;transform:scaleX(1.0495);">859,201</div>
<div class="t" style="left:2177.92px;top:1346.38px;font-size:15.90px;line-height:15.90px;color:#1a1a1a;transform:scaleX(1.0495);">860,366</div>
<div class="t" style="left:2297.98px;top:1346.38px;font-size:15.90px;line-height:15.90px;color:#1a1a1a;transform:scaleX(1.0495);">862,679</div>
<div class="t" style="left:2418.02px;top:1346.38px;font-size:15.90px;line-height:15.90px;color:#1a1a1a;transform:scaleX(1.0495);">859,947</div>
<div class="t" style="left:2537.92px;top:1346.38px;font-size:15.90px;line-height:15.90px;color:#1a1a1a;transform:scaleX(1.0495);">855,758</div>
<div class="t" style="left:2657.88px;top:1346.38px;font-size:15.90px;line-height:15.90px;color:#1a1a1a;transform:scaleX(1.0495);">857,225</div>
<div class="t" style="left:2777.65px;top:1346.38px;font-size:15.90px;line-height:15.90px;color:#1a1a1a;transform:scaleX(1.0495);">861,744</div>
<div class="t" style="left:857.92px;top:1369.38px;font-size:15.90px;line-height:15.90px;color:#1a1a1a;transform:scaleX(1.0495);">874,638</div>
<div class="t" style="left:982.55px;top:1369.38px;font-size:15.90px;line-height:15.90px;color:#1a1a1a;transform:scaleX(1.0495);">(29,676)</div>
<div class="t" style="left:1107.16px;top:1369.38px;font-size:15.90px;line-height:15.90px;color:#1a1a1a;transform:scaleX(1.0495);">75,925</div>
<div class="t" style="left:1222.55px;top:1369.38px;font-size:15.90px;line-height:15.90px;color:#1a1a1a;transform:scaleX(1.0495);">(19,262)</div>
<div class="t" style="left:1342.55px;top:1369.38px;font-size:15.90px;line-height:15.90px;color:#1a1a1a;transform:scaleX(1.0495);">(18,192)</div>
<div class="t" style="left:1462.55px;top:1369.38px;font-size:15.90px;line-height:15.90px;color:#1a1a1a;transform:scaleX(1.0495);">(13,486)</div>
<div class="t" style="left:1591.83px;top:1369.38px;font-size:15.90px;line-height:15.90px;color:#1a1a1a;transform:scaleX(1.0495);">(7,163)</div>
<div class="t" style="left:1711.83px;top:1369.38px;font-size:15.90px;line-height:15.90px;color:#1a1a1a;transform:scaleX(1.0495);">(3,100)</div>
<div class="t" style="left:1831.83px;top:1369.38px;font-size:15.90px;line-height:15.90px;color:#1a1a1a;transform:scaleX(1.0495);">(1,157)</div>
<div class="t" style="left:1970.39px;top:1369.38px;font-size:15.90px;line-height:15.90px;color:#1a1a1a;transform:scaleX(1.0495);">673</div>
<div class="t" style="left:2076.48px;top:1369.38px;font-size:15.90px;line-height:15.90px;color:#1a1a1a;transform:scaleX(1.0495);">1,166</div>
<div class="t" style="left:2196.48px;top:1369.38px;font-size:15.90px;line-height:15.90px;color:#1a1a1a;transform:scaleX(1.0495);">2,313</div>
<div class="t" style="left:2311.83px;top:1369.38px;font-size:15.90px;line-height:15.90px;color:#1a1a1a;transform:scaleX(1.0495);">(2,732)</div>
<div class="t" style="left:2431.83px;top:1369.38px;font-size:15.90px;line-height:15.90px;color:#1a1a1a;transform:scaleX(1.0495);">(4,189)</div>
<div class="t" style="left:2556.58px;top:1369.38px;font-size:15.90px;line-height:15.90px;color:#1a1a1a;transform:scaleX(1.0495);">1,467</div>
<div class="t" style="left:2676.54px;top:1369.38px;font-size:15.90px;line-height:15.90px;color:#1a1a1a;transform:scaleX(1.0495);">4,519</div>
<div class="t" style="left:2797.78px;top:1369.38px;font-size:15.90px;line-height:15.90px;color:#1a1a1a;transform:scaleX(1.0495);">9,611</div>
<div class="t" style="left:850.59px;top:1391.40px;font-size:15.76px;line-height:15.76px;font-weight:700;color:#ffffff;transform:scaleX(1.1670);-webkit-text-stroke:0.35px #ffffff;">874,638</div>
<div class="t" style="left:970.77px;top:1391.40px;font-size:15.76px;line-height:15.76px;font-weight:700;color:#ffffff;transform:scaleX(1.1670);-webkit-text-stroke:0.35px #ffffff;">844,962</div>
<div class="t" style="left:1090.84px;top:1391.40px;font-size:15.76px;line-height:15.76px;font-weight:700;color:#ffffff;transform:scaleX(1.1670);-webkit-text-stroke:0.35px #ffffff;">920,887</div>
<div class="t" style="left:1210.55px;top:1391.40px;font-size:15.76px;line-height:15.76px;font-weight:700;color:#ffffff;transform:scaleX(1.1670);-webkit-text-stroke:0.35px #ffffff;">901,625</div>
<div class="t" style="left:1330.70px;top:1391.40px;font-size:15.76px;line-height:15.76px;font-weight:700;color:#ffffff;transform:scaleX(1.1670);-webkit-text-stroke:0.35px #ffffff;">883,433</div>
<div class="t" style="left:1450.84px;top:1391.40px;font-size:15.76px;line-height:15.76px;font-weight:700;color:#ffffff;transform:scaleX(1.1670);-webkit-text-stroke:0.35px #ffffff;">869,947</div>
<div class="t" style="left:1570.15px;top:1391.40px;font-size:15.76px;line-height:15.76px;font-weight:700;color:#ffffff;transform:scaleX(1.1670);-webkit-text-stroke:0.35px #ffffff;">862,784</div>
<div class="t" style="left:1690.55px;top:1391.40px;font-size:15.76px;line-height:15.76px;font-weight:700;color:#ffffff;transform:scaleX(1.1670);-webkit-text-stroke:0.35px #ffffff;">859,685</div>
<div class="t" style="left:1810.59px;top:1391.40px;font-size:15.76px;line-height:15.76px;font-weight:700;color:#ffffff;transform:scaleX(1.1670);-webkit-text-stroke:0.35px #ffffff;">858,528</div>
<div class="t" style="left:1930.55px;top:1391.40px;font-size:15.76px;line-height:15.76px;font-weight:700;color:#ffffff;transform:scaleX(1.1670);-webkit-text-stroke:0.35px #ffffff;">859,201</div>
<div class="t" style="left:2050.70px;top:1391.40px;font-size:15.76px;line-height:15.76px;font-weight:700;color:#ffffff;transform:scaleX(1.1670);-webkit-text-stroke:0.35px #ffffff;">860,366</div>
<div class="t" style="left:2170.70px;top:1391.40px;font-size:15.76px;line-height:15.76px;font-weight:700;color:#ffffff;transform:scaleX(1.1670);-webkit-text-stroke:0.35px #ffffff;">862,679</div>
<div class="t" style="left:2290.84px;top:1391.40px;font-size:15.76px;line-height:15.76px;font-weight:700;color:#ffffff;transform:scaleX(1.1670);-webkit-text-stroke:0.35px #ffffff;">859,947</div>
<div class="t" style="left:2410.59px;top:1391.40px;font-size:15.76px;line-height:15.76px;font-weight:700;color:#ffffff;transform:scaleX(1.1670);-webkit-text-stroke:0.35px #ffffff;">855,758</div>
<div class="t" style="left:2530.55px;top:1391.40px;font-size:15.76px;line-height:15.76px;font-weight:700;color:#ffffff;transform:scaleX(1.1670);-webkit-text-stroke:0.35px #ffffff;">857,225</div>
<div class="t" style="left:2650.15px;top:1391.40px;font-size:15.76px;line-height:15.76px;font-weight:700;color:#ffffff;transform:scaleX(1.1670);-webkit-text-stroke:0.35px #ffffff;">861,744</div>
<div class="t" style="left:2770.55px;top:1391.40px;font-size:15.76px;line-height:15.76px;font-weight:700;color:#ffffff;transform:scaleX(1.1670);-webkit-text-stroke:0.35px #ffffff;">871,355</div>
<div class="t" style="left:871.15px;top:1488.13px;font-size:13.61px;line-height:13.61px;color:#1a1a1a;transform:scaleX(1.0699);">(14,167)</div>
<div class="t" style="left:992.22px;top:1488.13px;font-size:13.61px;line-height:13.61px;color:#1a1a1a;transform:scaleX(1.0699);">(11,667)</div>
<div class="t" style="left:1119.24px;top:1488.13px;font-size:13.61px;line-height:13.61px;color:#1a1a1a;transform:scaleX(1.0699);">(5,500)</div>
<div class="t" style="left:1239.24px;top:1488.13px;font-size:13.61px;line-height:13.61px;color:#1a1a1a;transform:scaleX(1.0699);">(4,833)</div>
<div class="t" style="left:1359.24px;top:1488.13px;font-size:13.61px;line-height:13.61px;color:#1a1a1a;transform:scaleX(1.0699);">(6,833)</div>
<div class="t" style="left:1479.24px;top:1488.13px;font-size:13.61px;line-height:13.61px;color:#1a1a1a;transform:scaleX(1.0699);">(5,500)</div>
<div class="t" style="left:1599.24px;top:1488.13px;font-size:13.61px;line-height:13.61px;color:#1a1a1a;transform:scaleX(1.0699);">(2,000)</div>
<div class="t" style="left:1755.61px;top:1488.13px;font-size:13.61px;line-height:13.61px;color:#1a1a1a;transform:scaleX(1.0699);">-</div>
<div class="t" style="left:1875.61px;top:1488.13px;font-size:13.61px;line-height:13.61px;color:#1a1a1a;transform:scaleX(1.0699);">-</div>
<div class="t" style="left:1995.61px;top:1488.13px;font-size:13.61px;line-height:13.61px;color:#1a1a1a;transform:scaleX(1.0699);">-</div>
<div class="t" style="left:2115.61px;top:1488.13px;font-size:13.61px;line-height:13.61px;color:#1a1a1a;transform:scaleX(1.0699);">-</div>
<div class="t" style="left:2235.61px;top:1488.13px;font-size:13.61px;line-height:13.61px;color:#1a1a1a;transform:scaleX(1.0699);">-</div>
<div class="t" style="left:2355.61px;top:1488.13px;font-size:13.61px;line-height:13.61px;color:#1a1a1a;transform:scaleX(1.0699);">-</div>
<div class="t" style="left:2475.61px;top:1488.13px;font-size:13.61px;line-height:13.61px;color:#1a1a1a;transform:scaleX(1.0699);">-</div>
<div class="t" style="left:2595.61px;top:1488.13px;font-size:13.61px;line-height:13.61px;color:#1a1a1a;transform:scaleX(1.0699);">-</div>
<div class="t" style="left:2715.61px;top:1488.13px;font-size:13.61px;line-height:13.61px;color:#1a1a1a;transform:scaleX(1.0699);">-</div>
<div class="t" style="left:2835.61px;top:1488.13px;font-size:13.61px;line-height:13.61px;color:#1a1a1a;transform:scaleX(1.0699);">-</div>
<div class="t" style="left:867.03px;top:1508.03px;font-size:13.61px;line-height:13.61px;color:#1a1a1a;transform:scaleX(1.0699);">900,000</div>
<div class="t" style="left:1035.61px;top:1508.03px;font-size:13.61px;line-height:13.61px;color:#1a1a1a;transform:scaleX(1.0699);">-</div>
<div class="t" style="left:1115.21px;top:1508.03px;font-size:13.61px;line-height:13.61px;color:#1a1a1a;transform:scaleX(1.0699);">98,333</div>
<div class="t" style="left:1239.24px;top:1508.03px;font-size:13.61px;line-height:13.61px;color:#1a1a1a;transform:scaleX(1.0699);">(1,667)</div>
<div class="t" style="left:1359.24px;top:1508.03px;font-size:13.61px;line-height:13.61px;color:#1a1a1a;transform:scaleX(1.0699);">(1,667)</div>
<div class="t" style="left:1479.24px;top:1508.03px;font-size:13.61px;line-height:13.61px;color:#1a1a1a;transform:scaleX(1.0699);">(1,667)</div>
<div class="t" style="left:1599.24px;top:1508.03px;font-size:13.61px;line-height:13.61px;color:#1a1a1a;transform:scaleX(1.0699);">(1,667)</div>
<div class="t" style="left:1719.24px;top:1508.03px;font-size:13.61px;line-height:13.61px;color:#1a1a1a;transform:scaleX(1.0699);">(1,667)</div>
<div class="t" style="left:1839.24px;top:1508.03px;font-size:13.61px;line-height:13.61px;color:#1a1a1a;transform:scaleX(1.0699);">(1,667)</div>
<div class="t" style="left:1959.24px;top:1508.03px;font-size:13.61px;line-height:13.61px;color:#1a1a1a;transform:scaleX(1.0699);">(1,667)</div>
<div class="t" style="left:2079.24px;top:1508.03px;font-size:13.61px;line-height:13.61px;color:#1a1a1a;transform:scaleX(1.0699);">(1,667)</div>
<div class="t" style="left:2199.24px;top:1508.03px;font-size:13.61px;line-height:13.61px;color:#1a1a1a;transform:scaleX(1.0699);">(1,667)</div>
<div class="t" style="left:2319.24px;top:1508.03px;font-size:13.61px;line-height:13.61px;color:#1a1a1a;transform:scaleX(1.0699);">(3,770)</div>
<div class="t" style="left:2439.24px;top:1508.03px;font-size:13.61px;line-height:13.61px;color:#1a1a1a;transform:scaleX(1.0699);">(3,780)</div>
<div class="t" style="left:2559.24px;top:1508.03px;font-size:13.61px;line-height:13.61px;color:#1a1a1a;transform:scaleX(1.0699);">(3,791)</div>
<div class="t" style="left:2679.24px;top:1508.03px;font-size:13.61px;line-height:13.61px;color:#1a1a1a;transform:scaleX(1.0699);">(3,801)</div>
<div class="t" style="left:2799.24px;top:1508.03px;font-size:13.61px;line-height:13.61px;color:#1a1a1a;transform:scaleX(1.0699);">(3,812)</div>
<div class="t" style="left:883.37px;top:1528.33px;font-size:13.61px;line-height:13.61px;color:#1a1a1a;transform:scaleX(1.0699);">2,061</div>
<div class="t" style="left:1003.22px;top:1528.33px;font-size:13.61px;line-height:13.61px;color:#1a1a1a;transform:scaleX(1.0699);">5,640</div>
<div class="t" style="left:1115.12px;top:1528.33px;font-size:13.61px;line-height:13.61px;color:#1a1a1a;transform:scaleX(1.0699);">10,460</div>
<div class="t" style="left:1235.27px;top:1528.33px;font-size:13.61px;line-height:13.61px;color:#1a1a1a;transform:scaleX(1.0699);">13,781</div>
<div class="t" style="left:1355.27px;top:1528.33px;font-size:13.61px;line-height:13.61px;color:#1a1a1a;transform:scaleX(1.0699);">18,289</div>
<div class="t" style="left:1475.21px;top:1528.33px;font-size:13.61px;line-height:13.61px;color:#1a1a1a;transform:scaleX(1.0699);">21,638</div>
<div class="t" style="left:1595.30px;top:1528.33px;font-size:13.61px;line-height:13.61px;color:#1a1a1a;transform:scaleX(1.0699);">25,647</div>
<div class="t" style="left:1715.21px;top:1528.33px;font-size:13.61px;line-height:13.61px;color:#1a1a1a;transform:scaleX(1.0699);">27,788</div>
<div class="t" style="left:1835.21px;top:1528.33px;font-size:13.61px;line-height:13.61px;color:#1a1a1a;transform:scaleX(1.0699);">29,806</div>
<div class="t" style="left:1955.21px;top:1528.33px;font-size:13.61px;line-height:13.61px;color:#1a1a1a;transform:scaleX(1.0699);">32,546</div>
<div class="t" style="left:2074.98px;top:1528.33px;font-size:13.61px;line-height:13.61px;color:#1a1a1a;transform:scaleX(1.0699);">32,464</div>
<div class="t" style="left:2195.30px;top:1528.33px;font-size:13.61px;line-height:13.61px;color:#1a1a1a;transform:scaleX(1.0699);">34,512</div>
<div class="t" style="left:2315.30px;top:1528.33px;font-size:13.61px;line-height:13.61px;color:#1a1a1a;transform:scaleX(1.0699);">38,812</div>
<div class="t" style="left:2435.21px;top:1528.33px;font-size:13.61px;line-height:13.61px;color:#1a1a1a;transform:scaleX(1.0699);">43,818</div>
<div class="t" style="left:2554.98px;top:1528.33px;font-size:13.61px;line-height:13.61px;color:#1a1a1a;transform:scaleX(1.0699);">55,714</div>
<div class="t" style="left:2675.21px;top:1528.33px;font-size:13.61px;line-height:13.61px;color:#1a1a1a;transform:scaleX(1.0699);">58,868</div>
<div class="t" style="left:2795.30px;top:1528.33px;font-size:13.61px;line-height:13.61px;color:#1a1a1a;transform:scaleX(1.0699);">67,652</div>
<div class="t" style="left:871.15px;top:1548.23px;font-size:13.61px;line-height:13.61px;color:#1a1a1a;transform:scaleX(1.0699);">(12,256)</div>
<div class="t" style="left:991.15px;top:1548.23px;font-size:13.61px;line-height:13.61px;color:#1a1a1a;transform:scaleX(1.0699);">(22,649)</div>
<div class="t" style="left:1111.15px;top:1548.23px;font-size:13.61px;line-height:13.61px;color:#1a1a1a;transform:scaleX(1.0699);">(25,702)</div>
<div class="t" style="left:1231.15px;top:1548.23px;font-size:13.61px;line-height:13.61px;color:#1a1a1a;transform:scaleX(1.0699);">(24,888)</div>
<div class="t" style="left:1351.15px;top:1548.23px;font-size:13.61px;line-height:13.61px;color:#1a1a1a;transform:scaleX(1.0699);">(26,337)</div>
<div class="t" style="left:1471.15px;top:1548.23px;font-size:13.61px;line-height:13.61px;color:#1a1a1a;transform:scaleX(1.0699);">(26,324)</div>
<div class="t" style="left:1591.15px;top:1548.23px;font-size:13.61px;line-height:13.61px;color:#1a1a1a;transform:scaleX(1.0699);">(27,521)</div>
<div class="t" style="left:1711.15px;top:1548.23px;font-size:13.61px;line-height:13.61px;color:#1a1a1a;transform:scaleX(1.0699);">(27,610)</div>
<div class="t" style="left:1831.15px;top:1548.23px;font-size:13.61px;line-height:13.61px;color:#1a1a1a;transform:scaleX(1.0699);">(27,696)</div>
<div class="t" style="left:1951.15px;top:1548.23px;font-size:13.61px;line-height:13.61px;color:#1a1a1a;transform:scaleX(1.0699);">(28,617)</div>
<div class="t" style="left:2071.15px;top:1548.23px;font-size:13.61px;line-height:13.61px;color:#1a1a1a;transform:scaleX(1.0699);">(28,054)</div>
<div class="t" style="left:2191.15px;top:1548.23px;font-size:13.61px;line-height:13.61px;color:#1a1a1a;transform:scaleX(1.0699);">(28,966)</div>
<div class="t" style="left:2311.15px;top:1548.23px;font-size:13.61px;line-height:13.61px;color:#1a1a1a;transform:scaleX(1.0699);">(36,218)</div>
<div class="t" style="left:2431.15px;top:1548.23px;font-size:13.61px;line-height:13.61px;color:#1a1a1a;transform:scaleX(1.0699);">(41,662)</div>
<div class="t" style="left:2551.15px;top:1548.23px;font-size:13.61px;line-height:13.61px;color:#1a1a1a;transform:scaleX(1.0699);">(46,515)</div>
<div class="t" style="left:2671.15px;top:1548.23px;font-size:13.61px;line-height:13.61px;color:#1a1a1a;transform:scaleX(1.0699);">(45,230)</div>
<div class="t" style="left:2791.15px;top:1548.23px;font-size:13.61px;line-height:13.61px;color:#1a1a1a;transform:scaleX(1.0699);">(47,535)</div>
<div class="t" style="left:867.12px;top:1567.93px;font-size:13.61px;line-height:13.61px;color:#1a1a1a;transform:scaleX(1.0699);">875,638</div>
<div class="t" style="left:991.15px;top:1567.93px;font-size:13.61px;line-height:13.61px;color:#1a1a1a;transform:scaleX(1.0699);">(28,676)</div>
<div class="t" style="left:1115.30px;top:1567.93px;font-size:13.61px;line-height:13.61px;color:#1a1a1a;transform:scaleX(1.0699);">77,592</div>
<div class="t" style="left:1231.15px;top:1567.93px;font-size:13.61px;line-height:13.61px;color:#1a1a1a;transform:scaleX(1.0699);">(17,607)</div>
<div class="t" style="left:1351.15px;top:1567.93px;font-size:13.61px;line-height:13.61px;color:#1a1a1a;transform:scaleX(1.0699);">(16,547)</div>
<div class="t" style="left:1472.22px;top:1567.93px;font-size:13.61px;line-height:13.61px;color:#1a1a1a;transform:scaleX(1.0699);">(11,853)</div>
<div class="t" style="left:1599.24px;top:1567.93px;font-size:13.61px;line-height:13.61px;color:#1a1a1a;transform:scaleX(1.0699);">(5,541)</div>
<div class="t" style="left:1719.24px;top:1567.93px;font-size:13.61px;line-height:13.61px;color:#1a1a1a;transform:scaleX(1.0699);">(1,489)</div>
<div class="t" style="left:1855.45px;top:1567.93px;font-size:13.61px;line-height:13.61px;color:#1a1a1a;transform:scaleX(1.0699);">443</div>
<div class="t" style="left:1963.40px;top:1567.93px;font-size:13.61px;line-height:13.61px;color:#1a1a1a;transform:scaleX(1.0699);">2,262</div>
<div class="t" style="left:2083.31px;top:1567.93px;font-size:13.61px;line-height:13.61px;color:#1a1a1a;transform:scaleX(1.0699);">2,743</div>
<div class="t" style="left:2203.37px;top:1567.93px;font-size:13.61px;line-height:13.61px;color:#1a1a1a;transform:scaleX(1.0699);">3,879</div>
<div class="t" style="left:2319.24px;top:1567.93px;font-size:13.61px;line-height:13.61px;color:#1a1a1a;transform:scaleX(1.0699);">(1,176)</div>
<div class="t" style="left:2439.24px;top:1567.93px;font-size:13.61px;line-height:13.61px;color:#1a1a1a;transform:scaleX(1.0699);">(1,624)</div>
<div class="t" style="left:2563.31px;top:1567.93px;font-size:13.61px;line-height:13.61px;color:#1a1a1a;transform:scaleX(1.0699);">5,408</div>
<div class="t" style="left:2683.40px;top:1567.93px;font-size:13.61px;line-height:13.61px;color:#1a1a1a;transform:scaleX(1.0699);">9,837</div>
<div class="t" style="left:2795.18px;top:1567.93px;font-size:13.61px;line-height:13.61px;color:#1a1a1a;transform:scaleX(1.0699);">16,305</div>
<div class="t" style="left:879.24px;top:1588.23px;font-size:13.61px;line-height:13.61px;color:#1a1a1a;transform:scaleX(1.0699);">(1,000)</div>
<div class="t" style="left:999.24px;top:1588.23px;font-size:13.61px;line-height:13.61px;color:#1a1a1a;transform:scaleX(1.0699);">(1,000)</div>
<div class="t" style="left:1119.24px;top:1588.23px;font-size:13.61px;line-height:13.61px;color:#1a1a1a;transform:scaleX(1.0699);">(1,667)</div>
<div class="t" style="left:1239.24px;top:1588.23px;font-size:13.61px;line-height:13.61px;color:#1a1a1a;transform:scaleX(1.0699);">(1,656)</div>
<div class="t" style="left:1359.24px;top:1588.23px;font-size:13.61px;line-height:13.61px;color:#1a1a1a;transform:scaleX(1.0699);">(1,644)</div>
<div class="t" style="left:1479.24px;top:1588.23px;font-size:13.61px;line-height:13.61px;color:#1a1a1a;transform:scaleX(1.0699);">(1,633)</div>
<div class="t" style="left:1599.24px;top:1588.23px;font-size:13.61px;line-height:13.61px;color:#1a1a1a;transform:scaleX(1.0699);">(1,622)</div>
<div class="t" style="left:1720.32px;top:1588.23px;font-size:13.61px;line-height:13.61px;color:#1a1a1a;transform:scaleX(1.0699);">(1,611)</div>
<div class="t" style="left:1839.24px;top:1588.23px;font-size:13.61px;line-height:13.61px;color:#1a1a1a;transform:scaleX(1.0699);">(1,600)</div>
<div class="t" style="left:1959.24px;top:1588.23px;font-size:13.61px;line-height:13.61px;color:#1a1a1a;transform:scaleX(1.0699);">(1,589)</div>
<div class="t" style="left:2079.24px;top:1588.23px;font-size:13.61px;line-height:13.61px;color:#1a1a1a;transform:scaleX(1.0699);">(1,578)</div>
<div class="t" style="left:2199.24px;top:1588.23px;font-size:13.61px;line-height:13.61px;color:#1a1a1a;transform:scaleX(1.0699);">(1,567)</div>
<div class="t" style="left:2319.24px;top:1588.23px;font-size:13.61px;line-height:13.61px;color:#1a1a1a;transform:scaleX(1.0699);">(1,556)</div>
<div class="t" style="left:2439.24px;top:1588.23px;font-size:13.61px;line-height:13.61px;color:#1a1a1a;transform:scaleX(1.0699);">(1,534)</div>
<div class="t" style="left:2559.24px;top:1588.23px;font-size:13.61px;line-height:13.61px;color:#1a1a1a;transform:scaleX(1.0699);">(1,512)</div>
<div class="t" style="left:2679.24px;top:1588.23px;font-size:13.61px;line-height:13.61px;color:#1a1a1a;transform:scaleX(1.0699);">(1,491)</div>
<div class="t" style="left:2799.24px;top:1588.23px;font-size:13.61px;line-height:13.61px;color:#1a1a1a;transform:scaleX(1.0699);">(1,469)</div>
<div class="t" style="left:915.61px;top:1608.53px;font-size:13.61px;line-height:13.61px;color:#1a1a1a;transform:scaleX(1.0699);">-</div>
<div class="t" style="left:1035.61px;top:1608.53px;font-size:13.61px;line-height:13.61px;color:#1a1a1a;transform:scaleX(1.0699);">-</div>
<div class="t" style="left:1155.61px;top:1608.53px;font-size:13.61px;line-height:13.61px;color:#1a1a1a;transform:scaleX(1.0699);">-</div>
<div class="t" style="left:1275.61px;top:1608.53px;font-size:13.61px;line-height:13.61px;color:#1a1a1a;transform:scaleX(1.0699);">-</div>
<div class="t" style="left:1395.61px;top:1608.53px;font-size:13.61px;line-height:13.61px;color:#1a1a1a;transform:scaleX(1.0699);">-</div>
<div class="t" style="left:1515.61px;top:1608.53px;font-size:13.61px;line-height:13.61px;color:#1a1a1a;transform:scaleX(1.0699);">-</div>
<div class="t" style="left:1635.61px;top:1608.53px;font-size:13.61px;line-height:13.61px;color:#1a1a1a;transform:scaleX(1.0699);">-</div>
<div class="t" style="left:1755.61px;top:1608.53px;font-size:13.61px;line-height:13.61px;color:#1a1a1a;transform:scaleX(1.0699);">-</div>
<div class="t" style="left:1875.61px;top:1608.53px;font-size:13.61px;line-height:13.61px;color:#1a1a1a;transform:scaleX(1.0699);">-</div>
<div class="t" style="left:1995.61px;top:1608.53px;font-size:13.61px;line-height:13.61px;color:#1a1a1a;transform:scaleX(1.0699);">-</div>
<div class="t" style="left:2115.61px;top:1608.53px;font-size:13.61px;line-height:13.61px;color:#1a1a1a;transform:scaleX(1.0699);">-</div>
<div class="t" style="left:2235.61px;top:1608.53px;font-size:13.61px;line-height:13.61px;color:#1a1a1a;transform:scaleX(1.0699);">-</div>
<div class="t" style="left:2355.61px;top:1608.53px;font-size:13.61px;line-height:13.61px;color:#1a1a1a;transform:scaleX(1.0699);">-</div>
<div class="t" style="left:2439.24px;top:1608.53px;font-size:13.61px;line-height:13.61px;color:#1a1a1a;transform:scaleX(1.0699);">(1,031)</div>
<div class="t" style="left:2559.24px;top:1608.53px;font-size:13.61px;line-height:13.61px;color:#1a1a1a;transform:scaleX(1.0699);">(2,429)</div>
<div class="t" style="left:2679.24px;top:1608.53px;font-size:13.61px;line-height:13.61px;color:#1a1a1a;transform:scaleX(1.0699);">(3,827)</div>
<div class="t" style="left:2799.24px;top:1608.53px;font-size:13.61px;line-height:13.61px;color:#1a1a1a;transform:scaleX(1.0699);">(5,226)</div>
<div class="t" style="left:850.59px;top:1627.50px;font-size:15.76px;line-height:15.76px;font-weight:700;color:#ffffff;transform:scaleX(1.1670);-webkit-text-stroke:0.35px #ffffff;">874,638</div>
<div class="t" style="left:976.29px;top:1627.50px;font-size:15.76px;line-height:15.76px;font-weight:700;color:#ffffff;transform:scaleX(1.1670);-webkit-text-stroke:0.35px #ffffff;">(29,676)</div>
<div class="t" style="left:1100.78px;top:1627.50px;font-size:15.76px;line-height:15.76px;font-weight:700;color:#ffffff;transform:scaleX(1.1670);-webkit-text-stroke:0.35px #ffffff;">75,925</div>
<div class="t" style="left:1216.29px;top:1627.50px;font-size:15.76px;line-height:15.76px;font-weight:700;color:#ffffff;transform:scaleX(1.1670);-webkit-text-stroke:0.35px #ffffff;">(19,262)</div>
<div class="t" style="left:1336.29px;top:1627.50px;font-size:15.76px;line-height:15.76px;font-weight:700;color:#ffffff;transform:scaleX(1.1670);-webkit-text-stroke:0.35px #ffffff;">(18,192)</div>
<div class="t" style="left:1456.29px;top:1627.50px;font-size:15.76px;line-height:15.76px;font-weight:700;color:#ffffff;transform:scaleX(1.1670);-webkit-text-stroke:0.35px #ffffff;">(13,486)</div>
<div class="t" style="left:1586.52px;top:1627.50px;font-size:15.76px;line-height:15.76px;font-weight:700;color:#ffffff;transform:scaleX(1.1670);-webkit-text-stroke:0.35px #ffffff;">(7,163)</div>
<div class="t" style="left:1706.52px;top:1627.50px;font-size:15.76px;line-height:15.76px;font-weight:700;color:#ffffff;transform:scaleX(1.1670);-webkit-text-stroke:0.35px #ffffff;">(3,100)</div>
<div class="t" style="left:1826.52px;top:1627.50px;font-size:15.76px;line-height:15.76px;font-weight:700;color:#ffffff;transform:scaleX(1.1670);-webkit-text-stroke:0.35px #ffffff;">(1,157)</div>
<div class="t" style="left:1966.49px;top:1627.50px;font-size:15.76px;line-height:15.76px;font-weight:700;color:#ffffff;transform:scaleX(1.1670);-webkit-text-stroke:0.35px #ffffff;">673</div>
<div class="t" style="left:2071.15px;top:1627.50px;font-size:15.76px;line-height:15.76px;font-weight:700;color:#ffffff;transform:scaleX(1.1670);-webkit-text-stroke:0.35px #ffffff;">1,166</div>
<div class="t" style="left:2191.15px;top:1627.50px;font-size:15.76px;line-height:15.76px;font-weight:700;color:#ffffff;transform:scaleX(1.1670);-webkit-text-stroke:0.35px #ffffff;">2,313</div>
<div class="t" style="left:2306.52px;top:1627.50px;font-size:15.76px;line-height:15.76px;font-weight:700;color:#ffffff;transform:scaleX(1.1670);-webkit-text-stroke:0.35px #ffffff;">(2,732)</div>
<div class="t" style="left:2426.52px;top:1627.50px;font-size:15.76px;line-height:15.76px;font-weight:700;color:#ffffff;transform:scaleX(1.1670);-webkit-text-stroke:0.35px #ffffff;">(4,189)</div>
<div class="t" style="left:2551.29px;top:1627.50px;font-size:15.76px;line-height:15.76px;font-weight:700;color:#ffffff;transform:scaleX(1.1670);-webkit-text-stroke:0.35px #ffffff;">1,467</div>
<div class="t" style="left:2671.15px;top:1627.50px;font-size:15.76px;line-height:15.76px;font-weight:700;color:#ffffff;transform:scaleX(1.1670);-webkit-text-stroke:0.35px #ffffff;">4,519</div>
<div class="t" style="left:2791.99px;top:1627.50px;font-size:15.76px;line-height:15.76px;font-weight:700;color:#ffffff;transform:scaleX(1.1670);-webkit-text-stroke:0.35px #ffffff;">9,611</div>
<div class="t" style="left:791.37px;top:1391.20px;font-size:15.76px;line-height:15.76px;font-weight:700;color:#cfeaf8;">-</div>
<div class="a" style="left:11.00px;top:455.50px;width:2849.00px;height:1.00px;background:#a0a0a0;"></div>
<div class="a" style="left:806.80px;top:278.00px;width:1.00px;height:1392.00px;background:#a0a0a0;"></div>
<svg style="left:34px;top:35px;" width="25" height="24" viewBox="0 0 25 24">
<rect x="6" y="0.5" width="18" height="23" rx="2.5" fill="#1f7a45"/>
<rect x="6" y="0.5" width="18" height="7.5" rx="2" fill="#4fc36d"/>
<rect x="15" y="0.5" width="9" height="7.5" rx="1.5" fill="#8fe07f"/>
<rect x="15" y="8" width="9" height="7.5" fill="#2fa157"/>
<rect x="0.5" y="5.5" width="13" height="13" rx="2" fill="#13693a"/>
<path d="M3.8 8.6 L10.2 15.4 M10.2 8.6 L3.8 15.4" stroke="#fff" stroke-width="2"/>
</svg>
<div class="t" style="left:94.65px;top:38.15px;font-size:20.06px;line-height:20.06px;color:#f2f2f2;transform:scaleX(0.8909);">coffee-subscription-box.xlsx  -  Read-Only</div>
<svg style="left:432.3px;top:42.2px;" width="18" height="12" viewBox="0 0 18 12"><polyline points="2,2 9.0,10 16,2" fill="none" stroke="#f0f0f0" stroke-width="1.6" stroke-linecap="round" stroke-linejoin="round"/></svg>
<svg style="left:2473px;top:34px;" width="26" height="26" viewBox="0 0 26 26"><circle cx="15.5" cy="10" r="7" fill="none" stroke="#f0f0f0" stroke-width="1.7"/><line x1="10.5" y1="15" x2="3" y2="23" stroke="#f0f0f0" stroke-width="1.8" stroke-linecap="round"/></svg>
<svg style="left:2552px;top:28px;" width="38" height="38" viewBox="0 0 38 38"><defs><clipPath id="av"><circle cx="19" cy="19" r="18"/></clipPath></defs>
<g clip-path="url(#av)"><rect width="38" height="38" fill="#a9c8ca"/><rect y="0" width="38" height="11.5" fill="#cbd6ea"/>
<path d="M4 38 Q8 28 14 33 L24 33 Q30 28 34 38 Z" fill="#d6cdc4"/>
<ellipse cx="19.5" cy="21" rx="7.8" ry="11" fill="#9f7f70"/><path d="M12 17 Q13 9 19.5 9.5 Q26 9 27 17 Q25 12 19.5 12 Q14 12 12 17 Z" fill="#8a6d62"/>
<path d="M15 31 L19.5 38 L24 31 Z" fill="#8d6f64"/></g></svg>
<svg style="left:2627px;top:33px;" width="28" height="26" viewBox="0 0 28 26"><path d="M7 3 H21 L26 9 L14 24 L2 9 Z M2 9 H26 M9.5 3 L7.5 9 L14 24 L20.5 9 L18.5 3" fill="none" stroke="#f0f0f0" stroke-width="1.6" stroke-linejoin="round"/></svg>
<div class="a" style="left:2702.50px;top:45.60px;width:16.50px;height:1.60px;background:#f0f0f0;"></div>
<svg style="left:2772px;top:37px;" width="22" height="20" viewBox="0 0 22 20"><rect x="2" y="5.5" width="12" height="12" rx="2" fill="none" stroke="#f0f0f0" stroke-width="1.6"/><path d="M5.5 2.5 H15.5 Q19 2.5 19 6 V14" fill="none" stroke="#f0f0f0" stroke-width="1.6"/></svg>
<svg style="left:2845px;top:37px;" width="20" height="20" viewBox="0 0 20 20"><path d="M2 2 L18 18 M18 2 L2 18" stroke="#f0f0f0" stroke-width="1.8"/></svg>
<div class="a" style="left:2621.00px;top:87.00px;width:134.40px;height:36.00px;background:#1a1a1a;border:1px solid #5a5a5a;border-radius:7px;"></div>
<svg style="left:2627px;top:95px;" width="20" height="20" viewBox="0 0 20 20"><path d="M2 2.5 H18 V13 H8 L4.5 17 V13 H2 Z" fill="none" stroke="#f0f0f0" stroke-width="1.5" stroke-linejoin="round"/></svg>
<div class="t" style="left:2651.62px;top:97.44px;font-size:19.48px;line-height:19.48px;color:#f2f2f2;transform:scaleX(1.0057);">Comments</div>
<div class="a" style="left:2767.80px;top:87.00px;width:105.20px;height:36.00px;background:#3dab5c;border-radius:7px;"></div>
<svg style="left:2772px;top:94px;" width="22" height="22" viewBox="0 0 22 22"><path d="M10 8 H4 V19 H17 V15" fill="none" stroke="#0d1a10" stroke-width="1.6"/><path d="M8 15 Q9 8 17 8 M13.5 4.5 L17.5 8 L13.5 11.5" fill="none" stroke="#0d1a10" stroke-width="1.6" stroke-linejoin="round"/></svg>
<div class="t" style="left:2799.15px;top:97.44px;font-size:19.48px;line-height:19.48px;color:#0a140c;transform:scaleX(0.9440);">Share</div>
<svg style="left:2855.7px;top:101.75px;" width="12" height="8.5" viewBox="0 0 12 8.5"><polyline points="2,2 6.0,6.5 10,2" fill="none" stroke="#0a140c" stroke-width="1.6" stroke-linecap="round" stroke-linejoin="round"/></svg>
<div class="t" style="left:40.98px;top:98.09px;font-size:19.19px;line-height:19.19px;color:#f2f2f2;transform:scaleX(1.0312);">File</div>
<div class="t" style="left:110.25px;top:98.09px;font-size:19.19px;line-height:19.19px;font-weight:700;color:#f2f2f2;transform:scaleX(1.0666);">Home</div>
<div class="t" style="left:196.70px;top:98.09px;font-size:19.19px;line-height:19.19px;color:#f2f2f2;transform:scaleX(1.0199);">Insert</div>
<div class="t" style="left:275.36px;top:98.09px;font-size:19.19px;line-height:19.19px;color:#f2f2f2;transform:scaleX(1.0406);">Draw</div>
<div class="t" style="left:351.94px;top:98.09px;font-size:19.19px;line-height:19.19px;color:#f2f2f2;transform:scaleX(0.9913);">Page Layout</div>
<div class="t" style="left:489.38px;top:98.09px;font-size:19.19px;line-height:19.19px;color:#f2f2f2;transform:scaleX(1.0296);">Formulas</div>
<div class="t" style="left:598.37px;top:98.09px;font-size:19.19px;line-height:19.19px;color:#f2f2f2;transform:scaleX(1.0373);">Data</div>
<div class="t" style="left:669.27px;top:98.09px;font-size:19.19px;line-height:19.19px;color:#f2f2f2;transform:scaleX(0.9730);">Review</div>
<div class="t" style="left:761.72px;top:98.09px;font-size:19.19px;line-height:19.19px;color:#f2f2f2;transform:scaleX(0.9949);">View</div>
<div class="t" style="left:833.96px;top:98.09px;font-size:19.19px;line-height:19.19px;color:#f2f2f2;transform:scaleX(1.0648);">Automate</div>
<div class="t" style="left:949.34px;top:98.09px;font-size:19.19px;line-height:19.19px;color:#f2f2f2;transform:scaleX(1.0521);">Help</div>
<div class="a" style="left:111.00px;top:120.00px;width:58.00px;height:3.00px;background:#5fbf7f;border-radius:2px;"></div>
<div class="a" style="left:23.00px;top:128.00px;width:2855.00px;height:149.50px;background:#292929;border-radius:9px;"></div>
<div class="a" style="left:282.00px;top:135.00px;width:1.00px;height:134.00px;background:#4d4d4d;"></div>
<div class="a" style="left:632.50px;top:135.00px;width:1.00px;height:134.00px;background:#4d4d4d;"></div>
<div class="a" style="left:1082.80px;top:135.00px;width:1.00px;height:134.00px;background:#4d4d4d;"></div>
<div class="a" style="left:1324.90px;top:135.00px;width:1.00px;height:134.00px;background:#4d4d4d;"></div>
<div class="a" style="left:1544.00px;top:135.00px;width:1.00px;height:134.00px;background:#4d4d4d;"></div>
<div class="a" style="left:1868.20px;top:135.00px;width:1.00px;height:134.00px;background:#4d4d4d;"></div>
<div class="a" style="left:1963.10px;top:135.00px;width:1.00px;height:134.00px;background:#4d4d4d;"></div>
<div class="a" style="left:2056.40px;top:135.00px;width:1.00px;height:134.00px;background:#4d4d4d;"></div>
<div class="a" style="left:433.80px;top:194.00px;width:1.00px;height:35.30px;background:#4d4d4d;"></div>
<div class="a" style="left:498.50px;top:194.00px;width:1.00px;height:35.30px;background:#4d4d4d;"></div>
<div class="a" style="left:762.60px;top:146.00px;width:1.00px;height:35.40px;background:#4d4d4d;"></div>
<div class="a" style="left:762.60px;top:194.80px;width:1.00px;height:34.10px;background:#4d4d4d;"></div>
<div class="a" style="left:850.80px;top:144.00px;width:1.00px;height:93.40px;background:#4d4d4d;"></div>
<div class="a" style="left:1234.80px;top:193.60px;width:1.00px;height:35.30px;background:#4d4d4d;"></div>
<svg style="left:265px;top:256.5px;" width="13" height="13" viewBox="0 0 13 13"><path d="M1 9 V1 H9" fill="none" stroke="#e0e0e0" stroke-width="1.4"/><path d="M4 4 L11.5 11.5 M6 11.5 H11.5 V6" fill="none" stroke="#e0e0e0" stroke-width="1.4"/></svg>
<svg style="left:615.5px;top:256.5px;" width="13" height="13" viewBox="0 0 13 13"><path d="M1 9 V1 H9" fill="none" stroke="#e0e0e0" stroke-width="1.4"/><path d="M4 4 L11.5 11.5 M6 11.5 H11.5 V6" fill="none" stroke="#e0e0e0" stroke-width="1.4"/></svg>
<svg style="left:1065.5px;top:256.5px;" width="13" height="13" viewBox="0 0 13 13"><path d="M1 9 V1 H9" fill="none" stroke="#e0e0e0" stroke-width="1.4"/><path d="M4 4 L11.5 11.5 M6 11.5 H11.5 V6" fill="none" stroke="#e0e0e0" stroke-width="1.4"/></svg>
<svg style="left:1308.4px;top:256.5px;" width="13" height="13" viewBox="0 0 13 13"><path d="M1 9 V1 H9" fill="none" stroke="#e0e0e0" stroke-width="1.4"/><path d="M4 4 L11.5 11.5 M6 11.5 H11.5 V6" fill="none" stroke="#e0e0e0" stroke-width="1.4"/></svg>
<svg style="left:53px;top:139px;" width="46" height="50" viewBox="0 0 46 50">
<path d="M13 6 H7.5 V44 H24" fill="none" stroke="#8a8a8a" stroke-width="2"/>
<path d="M13 4.5 H19 Q19 1 22.5 1 Q26 1 26 4.5 H32 V9 H13 Z" fill="none" stroke="#8a8a8a" stroke-width="1.8"/>
<path d="M32 6 H36.5 V20" fill="none" stroke="#8a8a8a" stroke-width="2"/>
<rect x="23" y="21" width="19.5" height="26" fill="none" stroke="#8a8a8a" stroke-width="1.8"/></svg>
<div class="t" style="left:50.24px;top:195.01px;font-size:18.46px;line-height:18.46px;color:#8c8c8c;transform:scaleX(0.8999);">Paste</div>
<svg style="left:65.5px;top:222.25px;" width="12" height="8.5" viewBox="0 0 12 8.5"><polyline points="2,2 6.0,6.5 10,2" fill="none" stroke="#7a7a7a" stroke-width="1.8" stroke-linecap="round" stroke-linejoin="round"/></svg>
<svg style="left:114px;top:138px;" width="22" height="28" viewBox="0 0 22 28"><path d="M5 2 L15.5 20 M16 2 L5.5 20" stroke="#dcdcdc" stroke-width="1.1"/><circle cx="5.8" cy="22.5" r="3.2" fill="none" stroke="#4aa0e0" stroke-width="1.8"/><circle cx="14.8" cy="22.5" r="3.2" fill="none" stroke="#4aa0e0" stroke-width="1.8"/></svg>
<div class="t" style="left:141.53px;top:143.79px;font-size:18.60px;line-height:18.60px;color:#f2f2f2;transform:scaleX(0.9365);">Cut</div>
<svg style="left:111px;top:178px;" width="27" height="27" viewBox="0 0 27 27"><path d="M10 17.5 H2 V1.5 H10 L12.5 4" fill="none" stroke="#dcdcdc" stroke-width="1.5"/><path d="M10.5 6.5 H19 L24.5 12 V24.5 H10.5 Z M18.5 6.5 V12.5 H24.5 M13.5 17 H21 M13.5 20.5 H21" fill="none" stroke="#dcdcdc" stroke-width="1.5" stroke-linejoin="round"/></svg>
<div class="t" style="left:141.51px;top:183.26px;font-size:18.75px;line-height:18.75px;color:#f2f2f2;transform:scaleX(0.9489);">Copy</div>
<svg style="left:209.5px;top:187.35px;" width="12" height="8.5" viewBox="0 0 12 8.5"><polyline points="2,2 6.0,6.5 10,2" fill="none" stroke="#d8d8d8" stroke-width="1.8" stroke-linecap="round" stroke-linejoin="round"/></svg>
<svg style="left:111px;top:216px;" width="27" height="27" viewBox="0 0 27 27"><path d="M2 14 L13 8 L18 15 L11 24 Z" fill="none" stroke="#f0f0f0" stroke-width="1.5" stroke-linejoin="round"/><path d="M4.5 16.5 L15 15 L11 23 Z" fill="#f2a82e"/><path d="M13.5 8.5 L19 4 L21.5 1.5 Q24.5 2 25 4.5 L22.5 7 L17.5 13.5" fill="none" stroke="#f0f0f0" stroke-width="1.5" stroke-linejoin="round"/></svg>
<div class="t" style="left:140.96px;top:221.81px;font-size:18.46px;line-height:18.46px;color:#f2f2f2;transform:scaleX(0.9522);">Format Painter</div>
<div class="t" style="left:108.18px;top:255.13px;font-size:15.84px;line-height:15.84px;color:#e6e6e6;transform:scaleX(1.0303);">Clipboard</div>
<div class="a" style="left:295.00px;top:146.00px;width:180.30px;height:35.40px;background:#272727;border:1px solid #6a6a6a;border-radius:5px;"></div>
<div class="t" style="left:297.91px;top:155.94px;font-size:19.48px;line-height:19.48px;color:#f2f2f2;transform:scaleX(0.9191);">Tahoma</div>
<svg style="left:460.7px;top:159.9px;" width="13" height="9" viewBox="0 0 13 9"><polyline points="2,2 6.5,7 11,2" fill="none" stroke="#d8d8d8" stroke-width="1.8" stroke-linecap="round" stroke-linejoin="round"/></svg>
<div class="a" style="left:479.20px;top:146.00px;width:64.30px;height:35.40px;background:#272727;border:1px solid #6a6a6a;border-radius:5px;"></div>
<div class="t" style="left:480.64px;top:155.94px;font-size:19.48px;line-height:19.48px;color:#f2f2f2;transform:scaleX(1.1190);">8</div>
<svg style="left:528.5px;top:159.9px;" width="13" height="9" viewBox="0 0 13 9"><polyline points="2,2 6.5,7 11,2" fill="none" stroke="#d8d8d8" stroke-width="1.8" stroke-linecap="round" stroke-linejoin="round"/></svg>
<div class="t" style="left:553.95px;top:152.11px;font-size:23.98px;line-height:23.98px;color:#e8e8e8;transform:scaleX(1.1338);">A</div>
<svg style="left:572px;top:150px;" width="9" height="7" viewBox="0 0 9 7"><polyline points="1,5.5 4.5,1.5 8,5.5" fill="none" stroke="#4aa0e0" stroke-width="1.5"/></svg>
<div class="t" style="left:595.76px;top:154.62px;font-size:19.62px;line-height:19.62px;color:#e8e8e8;transform:scaleX(1.0932);">A</div>
<svg style="left:609px;top:151px;" width="9" height="7" viewBox="0 0 9 7"><polyline points="1,1.5 4.5,5.5 8,1.5" fill="none" stroke="#4aa0e0" stroke-width="1.5"/></svg>
<div class="t" style="left:305.66px;top:200.20px;font-size:22.24px;line-height:22.24px;font-weight:700;color:#e8e8e8;transform:scaleX(0.9141);">B</div>
<div class="t" style="left:344.95px;top:200.20px;font-size:22.24px;line-height:22.24px;color:#e8e8e8;font-style:italic;">I</div>
<div class="t" style="left:381.70px;top:200.20px;font-size:22.24px;line-height:22.24px;color:#e8e8e8;transform:scaleX(1.0650);">U</div>
<div class="a" style="left:383.00px;top:220.50px;width:14.50px;height:1.50px;background:#e8e8e8;"></div>
<svg style="left:412.5px;top:207.5px;" width="13" height="9" viewBox="0 0 13 9"><polyline points="2,2 6.5,7 11,2" fill="none" stroke="#d8d8d8" stroke-width="1.8" stroke-linecap="round" stroke-linejoin="round"/></svg>
<svg style="left:443px;top:198px;" width="27" height="27" viewBox="0 0 27 27"><rect x="2" y="2" width="22" height="22" fill="none" stroke="#cfcfcf" stroke-width="1.3" stroke-dasharray="2 1.6"/><path d="M13 4 V22 M4 13 H22" stroke="#cfcfcf" stroke-width="1.1" stroke-dasharray="2 1.6"/><line x1="1.5" y1="23.5" x2="24.5" y2="23.5" stroke="#f0f0f0" stroke-width="1.8"/></svg>
<svg style="left:477.5px;top:207.5px;" width="13" height="9" viewBox="0 0 13 9"><polyline points="2,2 6.5,7 11,2" fill="none" stroke="#d8d8d8" stroke-width="1.8" stroke-linecap="round" stroke-linejoin="round"/></svg>
<svg style="left:508px;top:200px;" width="27" height="25" viewBox="0 0 27 25"><path d="M4 10 L11 3 L18 10 L11 16 Z" fill="none" stroke="#e0e0e0" stroke-width="1.5" stroke-linejoin="round"/><path d="M18 5 Q22 6 21 12" fill="none" stroke="#4aa0e0" stroke-width="1.6"/><rect x="1" y="18.3" width="24" height="5" fill="#ffef00"/></svg>
<svg style="left:542.5px;top:207.5px;" width="13" height="9" viewBox="0 0 13 9"><polyline points="2,2 6.5,7 11,2" fill="none" stroke="#d8d8d8" stroke-width="1.8" stroke-linecap="round" stroke-linejoin="round"/></svg>
<div class="t" style="left:571.44px;top:198.39px;font-size:21.08px;line-height:21.08px;color:#e8e8e8;transform:scaleX(1.4335);">A</div>
<div class="a" style="left:570.00px;top:218.30px;width:23.30px;height:4.90px;background:#ff1a1a;"></div>
<svg style="left:604.0px;top:207.5px;" width="13" height="9" viewBox="0 0 13 9"><polyline points="2,2 6.5,7 11,2" fill="none" stroke="#d8d8d8" stroke-width="1.8" stroke-linecap="round" stroke-linejoin="round"/></svg>
<div class="t" style="left:428.69px;top:255.91px;font-size:15.99px;line-height:15.99px;color:#e6e6e6;">Font</div>
<svg style="left:652px;top:150px;" width="24" height="30" viewBox="0 0 24 30"><g stroke="#dcdcdc" stroke-width="1.6"><line x1="1" y1="2" x2="23" y2="2"/><line x1="4" y1="7.5" x2="20" y2="7.5"/><line x1="1" y1="13" x2="23" y2="13"/></g></svg>
<div class="a" style="left:685.20px;top:146.00px;width:35.30px;height:35.40px;background:#3a3a3a;border:1px solid #6e6e6e;border-radius:6px;"></div>
<svg style="left:691px;top:154px;" width="24" height="30" viewBox="0 0 24 30"><g stroke="#dcdcdc" stroke-width="1.6"><line x1="1" y1="2.5" x2="23" y2="2.5"/><line x1="4" y1="8" x2="20" y2="8"/><line x1="1" y1="13.5" x2="23" y2="13.5"/></g></svg>
<svg style="left:730px;top:160px;" width="24" height="30" viewBox="0 0 24 30"><g stroke="#dcdcdc" stroke-width="1.6"><line x1="1" y1="2.5" x2="23" y2="2.5"/><line x1="4" y1="8" x2="20" y2="8"/><line x1="1" y1="14" x2="23" y2="14"/></g></svg>
<svg style="left:771px;top:150px;" width="28" height="27" viewBox="0 0 28 27"><text x="1" y="17" font-size="13" fill="#dcdcdc" font-family="Liberation Sans" transform="rotate(-40 8 12)">ab</text><path d="M10 23 L25 6 M18.5 6 H25 V12.5" fill="none" stroke="#4aa0e0" stroke-width="1.7"/></svg>
<svg style="left:803.8px;top:160.3px;" width="13" height="9" viewBox="0 0 13 9"><polyline points="2,2 6.5,7 11,2" fill="none" stroke="#d8d8d8" stroke-width="1.8" stroke-linecap="round" stroke-linejoin="round"/></svg>
<svg style="left:868px;top:151px;" width="26" height="27" viewBox="0 0 26 27"><text x="1" y="11" font-size="12.5" fill="#dcdcdc" font-family="Liberation Sans">ab</text><text x="1" y="24" font-size="12.5" fill="#dcdcdc" font-family="Liberation Sans">c</text><path d="M21 9 V16 Q21 20 17 20 H10 M13 16.5 L9.5 20 L13 23.5" fill="none" stroke="#4aa0e0" stroke-width="1.7"/></svg>
<div class="t" style="left:897.43px;top:155.94px;font-size:19.48px;line-height:19.48px;color:#f2f2f2;transform:scaleX(0.8934);">Wrap Text</div>
<svg style="left:652px;top:199px;" width="24" height="30" viewBox="0 0 24 30"><g stroke="#dcdcdc" stroke-width="1.6"><line x1="1" y1="2" x2="23" y2="2"/><line x1="1" y1="8" x2="17" y2="8"/><line x1="1" y1="14" x2="23" y2="14"/><line x1="1" y1="20" x2="17" y2="20"/></g></svg>
<svg style="left:691px;top:199px;" width="24" height="30" viewBox="0 0 24 30"><g stroke="#dcdcdc" stroke-width="1.6"><line x1="1" y1="2" x2="23" y2="2"/><line x1="4" y1="8" x2="20" y2="8"/><line x1="1" y1="14" x2="23" y2="14"/><line x1="4" y1="20" x2="20" y2="20"/></g></svg>
<svg style="left:730px;top:199px;" width="24" height="30" viewBox="0 0 24 30"><g stroke="#dcdcdc" stroke-width="1.6"><line x1="1" y1="2" x2="23" y2="2"/><line x1="7" y1="8" x2="23" y2="8"/><line x1="1" y1="14" x2="23" y2="14"/><line x1="7" y1="20" x2="23" y2="20"/></g></svg>
<svg style="left:773px;top:199px;" width="24" height="24" viewBox="0 0 24 24"><g stroke="#dcdcdc" stroke-width="1.6"><line x1="1" y1="2" x2="23" y2="2"/><line x1="11" y1="8" x2="23" y2="8"/><line x1="11" y1="14" x2="23" y2="14"/><line x1="1" y1="20" x2="23" y2="20"/></g><path d="M9 11 H2 M5 8 L2 11 L5 14" fill="none" stroke="#4aa0e0" stroke-width="1.6"/></svg>
<svg style="left:812px;top:199px;" width="24" height="24" viewBox="0 0 24 24"><g stroke="#dcdcdc" stroke-width="1.6"><line x1="1" y1="2" x2="23" y2="2"/><line x1="11" y1="8" x2="23" y2="8"/><line x1="11" y1="14" x2="23" y2="14"/><line x1="1" y1="20" x2="23" y2="20"/></g><path d="M1 11 H8 M5 8 L8 11 L5 14" fill="none" stroke="#4aa0e0" stroke-width="1.6"/></svg>
<svg style="left:866px;top:199px;" width="25" height="25" viewBox="0 0 25 25"><rect x="1" y="1" width="22.5" height="22.5" fill="none" stroke="#cfcfcf" stroke-width="1.5"/><line x1="1" y1="6" x2="23.5" y2="6" stroke="#cfcfcf" stroke-width="1.3"/><line x1="1" y1="18.5" x2="23.5" y2="18.5" stroke="#cfcfcf" stroke-width="1.3"/><path d="M4 12.2 H21 M7.5 9 L4 12.2 L7.5 15.5 M17.5 9 L21 12.2 L17.5 15.5" fill="none" stroke="#4aa0e0" stroke-width="1.6"/><rect x="3" y="7.5" width="19" height="9.5" fill="none" stroke="#4aa0e0" stroke-width="1.3"/></svg>
<div class="t" style="left:896.02px;top:204.33px;font-size:18.31px;line-height:18.31px;color:#f2f2f2;transform:scaleX(0.9862);">Merge &amp; Center</div>
<svg style="left:1048.0px;top:208.0px;" width="13" height="9" viewBox="0 0 13 9"><polyline points="2,2 6.5,7 11,2" fill="none" stroke="#d8d8d8" stroke-width="1.8" stroke-linecap="round" stroke-linejoin="round"/></svg>
<div class="t" style="left:809.87px;top:255.13px;font-size:15.84px;line-height:15.84px;color:#e6e6e6;transform:scaleX(1.0259);">Alignment</div>
<div class="a" style="left:1096.20px;top:146.00px;width:217.00px;height:35.40px;background:#272727;border:1px solid #6a6a6a;border-radius:5px;"></div>
<div class="t" style="left:1097.84px;top:155.94px;font-size:19.48px;line-height:19.48px;color:#f2f2f2;transform:scaleX(0.8786);">General</div>
<svg style="left:1298.5px;top:159.9px;" width="13" height="9" viewBox="0 0 13 9"><polyline points="2,2 6.5,7 11,2" fill="none" stroke="#d8d8d8" stroke-width="1.8" stroke-linecap="round" stroke-linejoin="round"/></svg>
<div class="t" style="left:1104.92px;top:201.53px;font-size:23.26px;line-height:23.26px;color:#dcdcdc;transform:scaleX(1.2008);">$</div>
<svg style="left:1135.3px;top:207.5px;" width="13" height="9" viewBox="0 0 13 9"><polyline points="2,2 6.5,7 11,2" fill="none" stroke="#d8d8d8" stroke-width="1.8" stroke-linecap="round" stroke-linejoin="round"/></svg>
<div class="t" style="left:1162.01px;top:202.53px;font-size:23.26px;line-height:23.26px;color:#dcdcdc;transform:scaleX(1.1880);">%</div>
<svg style="left:1208px;top:202px;" width="14" height="21" viewBox="0 0 14 21"><circle cx="6.5" cy="6.5" r="5.2" fill="#dcdcdc"/><path d="M11.5 7 Q11.5 16 4 20" fill="none" stroke="#dcdcdc" stroke-width="2.6" stroke-linecap="round"/></svg>
<svg style="left:1243px;top:197px;" width="28" height="28" viewBox="0 0 28 28"><path d="M11 7 H2.5 M6 3.5 L2.5 7 L6 10.5" fill="none" stroke="#4aa0e0" stroke-width="1.8"/><text x="13" y="12.5" font-size="13.5" fill="#dcdcdc" font-family="Liberation Sans">0</text><text x="6" y="25" font-size="13.5" fill="#dcdcdc" font-family="Liberation Sans">.00</text></svg>
<svg style="left:1282px;top:197px;" width="28" height="28" viewBox="0 0 28 28"><text x="6" y="12.5" font-size="13.5" fill="#dcdcdc" font-family="Liberation Sans">.00</text><path d="M1.5 20.5 H11 M7.5 17 L11 20.5 L7.5 24" fill="none" stroke="#4aa0e0" stroke-width="1.8"/><text x="13" y="25" font-size="13.5" fill="#dcdcdc" font-family="Liberation Sans">.0</text></svg>
<div class="t" style="left:1161.63px;top:255.13px;font-size:15.84px;line-height:15.84px;color:#e6e6e6;transform:scaleX(1.0532);">Number</div>
<svg style="left:1347px;top:144px;" width="44" height="36" viewBox="0 0 44 36"><g fill="none" stroke="#d0d0d0" stroke-width="1.6"><rect x="1" y="2" width="42" height="33"/><line x1="15.0" y1="2" x2="15.0" y2="35"/><line x1="29.0" y1="2" x2="29.0" y2="35"/><line x1="1" y1="13" x2="43" y2="13"/><line x1="1" y1="24" x2="43" y2="24"/></g><rect x="15" y="13.5" width="29" height="9.5" fill="#1a7fd4"/><path d="M14 18 H0 M6 12 L0 18 L6 24" fill="none" stroke="#4aa0e0" stroke-width="1.6"/></svg>
<div class="t" style="left:1345.65px;top:195.63px;font-size:17.73px;line-height:17.73px;color:#f2f2f2;transform:scaleX(1.0119);">Insert</div>
<svg style="left:1362.0px;top:222.25px;" width="12" height="8.5" viewBox="0 0 12 8.5"><polyline points="2,2 6.0,6.5 10,2" fill="none" stroke="#d8d8d8" stroke-width="1.8" stroke-linecap="round" stroke-linejoin="round"/></svg>
<svg style="left:1412px;top:144px;" width="44" height="36" viewBox="0 0 44 36"><g fill="none" stroke="#d0d0d0" stroke-width="1.6"><rect x="1" y="2" width="42" height="33"/><line x1="15.0" y1="2" x2="15.0" y2="35"/><line x1="29.0" y1="2" x2="29.0" y2="35"/><line x1="1" y1="13" x2="43" y2="13"/><line x1="1" y1="24" x2="43" y2="24"/></g><rect x="6" y="13.5" width="25" height="9.5" fill="#1a7fd4"/><path d="M27 9 L40 27 M40 9 L27 27" stroke="#e04848" stroke-width="1.7"/></svg>
<div class="t" style="left:1408.46px;top:195.63px;font-size:17.73px;line-height:17.73px;color:#f2f2f2;transform:scaleX(0.9936);">Delete</div>
<svg style="left:1427.0px;top:222.25px;" width="12" height="8.5" viewBox="0 0 12 8.5"><polyline points="2,2 6.0,6.5 10,2" fill="none" stroke="#d8d8d8" stroke-width="1.8" stroke-linecap="round" stroke-linejoin="round"/></svg>
<svg style="left:1478px;top:137px;" width="44" height="43" viewBox="0 0 44 43"><g fill="none" stroke="#d0d0d0" stroke-width="1.6"><rect x="1" y="9" width="42" height="33"/><line x1="15.0" y1="9" x2="15.0" y2="42"/><line x1="29.0" y1="9" x2="29.0" y2="42"/><line x1="1" y1="20" x2="43" y2="20"/><line x1="1" y1="31" x2="43" y2="31"/></g><rect x="12" y="20.5" width="20" height="9.5" fill="#1a7fd4"/><path d="M9 2 H35 M9 0 V4 M35 0 V4" stroke="#4aa0e0" stroke-width="1.5"/></svg>
<div class="t" style="left:1470.68px;top:193.93px;font-size:17.73px;line-height:17.73px;color:#f2f2f2;transform:scaleX(1.0443);">Format</div>
<svg style="left:1493.5px;top:220.45px;" width="12" height="8.5" viewBox="0 0 12 8.5"><polyline points="2,2 6.0,6.5 10,2" fill="none" stroke="#d8d8d8" stroke-width="1.8" stroke-linecap="round" stroke-linejoin="round"/></svg>
<div class="t" style="left:1417.24px;top:255.13px;font-size:15.84px;line-height:15.84px;color:#e6e6e6;transform:scaleX(0.9545);">Cells</div>
<svg style="left:1563px;top:139px;" width="24" height="26" viewBox="0 0 24 26"><path d="M20.5 4.5 V2 H2.5 L11.5 12.5 L2.5 23 H20.5 V20.5" fill="none" stroke="#d8d8d8" stroke-width="1.6"/></svg>
<div class="t" style="left:1593.16px;top:143.62px;font-size:19.62px;line-height:19.62px;color:#f2f2f2;transform:scaleX(0.9208);">AutoSum</div>
<svg style="left:1692.5px;top:148.2px;" width="13" height="9" viewBox="0 0 13 9"><polyline points="2,2 6.5,7 11,2" fill="none" stroke="#d8d8d8" stroke-width="1.8" stroke-linecap="round" stroke-linejoin="round"/></svg>
<svg style="left:1561px;top:179px;" width="27" height="24" viewBox="0 0 27 24"><rect x="1.5" y="1.5" width="23" height="20" fill="none" stroke="#d0d0d0" stroke-width="1.6"/><line x1="1.5" y1="5" x2="24.5" y2="5" stroke="#d0d0d0" stroke-width="1.3"/><path d="M13 7.5 V18 M8.5 13.5 L13 18 L17.5 13.5" fill="none" stroke="#4aa0e0" stroke-width="1.7"/></svg>
<div class="t" style="left:1591.69px;top:183.26px;font-size:18.75px;line-height:18.75px;color:#f2f2f2;transform:scaleX(0.9817);">Fill</div>
<svg style="left:1618.0px;top:186.35px;" width="12" height="8.5" viewBox="0 0 12 8.5"><polyline points="2,2 6.0,6.5 10,2" fill="none" stroke="#d8d8d8" stroke-width="1.8" stroke-linecap="round" stroke-linejoin="round"/></svg>
<svg style="left:1561px;top:216px;" width="27" height="27" viewBox="0 0 27 27"><path d="M13 2 L25 13 L13 24.5 L1.5 13 Z" fill="none" stroke="#c86ad8" stroke-width="1.6" stroke-linejoin="round"/><path d="M1.5 13 L7 7.5 L18.5 19 L13 24.5 Z" fill="#b350c8"/></svg>
<div class="t" style="left:1592.36px;top:221.81px;font-size:18.46px;line-height:18.46px;color:#f2f2f2;transform:scaleX(0.9099);">Clear</div>
<svg style="left:1636.5px;top:224.35px;" width="12" height="8.5" viewBox="0 0 12 8.5"><polyline points="2,2 6.0,6.5 10,2" fill="none" stroke="#d8d8d8" stroke-width="1.8" stroke-linecap="round" stroke-linejoin="round"/></svg>
<svg style="left:1727px;top:139px;" width="48" height="46" viewBox="0 0 48 46"><text x="2.2" y="21.5" font-size="25" fill="#4aa0e0" font-family="Liberation Sans" transform="scale(0.95 1)">A</text><text x="3" y="42.7" font-size="25" fill="#d0d0d0" font-family="Liberation Sans" transform="scale(0.95 1)">Z</text><path d="M21.5 13 H44.5 L35 24 V36 H29 V24 Z" fill="none" stroke="#d0d0d0" stroke-width="1.6" stroke-linejoin="miter"/></svg>
<div class="t" style="left:1723.81px;top:193.93px;font-size:17.73px;line-height:17.73px;color:#f2f2f2;transform:scaleX(1.0851);">Sort &amp;</div>
<div class="t" style="left:1722.51px;top:217.53px;font-size:17.73px;line-height:17.73px;color:#f2f2f2;transform:scaleX(1.0222);">Filter</div>
<svg style="left:1766.5px;top:220.45px;" width="12" height="8.5" viewBox="0 0 12 8.5"><polyline points="2,2 6.0,6.5 10,2" fill="none" stroke="#d8d8d8" stroke-width="1.8" stroke-linecap="round" stroke-linejoin="round"/></svg>
<svg style="left:1788px;top:139px;" width="56" height="46" viewBox="0 0 56 46"><circle cx="37.5" cy="17.5" r="15.5" fill="none" stroke="#d0d0d0" stroke-width="1.6"/><line x1="26.5" y1="29.5" x2="11" y2="45" stroke="#d0d0d0" stroke-width="1.7"/></svg>
<div class="t" style="left:1793.77px;top:193.93px;font-size:17.73px;line-height:17.73px;color:#f2f2f2;transform:scaleX(1.0536);">Find &amp;</div>
<div class="t" style="left:1789.73px;top:217.53px;font-size:17.73px;line-height:17.73px;color:#f2f2f2;transform:scaleX(0.9413);">Select</div>
<svg style="left:1840.3px;top:220.45px;" width="12" height="8.5" viewBox="0 0 12 8.5"><polyline points="2,2 6.0,6.5 10,2" fill="none" stroke="#d8d8d8" stroke-width="1.8" stroke-linecap="round" stroke-linejoin="round"/></svg>
<div class="t" style="left:1681.28px;top:255.13px;font-size:15.84px;line-height:15.84px;color:#e6e6e6;transform:scaleX(1.0188);">Editing</div>
<svg style="left:1893px;top:139px;" width="46" height="46" viewBox="0 0 46 46"><g fill="none" stroke="#d4633a" stroke-width="2"><rect x="2" y="2" width="41" height="41"/><rect x="7" y="7" width="13.5" height="13.5"/><rect x="24.5" y="7" width="13.5" height="13.5"/><rect x="7" y="24.5" width="13.5" height="13.5"/><rect x="24.5" y="24.5" width="13.5" height="13.5"/></g></svg>
<div class="t" style="left:1885.16px;top:193.93px;font-size:17.73px;line-height:17.73px;color:#f2f2f2;transform:scaleX(1.0448);">Add-ins</div>
<div class="t" style="left:1888.87px;top:255.13px;font-size:15.84px;line-height:15.84px;color:#e6e6e6;transform:scaleX(0.9848);">Add-ins</div>
<svg style="left:1987px;top:139px;" width="46" height="46" viewBox="0 0 46 46"><rect x="2" y="2" width="41" height="41" fill="none" stroke="#c8c8c8" stroke-width="1.6"/><rect x="2" y="2" width="41" height="5" fill="#8a8a8a"/><g stroke="#8a8a8a" stroke-width="1.2"><line x1="2" y1="30" x2="43" y2="30"/><line x1="15" y1="30" x2="15" y2="43"/><line x1="29" y1="30" x2="29" y2="43"/></g><circle cx="19.5" cy="20" r="13" fill="#292929" stroke="#d8d8d8" stroke-width="1.6"/><line x1="29" y1="29" x2="43" y2="43" stroke="#d8d8d8" stroke-width="1.8"/><rect x="12" y="18" width="4" height="8" fill="#9a9a9a"/><rect x="17" y="12" width="4" height="14" fill="#d0d0d0"/><rect x="22" y="16" width="4" height="10" fill="#3a9ee8"/></svg>
<div class="t" style="left:1980.17px;top:193.93px;font-size:17.73px;line-height:17.73px;color:#f2f2f2;transform:scaleX(0.9763);">Analyze</div>
<div class="t" style="left:1990.95px;top:217.53px;font-size:17.73px;line-height:17.73px;color:#f2f2f2;">Data</div>
<svg style="left:2155px;top:141px;" width="116" height="116" viewBox="0 0 116 116"><circle cx="57.5" cy="57.5" r="56.5" fill="#ffffff"/><rect x="26.5" y="31.5" width="61.5" height="53.5" fill="#5a5ee8"/><rect x="35" y="40.5" width="19" height="18.5" fill="#fff"/><rect x="61" y="40.5" width="19.5" height="18.5" fill="#fff"/><rect x="35" y="62.5" width="19" height="14" fill="#fff"/><rect x="61" y="62.5" width="19.5" height="14" fill="#fff"/></svg>
<div class="t" style="left:2292.81px;top:155.35px;font-size:50.29px;line-height:50.29px;font-weight:700;color:#ffffff;transform:scaleX(0.8416);-webkit-text-stroke:1.3px #fff;">F</div>
<div class="t" style="left:2318.07px;top:155.35px;font-size:50.29px;line-height:50.29px;font-weight:700;color:#ffffff;transform:scaleX(1.0623);-webkit-text-stroke:1.3px #fff;">I</div>
<div class="t" style="left:2331.60px;top:155.35px;font-size:50.29px;line-height:50.29px;font-weight:700;color:#ffffff;transform:scaleX(1.0247);-webkit-text-stroke:1.3px #fff;">N</div>
<div class="t" style="left:2367.50px;top:155.35px;font-size:50.29px;line-height:50.29px;font-weight:700;color:#ffffff;transform:scaleX(1.0851);-webkit-text-stroke:1.3px #fff;">M</div>
<div class="t" style="left:2450.42px;top:155.35px;font-size:50.29px;line-height:50.29px;font-weight:700;color:#ffffff;transform:scaleX(0.9570);-webkit-text-stroke:1.3px #fff;">D</div>
<div class="t" style="left:2486.03px;top:155.35px;font-size:50.29px;line-height:50.29px;font-weight:700;color:#ffffff;transform:scaleX(0.7147);-webkit-text-stroke:1.3px #fff;">E</div>
<div class="t" style="left:2511.42px;top:155.35px;font-size:50.29px;line-height:50.29px;font-weight:700;color:#ffffff;transform:scaleX(0.7157);-webkit-text-stroke:1.3px #fff;">L</div>
<div class="t" style="left:2533.92px;top:155.35px;font-size:50.29px;line-height:50.29px;font-weight:700;color:#ffffff;transform:scaleX(0.8512);-webkit-text-stroke:1.3px #fff;">S</div>
<div class="t" style="left:2563.62px;top:155.35px;font-size:50.29px;line-height:50.29px;font-weight:700;color:#ffffff;transform:scaleX(0.7157);-webkit-text-stroke:1.3px #fff;">L</div>
<div class="t" style="left:2586.23px;top:155.35px;font-size:50.29px;line-height:50.29px;font-weight:700;color:#ffffff;transform:scaleX(0.9705);-webkit-text-stroke:1.3px #fff;">A</div>
<div class="t" style="left:2622.19px;top:155.35px;font-size:50.29px;line-height:50.29px;font-weight:700;color:#ffffff;transform:scaleX(0.8475);-webkit-text-stroke:1.3px #fff;">B</div>
<svg style="left:2410px;top:150px;" width="44" height="52" viewBox="0 0 44 52"><path d="M14.5 8.8 A17.8 17.8 0 1 0 29.5 8.8" fill="none" stroke="#fff" stroke-width="0"/><circle cx="21.8" cy="30.3" r="13.6" fill="none" stroke="#fff" stroke-width="8.4"/><rect x="12.5" y="9" width="19" height="14" fill="#292929"/><rect x="16.9" y="4.7" width="9" height="26.8" rx="4.5" fill="#fff"/><path d="M8.3 30.3 A13.6 13.6 0 0 1 14 19.3" fill="none" stroke="#fff" stroke-width="8.4"/><path d="M35.3 30.3 A13.6 13.6 0 0 0 29.6 19.3" fill="none" stroke="#fff" stroke-width="8.4"/></svg>
<div class="t" style="left:2294.12px;top:206.80px;font-size:37.06px;line-height:37.06px;color:#ffffff;transform:scaleX(1.0821);">T</div>
<div class="t" style="left:2336.19px;top:206.80px;font-size:37.06px;line-height:37.06px;color:#ffffff;transform:scaleX(1.1653);">e</div>
<div class="t" style="left:2379.92px;top:206.80px;font-size:37.06px;line-height:37.06px;color:#ffffff;transform:scaleX(1.1376);">m</div>
<div class="t" style="left:2435.87px;top:206.80px;font-size:37.06px;line-height:37.06px;color:#ffffff;transform:scaleX(1.1931);">p</div>
<div class="t" style="left:2479.81px;top:206.80px;font-size:37.06px;line-height:37.06px;color:#ffffff;transform:scaleX(1.2264);">l</div>
<div class="t" style="left:2510.45px;top:206.80px;font-size:37.06px;line-height:37.06px;color:#ffffff;transform:scaleX(0.9343);">a</div>
<div class="t" style="left:2553.67px;top:206.80px;font-size:37.06px;line-height:37.06px;color:#ffffff;transform:scaleX(1.2225);">t</div>
<div class="t" style="left:2588.25px;top:206.80px;font-size:37.06px;line-height:37.06px;color:#ffffff;transform:scaleX(1.1251);">e</div>
<div class="t" style="left:2633.11px;top:206.80px;font-size:37.06px;line-height:37.06px;color:#ffffff;transform:scaleX(1.0520);">s</div>
<svg style="left:2848.0px;top:250.5px;" width="19" height="13" viewBox="0 0 19 13"><polyline points="2,2 9.5,11 17,2" fill="none" stroke="#e0e0e0" stroke-width="1.6" stroke-linecap="round" stroke-linejoin="round"/></svg>
<div class="a" style="left:2860.00px;top:278.00px;width:29.00px;height:1392.00px;background:#141414;"></div>
<div class="a" style="left:2862.00px;top:282.00px;width:26.00px;height:18.00px;background:#1c1c1c;border-radius:9px;"></div>
<svg style="left:2868px;top:285px;" width="16" height="12" viewBox="0 0 16 12"><path d="M8 1.5 L14.5 10.5 H1.5 Z" fill="#9c9c9c" stroke="#9c9c9c" stroke-width="1.2" stroke-linejoin="round"/></svg>
<div class="a" style="left:2870.00px;top:304.00px;width:12.00px;height:1024.00px;background:#9c9c9c;border-radius:6px;"></div>
<div class="a" style="left:2862.00px;top:1647.00px;width:26.00px;height:23.00px;background:#1c1c1c;border-radius:9px;"></div>
<svg style="left:2868px;top:1653px;" width="16" height="12" viewBox="0 0 16 12"><path d="M8 10.5 L14.5 1.5 H1.5 Z" fill="#9c9c9c" stroke="#9c9c9c" stroke-width="1.2" stroke-linejoin="round"/></svg>
<div class="a" style="left:11.00px;top:1670.00px;width:2880.00px;height:48.00px;background:#0b0b0b;"></div>
<div class="a" style="left:11.00px;top:1717.50px;width:2880.00px;height:1.00px;background:#2c2c2c;"></div>
<div class="a" style="left:11.00px;top:1718.50px;width:2880.00px;height:32.50px;background:#151515;"></div>
<svg style="left:43px;top:1684px;" width="14" height="18" viewBox="0 0 14 18"><polyline points="10.5,2 4,9 10.5,16" fill="none" stroke="#9a9a9a" stroke-width="1.6" stroke-linejoin="round"/></svg>
<svg style="left:92px;top:1684px;" width="14" height="18" viewBox="0 0 14 18"><polyline points="3.5,2 10,9 3.5,16" fill="none" stroke="#9a9a9a" stroke-width="1.6" stroke-linejoin="round"/></svg>
<div class="t" style="left:188.95px;top:1685.49px;font-size:21.08px;line-height:21.08px;color:#f2f2f2;transform:scaleX(0.9936);">Contents</div>
<div class="a" style="left:299.00px;top:1676.00px;width:127.70px;height:35.70px;background:#fde96b;border-radius:7px;"></div>
<div class="t" style="left:312.29px;top:1685.49px;font-size:21.08px;line-height:21.08px;color:#111111;transform:scaleX(0.9898);">Dashboard</div>
<div class="a" style="left:440.00px;top:1676.00px;width:105.50px;height:35.70px;background:#fde96b;border-radius:7px;"></div>
<div class="t" style="left:452.85px;top:1685.49px;font-size:21.08px;line-height:21.08px;color:#111111;transform:scaleX(0.9573);">Revenue</div>
<div class="a" style="left:559.00px;top:1676.00px;width:157.80px;height:35.70px;background:#fde96b;border-radius:7px;"></div>
<div class="t" style="left:571.43px;top:1685.49px;font-size:21.08px;line-height:21.08px;color:#111111;transform:scaleX(0.9178);">COGS &amp; OPEX</div>
<div class="a" style="left:730.00px;top:1676.00px;width:89.00px;height:35.70px;background:#fde96b;border-radius:7px;"></div>
<div class="t" style="left:742.03px;top:1685.49px;font-size:21.08px;line-height:21.08px;color:#111111;transform:scaleX(0.9961);">Payroll</div>
<div class="a" style="left:831.80px;top:1676.00px;width:87.00px;height:35.70px;background:#fde96b;border-radius:7px;"></div>
<div class="t" style="left:844.59px;top:1685.49px;font-size:21.08px;line-height:21.08px;color:#111111;transform:scaleX(0.8682);">CAPEX</div>
<div class="a" style="left:932.00px;top:1676.00px;width:113.00px;height:35.70px;background:#fde96b;border-radius:7px;"></div>
<div class="t" style="left:944.47px;top:1685.49px;font-size:21.08px;line-height:21.08px;color:#111111;transform:scaleX(0.9788);">CapTable</div>
<div class="a" style="left:1057.70px;top:1676.00px;width:90.00px;height:35.70px;background:#fde96b;border-radius:7px;"></div>
<div class="t" style="left:1070.25px;top:1685.49px;font-size:21.08px;line-height:21.08px;color:#111111;">Capital</div>
<div class="a" style="left:1160.80px;top:1676.00px;width:41.80px;height:35.70px;background:#52b5ea;border-radius:7px;"></div>
<div class="t" style="left:1174.22px;top:1685.49px;font-size:21.08px;line-height:21.08px;color:#111111;transform:scaleX(0.8163);">IS</div>
<div class="a" style="left:1277.00px;top:1676.00px;width:47.70px;height:35.70px;background:#52b5ea;border-radius:7px;"></div>
<div class="t" style="left:1290.54px;top:1685.49px;font-size:21.08px;line-height:21.08px;color:#111111;transform:scaleX(0.7856);">BS</div>
<div class="a" style="left:1338.40px;top:1676.00px;width:114.40px;height:35.70px;background:#52b5ea;border-radius:7px;"></div>
<div class="t" style="left:1350.79px;top:1685.49px;font-size:21.08px;line-height:21.08px;color:#111111;transform:scaleX(0.9427);">Scenarios</div>
<div class="a" style="left:1466.00px;top:1676.00px;width:114.70px;height:35.70px;background:#52b5ea;border-radius:7px;"></div>
<div class="t" style="left:1479.41px;top:1685.49px;font-size:21.08px;line-height:21.08px;color:#111111;transform:scaleX(1.0248);">Valuation</div>
<div class="a" style="left:1594.00px;top:1676.00px;width:113.70px;height:35.70px;background:#52b5ea;border-radius:7px;"></div>
<div class="t" style="left:1607.26px;top:1685.49px;font-size:21.08px;line-height:21.08px;color:#111111;transform:scaleX(0.9725);">Summary</div>
<div class="a" style="left:1721.00px;top:1676.00px;width:47.75px;height:35.70px;background:#52b5ea;border-radius:7px;"></div>
<div class="t" style="left:1733.26px;top:1685.49px;font-size:21.08px;line-height:21.08px;color:#111111;transform:scaleX(0.8352);">BE</div>
<div class="a" style="left:1782.00px;top:1676.00px;width:72.00px;height:35.70px;background:#52b5ea;border-radius:7px;"></div>
<div class="t" style="left:1794.13px;top:1685.49px;font-size:21.08px;line-height:21.08px;color:#111111;transform:scaleX(0.9071);">ROIC</div>
<div class="a" style="left:1866.80px;top:1676.00px;width:84.60px;height:35.70px;background:#52b5ea;border-radius:7px;"></div>
<div class="t" style="left:1879.09px;top:1685.49px;font-size:21.08px;line-height:21.08px;color:#111111;transform:scaleX(0.9573);">Charts</div>
<div class="a" style="left:1965.00px;top:1676.00px;width:63.70px;height:35.70px;background:#52b5ea;border-radius:7px;"></div>
<div class="t" style="left:1977.79px;top:1685.49px;font-size:21.08px;line-height:21.08px;color:#111111;transform:scaleX(0.8709);">KPIs</div>
<div class="a" style="left:2042.30px;top:1676.00px;width:29.70px;height:35.70px;background:#52b5ea;border-radius:7px 0 0 7px;"></div>
<div class="a" style="left:2042px;top:1676px;width:30px;height:36px;overflow:hidden"><div class="t" style="left:10px;top:8.68px;font-size:21.08px;line-height:21.08px;color:#111;transform:scaleX(1.08)">Scenarios</div></div>
<div class="a" style="left:291.50px;top:1680.00px;width:1.00px;height:28.00px;background:#5a5a5a;"></div>
<div class="a" style="left:432.90px;top:1680.00px;width:1.00px;height:28.00px;background:#5a5a5a;"></div>
<div class="a" style="left:552.10px;top:1680.00px;width:1.00px;height:28.00px;background:#5a5a5a;"></div>
<div class="a" style="left:722.50px;top:1680.00px;width:1.00px;height:28.00px;background:#5a5a5a;"></div>
<div class="a" style="left:825.10px;top:1680.00px;width:1.00px;height:28.00px;background:#5a5a5a;"></div>
<div class="a" style="left:925.10px;top:1680.00px;width:1.00px;height:28.00px;background:#5a5a5a;"></div>
<div class="a" style="left:1050.90px;top:1680.00px;width:1.00px;height:28.00px;background:#5a5a5a;"></div>
<div class="a" style="left:1153.50px;top:1680.00px;width:1.00px;height:28.00px;background:#5a5a5a;"></div>
<div class="a" style="left:1208.50px;top:1680.00px;width:1.00px;height:28.00px;background:#5a5a5a;"></div>
<div class="a" style="left:1270.20px;top:1680.00px;width:1.00px;height:28.00px;background:#5a5a5a;"></div>
<div class="a" style="left:1330.50px;top:1680.00px;width:1.00px;height:28.00px;background:#5a5a5a;"></div>
<div class="a" style="left:1459.20px;top:1680.00px;width:1.00px;height:28.00px;background:#5a5a5a;"></div>
<div class="a" style="left:1587.00px;top:1680.00px;width:1.00px;height:28.00px;background:#5a5a5a;"></div>
<div class="a" style="left:1714.30px;top:1680.00px;width:1.00px;height:28.00px;background:#5a5a5a;"></div>
<div class="a" style="left:1774.80px;top:1680.00px;width:1.00px;height:28.00px;background:#5a5a5a;"></div>
<div class="a" style="left:1859.50px;top:1680.00px;width:1.00px;height:28.00px;background:#5a5a5a;"></div>
<div class="a" style="left:1958.00px;top:1680.00px;width:1.00px;height:28.00px;background:#5a5a5a;"></div>
<div class="a" style="left:2034.70px;top:1680.00px;width:1.00px;height:28.00px;background:#5a5a5a;"></div>
<svg style="left:1205px;top:1670px" width="70" height="43" viewBox="1205 1670 70 43"><defs><linearGradient id="cfg" x1="0" y1="0" x2="0" y2="1"><stop offset="0" stop-color="#ffffff"/><stop offset="0.25" stop-color="#f8fbfd"/><stop offset="1" stop-color="#cfe5f4"/></linearGradient></defs><path d="M1269.9 1670 H1263.9 V1676 A6 6 0 0 1 1269.9 1670 Z" fill="#ffffff"/><path d="M1209.8 1670 H1215.8 V1676 A6 6 0 0 0 1209.8 1670 Z" fill="#ffffff"/><path d="M1215.8 1670 H1263.9 V1706.9 A5 5 0 0 1 1258.9 1711.9 H1220.8 A5 5 0 0 1 1215.8 1706.9 Z" fill="url(#cfg)"/></svg>
<div class="t" style="left:1227.72px;top:1680.44px;font-size:21.37px;line-height:21.37px;color:#111111;transform:scaleX(0.8277);">CF</div>
<div class="a" style="left:1228.00px;top:1705.00px;width:23.90px;height:2.90px;background:#1a7f46;border-radius:1px;"></div>
<svg style="left:2084px;top:1688px;" width="22" height="10" viewBox="0 0 22 10"><circle cx="3.5" cy="5" r="2.6" fill="#e8e8e8"/><circle cx="10.5" cy="5" r="2.6" fill="#e8e8e8"/><circle cx="17.5" cy="5" r="2.6" fill="#e8e8e8"/></svg>
<svg style="left:2133px;top:1684px;" width="21" height="19" viewBox="0 0 21 19"><path d="M10.5 1 V18 M2 9.5 H19" stroke="#e8e8e8" stroke-width="1.6"/></svg>
<svg style="left:2188px;top:1685px;" width="8" height="18" viewBox="0 0 8 18"><circle cx="4" cy="3" r="2" fill="#e8e8e8"/><circle cx="4" cy="9.2" r="2" fill="#e8e8e8"/><circle cx="4" cy="15.4" r="2" fill="#e8e8e8"/></svg>
<div class="a" style="left:2215.60px;top:1680.50px;width:644.00px;height:25.00px;background:#181818;border-radius:13px;"></div>
<svg style="left:2221px;top:1685px;" width="16" height="16" viewBox="0 0 16 16"><path d="M2 8 L12.5 1.5 V14.5 Z" fill="#9c9c9c" stroke="#9c9c9c" stroke-width="1.2" stroke-linejoin="round"/></svg>
<div class="a" style="left:2241.80px;top:1687.00px;width:158.50px;height:12.00px;background:#9c9c9c;border-radius:6px;"></div>
<svg style="left:2840px;top:1685px;" width="16" height="16" viewBox="0 0 16 16"><path d="M13.5 8 L3 1.5 V14.5 Z" fill="#9c9c9c" stroke="#9c9c9c" stroke-width="1.2" stroke-linejoin="round"/></svg>
<div class="t" style="left:25.76px;top:1727.47px;font-size:17.44px;line-height:17.44px;color:#e8e8e8;transform:scaleX(0.8704);">Ready</div>
<svg style="left:98px;top:1724px;" width="25" height="22" viewBox="0 0 25 22"><rect x="1.5" y="1.5" width="21" height="17" fill="none" stroke="#e8e8e8" stroke-width="1.5"/><line x1="1.5" y1="5.5" x2="22.5" y2="5.5" stroke="#e8e8e8" stroke-width="1.4"/><line x1="4" y1="9" x2="9" y2="9" stroke="#e8e8e8" stroke-width="1.3"/><line x1="4" y1="12" x2="8" y2="12" stroke="#e8e8e8" stroke-width="1.3"/><line x1="4" y1="15" x2="8" y2="15" stroke="#e8e8e8" stroke-width="1.3"/><circle cx="15.5" cy="14" r="5" fill="#151515" stroke="#e8e8e8" stroke-width="1.5"/><circle cx="15.5" cy="14" r="2" fill="#e8e8e8"/></svg>
<svg style="left:145px;top:1723px;" width="25" height="25" viewBox="0 0 25 25"><circle cx="12" cy="3.5" r="2.2" fill="none" stroke="#e8e8e8" stroke-width="1.4"/><path d="M2 7.5 Q12 11 22 7.5 M12 9.5 V15 L6 23 M12 15 L15 18" fill="none" stroke="#e8e8e8" stroke-width="1.5" stroke-linecap="round"/><path d="M15.5 17 L23 24 M23 17 L15.5 24" stroke="#e8e8e8" stroke-width="1.5"/></svg>
<div class="t" style="left:172.59px;top:1727.47px;font-size:17.44px;line-height:17.44px;font-weight:700;color:#f0f0f0;transform:scaleX(0.9065);">Accessibility: Investigate</div>
<div class="a" style="left:2445.00px;top:1718.50px;width:59.60px;height:32.50px;background:#262626;"></div>
<svg style="left:2463px;top:1724px;" width="22" height="21" viewBox="0 0 22 21"><g fill="none" stroke="#f0f0f0" stroke-width="1.6"><rect x="1" y="1" width="19.5" height="18.5"/><line x1="7.5" y1="1" x2="7.5" y2="19.5"/><line x1="14" y1="1" x2="14" y2="19.5"/><line x1="1" y1="7.2" x2="20.5" y2="7.2"/><line x1="1" y1="13.4" x2="20.5" y2="13.4"/></g></svg>
<svg style="left:2523px;top:1724px;" width="24" height="21" viewBox="0 0 24 21"><g fill="none" stroke="#f0f0f0" stroke-width="1.6"><rect x="1" y="1" width="21.5" height="18.5"/><rect x="5.5" y="5" width="12.5" height="10.5"/><line x1="8" y1="8" x2="15.5" y2="8"/><line x1="8" y1="10.5" x2="15.5" y2="10.5"/><line x1="8" y1="13" x2="15.5" y2="13"/></g></svg>
<svg style="left:2583px;top:1724px;" width="24" height="21" viewBox="0 0 24 21"><g fill="none" stroke="#f0f0f0" stroke-width="1.6"><rect x="1" y="1" width="21.5" height="18.5"/><path d="M7.5 1 V9.5 H13.5 V1"/></g></svg>
<div class="a" style="left:2633.40px;top:1734.00px;width:11.20px;height:1.40px;background:#e0e0e0;"></div>
<div class="a" style="left:2652.90px;top:1733.80px;width:147.80px;height:1.80px;background:#bdbdbd;"></div>
<div class="a" style="left:2723.00px;top:1726.00px;width:7.80px;height:17.00px;background:#bdbdbd;"></div>
<svg style="left:2807px;top:1727px;" width="16" height="16" viewBox="0 0 16 16"><path d="M8 1.5 V14.5 M1.5 8 H14.5" stroke="#e0e0e0" stroke-width="1.5"/></svg>
<div class="t" style="left:2838.80px;top:1727.47px;font-size:16.86px;line-height:16.86px;color:#f0f0f0;transform:scaleX(0.9384);">100%</div>
</body></html>
